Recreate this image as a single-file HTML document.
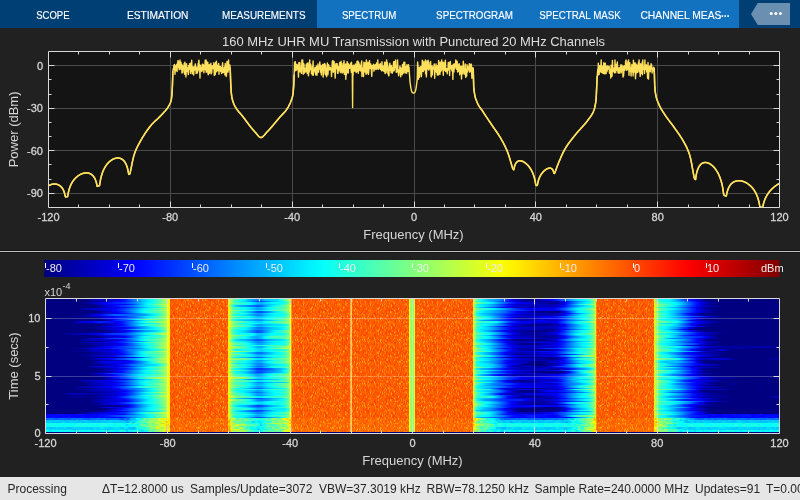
<!DOCTYPE html>
<html><head><meta charset="utf-8"><style>
html,body{margin:0;padding:0;width:800px;height:500px;overflow:hidden;background:#212121}
#sg{position:absolute;left:45px;top:298px;width:735px;height:135px;overflow:hidden}
#sg div{position:absolute;left:0;width:735px}
svg{position:absolute;left:0;top:0;will-change:transform}
text{font-family:"Liberation Sans",sans-serif} .tl{stroke:#d6d6d6;stroke-width:0.28px}
</style></head><body>
<div id="sg"><div style="top:0px;height:1px;background:linear-gradient(90deg,#000080 0px,#000080 44px,#00008c 48px,#000099 52px,#0000ac 56px,#0000ca 60px,#0000e7 64px,#0006ff 68px,#0016ff 72px,#0024ff 76px,#0033ff 80px,#0052ff 84px,#0080ff 88px,#00b0ff 92px,#00e3ff 96px,#00eeff 100px,#00eeff 104px,#00e7ff 108px,#01fffe 112px,#56ffa9 116px,#a4ff5b 120px,#fffa00 124px,#ffe500 125px,#ffe500 183px,#e5ff1a 184px,#6cff93 188px,#47ffb8 192px,#39ffc6 196px,#27ffd8 200px,#08fff7 204px,#00e7ff 208px,#00b5ff 212px,#00a8ff 216px,#00c4ff 220px,#00ddff 224px,#00fcff 228px,#13ffec 232px,#26ffd9 236px,#4cffb3 240px,#9bff64 244px,#d9ff26 245.5px,#ffe500 246.5px,#ffe500 428px,#b5ff4a 429px,#2affd5 432px,#04fffb 436px,#00eeff 440px,#00ddff 444px,#00c2ff 448px,#009dff 452px,#0078ff 456px,#0054ff 460px,#0021ff 464px,#0000f7 468px,#0000d3 472px,#0000ba 476px,#0000be 480px,#0000c3 484px,#0000c8 488px,#0000ce 492px,#0000d9 496px,#0000e3 500px,#0000e6 504px,#0000db 508px,#0000e2 512px,#0000fc 516px,#001dff 520px,#004aff 524px,#0075ff 528px,#00a2ff 532px,#00dbff 536px,#08fff7 540px,#3dffc2 544px,#84ff7b 548px,#b4ff4b 550px,#ffe500 551.3px,#ffe500 609px,#c8ff37 610px,#77ff88 612px,#13ffec 616px,#00e9ff 620px,#00beff 624px,#0093ff 628px,#0083ff 632px,#0070ff 636px,#005eff 640px,#0048ff 644px,#0028ff 648px,#0008ff 652px,#0000eb 656px,#0000c0 660px,#00009a 664px,#000080 668px,#000080 676px,#000085 680px,#000099 684px,#000092 688px,#000085 692px,#000080 696px,#000080 732px)"></div><div style="top:1px;height:2px;background:linear-gradient(90deg,#000080 0px,#000080 40px,#000089 44px,#0000b4 48px,#0000cf 52px,#0000cb 56px,#0000c7 60px,#0000c4 64px,#0000d1 68px,#0000e5 72px,#0000fb 76px,#0015ff 80px,#003dff 84px,#0067ff 88px,#0094ff 92px,#00baff 96px,#00daff 100px,#00f5ff 104px,#0ffff0 108px,#3bffc4 112px,#6eff91 116px,#a1ff5e 120px,#fcff03 124px,#ffe500 125px,#ffe500 183px,#efff10 184px,#76ff89 188px,#39ffc6 192px,#14ffeb 196px,#00edff 200px,#00bbff 204px,#00a1ff 208px,#0087ff 212px,#0095ff 216px,#00c0ff 220px,#00ceff 224px,#00daff 228px,#00dcff 232px,#0ffff0 236px,#55ffaa 240px,#b7ff48 244px,#ecff13 245.5px,#ffe500 246.5px,#ffe500 428px,#cdff32 429px,#55ffaa 432px,#12ffed 436px,#00dbff 440px,#00b8ff 444px,#00a7ff 448px,#0093ff 452px,#007fff 456px,#004cff 460px,#0014ff 464px,#0000e6 468px,#0000c1 472px,#0000a6 476px,#000099 480px,#00008d 484px,#000095 488px,#0000a7 492px,#0000bc 496px,#0000d2 500px,#0000e6 504px,#0000fb 508px,#0022ff 512px,#0046ff 516px,#0066ff 520px,#0091ff 524px,#00b8ff 528px,#00d4ff 532px,#00ecff 536px,#00f8ff 540px,#29ffd6 544px,#7eff81 548px,#b5ff4a 550px,#ffe500 551.3px,#ffe500 609px,#b3ff4c 610px,#53ffac 612px,#03fffc 616px,#03fffc 620px,#02fffd 624px,#00d9ff 628px,#00a9ff 632px,#0071ff 636px,#0040ff 640px,#001dff 644px,#0000fb 648px,#0000da 652px,#0000b2 656px,#000088 660px,#000080 664px,#000080 716px,#000081 720px,#000080 724px,#000080 732px)"></div><div style="top:3px;height:1px;background:linear-gradient(90deg,#000080 0px,#000080 56px,#00009f 60px,#0000bf 64px,#0000df 68px,#0000f5 72px,#0009ff 76px,#001cff 80px,#003aff 84px,#005bff 88px,#007eff 92px,#00a4ff 96px,#00c6ff 100px,#00ebff 104px,#0afff5 108px,#31ffce 112px,#60ff9f 116px,#94ff6b 120px,#fbff04 124px,#ffe500 125px,#ffe500 183px,#e0ff1f 184px,#52ffad 188px,#18ffe7 192px,#00f7ff 196px,#00d6ff 200px,#00aaff 204px,#007bff 208px,#0049ff 212px,#003fff 216px,#0062ff 220px,#008fff 224px,#00b8ff 228px,#00d9ff 232px,#00f6ff 236px,#20ffdf 240px,#7eff81 244px,#caff35 245.5px,#ffe500 246.5px,#ffe500 428px,#b0ff4f 429px,#27ffd8 432px,#00fbff 436px,#00dcff 440px,#00c2ff 444px,#00a0ff 448px,#007cff 452px,#0057ff 456px,#0032ff 460px,#0007ff 464px,#0000e8 468px,#0000ce 472px,#0000b9 476px,#0000b2 480px,#0000ab 484px,#0000a5 488px,#00009f 492px,#00009d 496px,#00009b 500px,#000099 504px,#000097 508px,#0000a8 512px,#0000cb 516px,#0000ef 520px,#0024ff 524px,#0057ff 528px,#0084ff 532px,#00aeff 536px,#00ccff 540px,#00f2ff 544px,#46ffb9 548px,#8cff73 550px,#ffe500 551.3px,#ffe500 609px,#c6ff39 610px,#76ff89 612px,#1dffe2 616px,#05fffa 620px,#00eaff 624px,#00d0ff 628px,#00b5ff 632px,#0093ff 636px,#006eff 640px,#0043ff 644px,#001bff 648px,#0000f2 652px,#0000cd 656px,#0000aa 660px,#000090 664px,#000080 668px,#000080 732px)"></div><div style="top:4px;height:2px;background:linear-gradient(90deg,#000080 0px,#000080 36px,#000092 40px,#0000a7 44px,#0000bc 48px,#0000d2 52px,#0000e7 56px,#0000fc 60px,#000cff 64px,#0015ff 68px,#0020ff 72px,#002fff 76px,#003eff 80px,#0057ff 84px,#0074ff 88px,#0093ff 92px,#00bdff 96px,#00e1ff 100px,#03fffc 104px,#1cffe3 108px,#3fffc0 112px,#69ff96 116px,#98ff67 120px,#fbff04 124px,#ffe500 125px,#ffe500 183px,#e9ff16 184px,#72ff8d 188px,#48ffb7 192px,#36ffc9 196px,#24ffdb 200px,#06fff9 204px,#00e5ff 208px,#00c1ff 212px,#00b5ff 216px,#00d2ff 220px,#00e8ff 224px,#00fbff 228px,#05fffa 232px,#0cfff3 236px,#1dffe2 240px,#76ff89 244px,#c7ff38 245.5px,#ffe500 246.5px,#ffe500 428px,#d9ff26 429px,#7fff80 432px,#4fffb0 436px,#2bffd4 440px,#0bfff4 444px,#00e2ff 448px,#00b9ff 452px,#008eff 456px,#0064ff 460px,#003aff 464px,#001cff 468px,#0002ff 472px,#0000ec 476px,#0000e5 480px,#0000d8 484px,#0000c5 488px,#0000b7 492px,#0000ad 496px,#0000a4 500px,#00009a 504px,#000091 508px,#00009a 512px,#0000c7 516px,#0000f4 520px,#002eff 524px,#0065ff 528px,#0098ff 532px,#00c6ff 536px,#00e9ff 540px,#13ffec 544px,#62ff9d 548px,#9eff61 550px,#ffe500 551.3px,#ffe500 609px,#cfff30 610px,#8aff75 612px,#3fffc0 616px,#2dffd2 620px,#19ffe6 624px,#04fffb 628px,#00eeff 632px,#00c0ff 636px,#0091ff 640px,#0064ff 644px,#003aff 648px,#0010ff 652px,#0000e9 656px,#0000c4 660px,#0000aa 664px,#00009b 668px,#00008c 672px,#000080 676px,#000080 732px)"></div><div style="top:6px;height:1px;background:linear-gradient(90deg,#000080 0px,#000080 44px,#00008f 48px,#0000b0 52px,#0000d2 56px,#0000f3 60px,#0000ff 64px,#0000fc 68px,#0000fc 72px,#0001ff 76px,#0004ff 80px,#0012ff 84px,#003aff 88px,#0074ff 92px,#00b0ff 96px,#00e7ff 100px,#1affe5 104px,#46ffb9 108px,#71ff8e 112px,#95ff6a 116px,#b9ff46 120px,#fffb00 124px,#ffe500 125px,#ffe500 183px,#ddff22 184px,#50ffaf 188px,#2bffd4 192px,#22ffdd 196px,#19ffe6 200px,#04fffb 204px,#00dcff 208px,#00a5ff 212px,#0097ff 216px,#00b2ff 220px,#00c5ff 224px,#00d6ff 228px,#00efff 232px,#10ffef 236px,#3bffc4 240px,#92ff6d 244px,#d5ff2a 245.5px,#ffe500 246.5px,#ffe500 428px,#a3ff5c 429px,#11ffee 432px,#00ecff 436px,#00d5ff 440px,#00c1ff 444px,#009fff 448px,#0076ff 452px,#004cff 456px,#0022ff 460px,#0000f8 464px,#0000da 468px,#0000c6 472px,#0000ba 476px,#0000bc 480px,#0000be 484px,#0000c1 488px,#0000c8 492px,#0000c6 496px,#0000bd 500px,#0000b3 504px,#0000a9 508px,#0000b2 512px,#0000cd 516px,#0000fd 520px,#0048ff 524px,#0090ff 528px,#00d3ff 532px,#13ffec 536px,#47ffb8 540px,#6dff92 544px,#9dff62 548px,#c2ff3d 550px,#ffe500 551.3px,#ffe500 609px,#e1ff1e 610px,#b1ff4e 612px,#73ff8c 616px,#56ffa9 620px,#39ffc6 624px,#1affe5 628px,#00faff 632px,#00d3ff 636px,#00a3ff 640px,#006eff 644px,#003cff 648px,#000aff 652px,#0000db 656px,#0000ae 660px,#00008f 664px,#000080 668px,#000080 732px)"></div><div style="top:7px;height:2px;background:linear-gradient(90deg,#000080 0px,#000080 48px,#00008e 52px,#0000a7 56px,#0000c1 60px,#0000da 64px,#0000f4 68px,#0011ff 72px,#0030ff 76px,#0042ff 80px,#005eff 84px,#007dff 88px,#009fff 92px,#00c4ff 96px,#00e3ff 100px,#00feff 104px,#1affe5 108px,#43ffbc 112px,#72ff8d 116px,#a3ff5c 120px,#feff01 124px,#ffe500 125px,#ffe500 183px,#d0ff2f 184px,#0dfff2 188px,#00c6ff 192px,#00a7ff 196px,#009dff 200px,#0087ff 204px,#0070ff 208px,#0054ff 212px,#0061ff 216px,#0097ff 220px,#00c5ff 224px,#00f2ff 228px,#17ffe8 232px,#38ffc7 236px,#65ff9a 240px,#afff50 244px,#e4ff1b 245.5px,#ffe500 246.5px,#ffe500 428px,#b8ff47 429px,#31ffce 432px,#00fbff 436px,#00dcff 440px,#00c1ff 444px,#009eff 448px,#0078ff 452px,#0053ff 456px,#002eff 460px,#0008ff 464px,#0000ec 468px,#0000d5 472px,#0000c2 476px,#0000bd 480px,#0000b8 484px,#0000b3 488px,#0000b3 492px,#0000b8 496px,#0000b7 500px,#0000b6 504px,#0000b6 508px,#0000c7 512px,#0000eb 516px,#0010ff 520px,#0040ff 524px,#006fff 528px,#009aff 532px,#00c2ff 536px,#00ddff 540px,#02fffd 544px,#50ffaf 548px,#91ff6e 550px,#ffe500 551.3px,#ffe500 609px,#deff21 610px,#a5ff5a 612px,#5effa1 616px,#3dffc2 620px,#1cffe3 624px,#00f8ff 628px,#00d6ff 632px,#00abff 636px,#0080ff 640px,#0057ff 644px,#0031ff 648px,#000bff 652px,#0000e8 656px,#0000c8 660px,#0000b0 664px,#0000a2 668px,#000093 672px,#000085 676px,#000080 680px,#000080 720px,#000082 724px,#00008b 728px,#000095 732px)"></div><div style="top:9px;height:1px;background:linear-gradient(90deg,#000080 0px,#000080 48px,#00008f 52px,#0000aa 56px,#0000c5 60px,#0000cf 64px,#0000d8 68px,#0000e5 72px,#0000f5 76px,#0005ff 80px,#0020ff 84px,#0044ff 88px,#006aff 92px,#0093ff 96px,#00b6ff 100px,#00d5ff 104px,#00eeff 108px,#0afff5 112px,#33ffcc 116px,#6bff94 120px,#efff10 124px,#ffe500 125px,#ffe500 183px,#e4ff1b 184px,#61ff9e 188px,#33ffcc 192px,#1fffe0 196px,#0cfff3 200px,#00eaff 204px,#00ccff 208px,#00aaff 212px,#00b0ff 216px,#00dfff 220px,#07fff8 224px,#2bffd4 228px,#38ffc7 232px,#41ffbe 236px,#56ffa9 240px,#95ff6a 244px,#d4ff2b 245.5px,#ffe500 246.5px,#ffe500 428px,#9eff61 429px,#00f9ff 432px,#00c6ff 436px,#00a0ff 440px,#007eff 444px,#005eff 448px,#003bff 452px,#0018ff 456px,#0000f4 460px,#0000d2 464px,#0000bb 468px,#0000af 472px,#0000a8 476px,#0000af 480px,#0000b6 484px,#0000bd 488px,#0000c9 492px,#0000cb 496px,#0000cc 500px,#0000ce 504px,#0000d0 508px,#0000e4 512px,#000cff 516px,#0035ff 520px,#0069ff 524px,#009cff 528px,#00c9ff 532px,#00f3ff 536px,#12ffed 540px,#27ffd8 544px,#62ff9d 548px,#99ff66 550px,#ffe500 551.3px,#ffe500 609px,#c5ff3a 610px,#76ff89 612px,#19ffe6 616px,#00fcff 620px,#00deff 624px,#00c0ff 628px,#00a1ff 632px,#007aff 636px,#004fff 640px,#0026ff 644px,#0000fe 648px,#0000d7 652px,#0000b4 656px,#000093 660px,#000083 664px,#000080 668px,#000080 732px)"></div><div style="top:10px;height:2px;background:linear-gradient(90deg,#000080 0px,#000080 32px,#000096 36px,#0000b4 40px,#0000c3 44px,#0000cd 48px,#0000d7 52px,#0000e1 56px,#0000ea 60px,#0000f4 64px,#0000fe 68px,#000eff 72px,#0025ff 76px,#003cff 80px,#005dff 84px,#0082ff 88px,#00a9ff 92px,#00d3ff 96px,#00f7ff 100px,#17ffe8 104px,#2fffd0 108px,#50ffaf 112px,#76ff89 116px,#a1ff5e 120px,#fdff02 124px,#ffe500 125px,#ffe500 183px,#e2ff1d 184px,#59ffa6 188px,#2bffd4 192px,#17ffe8 196px,#04fffb 200px,#00e3ff 204px,#00c2ff 208px,#009dff 212px,#00a0ff 216px,#00ccff 220px,#00f1ff 224px,#15ffea 228px,#2fffd0 232px,#46ffb9 236px,#68ff97 240px,#aaff55 244px,#e0ff1f 245.5px,#ffe500 246.5px,#ffe500 428px,#cdff32 429px,#67ff98 432px,#41ffbe 436px,#29ffd6 440px,#14ffeb 444px,#00f7ff 448px,#00d9ff 452px,#00baff 456px,#009bff 460px,#0070ff 464px,#004eff 468px,#002fff 472px,#0015ff 476px,#000aff 480px,#0000fd 484px,#0000f2 488px,#0000ec 492px,#0000f0 496px,#0000f4 500px,#0000f7 504px,#0000fb 508px,#0012ff 512px,#003aff 516px,#0063ff 520px,#0095ff 524px,#00c6ff 528px,#00f1ff 532px,#1affe5 536px,#36ffc9 540px,#5affa5 544px,#99ff66 548px,#c2ff3d 550px,#ffe500 551.3px,#ffe500 609px,#dfff20 610px,#a6ff59 612px,#5bffa4 616px,#3bffc4 620px,#1affe5 624px,#00f7ff 628px,#00d5ff 632px,#00aaff 636px,#0080ff 640px,#0053ff 644px,#0028ff 648px,#0000fc 652px,#0000d4 656px,#0000ae 660px,#000091 664px,#000080 668px,#000080 732px)"></div><div style="top:12px;height:1px;background:linear-gradient(90deg,#000080 0px,#000080 44px,#000087 48px,#00009f 52px,#0000b6 56px,#0000cd 60px,#0000e4 64px,#0000fb 68px,#0016ff 72px,#0033ff 76px,#0050ff 80px,#0077ff 84px,#009eff 88px,#00c2ff 92px,#00e9ff 96px,#0bfff4 100px,#29ffd6 104px,#3fffc0 108px,#5fffa0 112px,#81ff7e 116px,#a8ff57 120px,#feff01 124px,#ffe500 125px,#ffe500 183px,#f4ff0b 184px,#97ff68 188px,#6eff91 192px,#59ffa6 196px,#44ffbb 200px,#22ffdd 204px,#00feff 208px,#00d6ff 212px,#00d7ff 216px,#02fffd 220px,#24ffdb 224px,#43ffbc 228px,#59ffa6 232px,#6cff93 236px,#81ff7e 240px,#b2ff4d 244px,#e2ff1d 245.5px,#ffe500 246.5px,#ffe500 428px,#c4ff3b 429px,#4effb1 432px,#1affe5 436px,#00f2ff 440px,#00cfff 444px,#00aeff 448px,#0097ff 452px,#007fff 456px,#0068ff 460px,#0050ff 464px,#0045ff 468px,#003eff 472px,#003bff 476px,#002aff 480px,#0018ff 484px,#0005ff 488px,#0000f7 492px,#0000ee 496px,#0000e5 500px,#0000dc 504px,#0000d9 508px,#0000ef 512px,#0018ff 516px,#0040ff 520px,#0074ff 524px,#00a6ff 528px,#00d3ff 532px,#00fdff 536px,#1bffe4 540px,#40ffbf 544px,#84ff7b 548px,#b4ff4b 550px,#ffe500 551.3px,#ffe500 609px,#e6ff19 610px,#aeff51 612px,#57ffa8 616px,#28ffd7 620px,#00f7ff 624px,#00d0ff 628px,#00b4ff 632px,#0090ff 636px,#006bff 640px,#0048ff 644px,#0028ff 648px,#0007ff 652px,#0000ea 656px,#0000c7 660px,#0000ad 664px,#00009c 668px,#00008b 672px,#000080 676px,#000080 732px)"></div><div style="top:13px;height:2px;background:linear-gradient(90deg,#000080 0px,#000080 48px,#000088 52px,#00009f 56px,#0000b6 60px,#0000cd 64px,#0000e5 68px,#0000ff 72px,#001dff 76px,#003aff 80px,#0061ff 84px,#008bff 88px,#00b8ff 92px,#00e7ff 96px,#12ffed 100px,#2effd1 104px,#39ffc6 108px,#4effb1 112px,#69ff96 116px,#8fff70 120px,#f7ff08 124px,#ffe500 125px,#ffe500 183px,#e8ff17 184px,#62ff9d 188px,#25ffda 192px,#03fffc 196px,#00e2ff 200px,#00b6ff 204px,#0089ff 208px,#0057ff 212px,#004eff 216px,#006eff 220px,#0093ff 224px,#00c4ff 228px,#00ebff 232px,#10ffef 236px,#40ffbf 240px,#98ff67 244px,#d9ff26 245.5px,#ffe500 246.5px,#ffe500 428px,#b6ff49 429px,#2effd1 432px,#00faff 436px,#00ddff 440px,#00cdff 444px,#00b5ff 448px,#009aff 452px,#0080ff 456px,#0066ff 460px,#0040ff 464px,#001bff 468px,#0000f9 472px,#0000dd 476px,#0000cf 480px,#0000c2 484px,#0000ab 488px,#000091 492px,#000080 496px,#000080 512px,#00009a 516px,#0000e3 520px,#0038ff 524px,#008aff 528px,#00d8ff 532px,#0bfff4 536px,#1affe5 540px,#30ffcf 544px,#6aff95 548px,#9fff60 550px,#ffe500 551.3px,#ffe500 609px,#c8ff37 610px,#79ff86 612px,#20ffdf 616px,#07fff8 620px,#00ebff 624px,#00d0ff 628px,#00b3ff 632px,#008dff 636px,#0067ff 640px,#0042ff 644px,#0020ff 648px,#0000fd 652px,#0000dc 656px,#0000b9 660px,#00009f 664px,#00008f 668px,#000080 672px,#000080 732px)"></div><div style="top:15px;height:1px;background:linear-gradient(90deg,#000080 0px,#000080 40px,#000092 44px,#0000a0 48px,#0000ac 52px,#0000b8 56px,#0000c3 60px,#0000cf 64px,#0000db 68px,#0000ea 72px,#0000fd 76px,#0013ff 80px,#0033ff 84px,#0057ff 88px,#007cff 92px,#00a4ff 96px,#00c7ff 100px,#00e6ff 104px,#00ffff 108px,#22ffdd 112px,#4dffb2 116px,#83ff7c 120px,#f6ff09 124px,#ffe500 125px,#ffe500 183px,#eeff11 184px,#7cff83 188px,#4affb5 192px,#2fffd0 196px,#18ffe7 200px,#00f2ff 204px,#00cdff 208px,#00a3ff 212px,#00a2ff 216px,#00caff 220px,#00eaff 224px,#02fffd 228px,#0dfff2 232px,#16ffe9 236px,#2affd5 240px,#77ff88 244px,#c4ff3b 245.5px,#ffe500 246.5px,#ffe500 428px,#a6ff59 429px,#00fdff 432px,#00c4ff 436px,#00b2ff 440px,#00a4ff 444px,#008eff 448px,#0076ff 452px,#005eff 456px,#0046ff 460px,#002dff 464px,#0012ff 468px,#0000f6 472px,#0000e0 476px,#0000d8 480px,#0000d0 484px,#0000c8 488px,#0000c5 492px,#0000c3 496px,#0000b9 500px,#0000ae 504px,#0000a3 508px,#0000ab 512px,#0000c5 516px,#0000df 520px,#0006ff 524px,#003dff 528px,#0074ff 532px,#00a7ff 536px,#00ceff 540px,#00fdff 544px,#56ffa9 548px,#98ff67 550px,#ffe500 551.3px,#ffe500 609px,#e0ff1f 610px,#a6ff59 612px,#56ffa9 616px,#27ffd8 620px,#00f6ff 624px,#00c6ff 628px,#0095ff 632px,#005dff 636px,#0024ff 640px,#0000eb 644px,#0000c9 648px,#0000aa 652px,#000090 656px,#000080 660px,#000080 732px)"></div><div style="top:16px;height:2px;background:linear-gradient(90deg,#000080 0px,#000080 32px,#000082 36px,#000095 40px,#0000b1 44px,#0000cd 48px,#0000e9 52px,#0006ff 56px,#0022ff 60px,#003eff 64px,#005aff 68px,#0064ff 72px,#0062ff 76px,#0060ff 80px,#0068ff 84px,#0074ff 88px,#0082ff 92px,#0092ff 96px,#009fff 100px,#00c7ff 104px,#00e8ff 108px,#14ffeb 112px,#49ffb6 116px,#85ff7a 120px,#f8ff07 124px,#ffe500 125px,#ffe500 183px,#daff25 184px,#35ffca 188px,#00ffff 192px,#00efff 196px,#00e0ff 200px,#00c3ff 204px,#00a6ff 208px,#0084ff 212px,#008bff 216px,#00baff 220px,#00d4ff 224px,#00ecff 228px,#00fbff 232px,#07fff8 236px,#1effe1 240px,#71ff8e 244px,#c1ff3e 245.5px,#ffe500 246.5px,#ffe500 428px,#a4ff5b 429px,#0dfff2 432px,#00e5ff 436px,#00cbff 440px,#00b5ff 444px,#0097ff 448px,#0077ff 452px,#0056ff 456px,#0035ff 460px,#000cff 464px,#0000ed 468px,#0000d4 472px,#0000bf 476px,#0000b8 480px,#0000b2 484px,#0000ac 488px,#0000a8 492px,#0000a8 500px,#0000a9 504px,#0000a9 508px,#0000bb 512px,#0000e0 516px,#0006ff 520px,#0044ff 524px,#007fff 528px,#00b6ff 532px,#00e9ff 536px,#12ffed 540px,#41ffbe 544px,#8dff72 548px,#bcff43 550px,#ffe500 551.3px,#ffe500 609px,#d5ff2a 610px,#91ff6e 612px,#38ffc7 616px,#14ffeb 620px,#00efff 624px,#00c9ff 628px,#00a3ff 632px,#0076ff 636px,#0048ff 640px,#001bff 644px,#0000f1 648px,#0000c7 652px,#0000a2 656px,#000080 660px,#000080 732px)"></div><div style="top:18px;height:1px;background:linear-gradient(90deg,#000080 0px,#000080 24px,#00008f 28px,#00009c 32px,#0000a3 36px,#0000aa 40px,#0000b4 44px,#0000bd 48px,#0000c7 52px,#0000d1 56px,#0000db 60px,#0000e9 64px,#0000f6 68px,#0008ff 72px,#001cff 76px,#002fff 80px,#004dff 84px,#006fff 88px,#0096ff 92px,#00c2ff 96px,#00e9ff 100px,#0cfff3 104px,#28ffd7 108px,#4dffb2 112px,#76ff89 116px,#a3ff5c 120px,#fdff02 124px,#ffe500 125px,#ffe500 183px,#f0ff0f 184px,#88ff77 188px,#5dffa2 192px,#46ffb9 196px,#30ffcf 200px,#0efff1 204px,#00e9ff 208px,#00bbff 212px,#00b1ff 216px,#00d1ff 220px,#00e9ff 224px,#00feff 228px,#0bfff4 232px,#14ffeb 236px,#29ffd6 240px,#7fff80 244px,#caff35 245.5px,#ffe500 246.5px,#ffe500 428px,#d6ff29 429px,#74ff8b 432px,#3effc1 436px,#14ffeb 440px,#00eeff 444px,#00c0ff 448px,#0098ff 452px,#0073ff 456px,#004fff 460px,#002bff 464px,#0013ff 468px,#0000fe 472px,#0000ef 476px,#0000ee 480px,#0000ec 484px,#0000ea 488px,#0000ed 492px,#0000f5 496px,#0000fc 500px,#0005ff 504px,#000cff 508px,#0021ff 512px,#0044ff 516px,#0067ff 520px,#0096ff 524px,#00c4ff 528px,#00ecff 532px,#11ffee 536px,#2affd5 540px,#44ffbb 544px,#7eff81 548px,#adff52 550px,#ffe500 551.3px,#ffe500 609px,#dbff24 610px,#9eff61 612px,#4fffb0 616px,#30ffcf 620px,#10ffef 624px,#00eeff 628px,#00d5ff 632px,#00b8ff 636px,#009bff 640px,#007fff 644px,#0066ff 648px,#004dff 652px,#0038ff 656px,#0021ff 660px,#0000f3 664px,#0000cf 668px,#0000ab 672px,#000086 676px,#000080 680px,#000080 712px,#000083 716px,#000091 720px,#000085 724px,#000080 728px,#000080 732px)"></div><div style="top:19px;height:2px;background:linear-gradient(90deg,#000080 0px,#000080 44px,#000086 48px,#00009f 52px,#0000b9 56px,#0000d2 60px,#0000ec 64px,#0007ff 68px,#001bff 72px,#0027ff 76px,#0033ff 80px,#0049ff 84px,#0062ff 88px,#007eff 92px,#00a3ff 96px,#00ceff 100px,#00f4ff 104px,#14ffeb 108px,#3cffc3 112px,#6aff95 116px,#99ff66 120px,#faff05 124px,#ffe500 125px,#ffe500 183px,#e3ff1c 184px,#57ffa8 188px,#28ffd7 192px,#1cffe3 196px,#11ffee 200px,#00f9ff 204px,#00e0ff 208px,#00c3ff 212px,#00c7ff 216px,#00e8ff 220px,#03fffc 224px,#1bffe4 228px,#29ffd6 232px,#34ffcb 236px,#4dffb2 240px,#95ff6a 244px,#d5ff2a 245.5px,#ffe500 246.5px,#ffe500 428px,#ccff33 429px,#61ff9e 432px,#2fffd0 436px,#09fff6 440px,#00e7ff 444px,#00beff 448px,#0092ff 452px,#0065ff 456px,#0034ff 460px,#0003ff 464px,#0000dd 468px,#0000bc 472px,#0000a1 476px,#00009e 480px,#0000ab 484px,#0000b8 488px,#0000ca 492px,#0000e1 496px,#0000f8 500px,#0004ff 504px,#0000fd 508px,#000aff 512px,#0028ff 516px,#0047ff 520px,#0071ff 524px,#009cff 528px,#00c6ff 532px,#00ecff 536px,#07fff8 540px,#2affd5 544px,#6fff90 548px,#a5ff5a 550px,#ffe500 551.3px,#ffe500 609px,#d3ff2c 610px,#8bff74 612px,#2effd1 616px,#09fff6 620px,#00e4ff 624px,#00c4ff 628px,#00a3ff 632px,#007bff 636px,#0052ff 640px,#002bff 644px,#0008ff 648px,#0000e7 652px,#0000cb 656px,#0000b0 660px,#00009e 664px,#000095 668px,#00008a 672px,#000080 676px,#000080 732px)"></div><div style="top:21px;height:1px;background:linear-gradient(90deg,#000080 0px,#000080 52px,#00009d 56px,#0000bb 60px,#0000d8 64px,#0000f6 68px,#0019ff 72px,#003fff 76px,#0065ff 80px,#0096ff 84px,#00caff 88px,#02fffd 92px,#3affc5 96px,#6eff91 100px,#72ff8d 104px,#6eff91 108px,#74ff8b 112px,#7dff82 116px,#93ff6c 120px,#f5ff0a 124px,#ffe500 125px,#ffe500 183px,#dbff24 184px,#2dffd2 188px,#00f1ff 192px,#00e6ff 196px,#00dcff 200px,#00c5ff 204px,#00acff 208px,#0090ff 212px,#009cff 216px,#00d1ff 220px,#00f9ff 224px,#20ffdf 228px,#3cffc3 232px,#56ffa9 236px,#7aff85 240px,#b9ff46 244px,#e8ff17 245.5px,#ffe500 246.5px,#ffe500 428px,#b7ff48 429px,#34ffcb 432px,#07fff8 436px,#00e5ff 440px,#00c9ff 444px,#00a5ff 448px,#007eff 452px,#0058ff 456px,#0031ff 460px,#000aff 464px,#0000ee 468px,#0000d7 472px,#0000c4 476px,#0000c0 480px,#0000bc 484px,#0000b8 488px,#0000b9 492px,#0000be 496px,#0000c3 500px,#0000c8 504px,#0000cd 508px,#0000e4 512px,#000fff 516px,#0038ff 520px,#006dff 524px,#00a1ff 528px,#00cfff 532px,#00faff 536px,#1bffe4 540px,#42ffbd 544px,#87ff78 548px,#b6ff49 550px,#ffe500 551.3px,#ffe500 609px,#baff45 610px,#61ff9e 612px,#0afff5 616px,#00fcff 620px,#00eeff 624px,#00dfff 628px,#00d0ff 632px,#00b9ff 636px,#00a1ff 640px,#0063ff 644px,#0026ff 648px,#0000e9 652px,#0000b0 656px,#000080 660px,#000080 732px)"></div><div style="top:22px;height:1px;background:linear-gradient(90deg,#000080 0px,#000080 28px,#000083 32px,#000080 36px,#000080 56px,#000084 60px,#0000ba 64px,#0000f0 68px,#002aff 72px,#003bff 76px,#003bff 80px,#0045ff 84px,#0059ff 88px,#008aff 92px,#00beff 96px,#00edff 100px,#0cfff3 104px,#1effe1 108px,#39ffc6 112px,#60ff9f 116px,#9bff64 120px,#feff01 124px,#ffe500 125px,#ffe500 183px,#d6ff29 184px,#24ffdb 188px,#00eaff 192px,#00d2ff 196px,#00c0ff 200px,#00b4ff 204px,#00a6ff 208px,#0095ff 212px,#0092ff 216px,#00acff 220px,#00bfff 224px,#00d6ff 228px,#00fdff 232px,#21ffde 236px,#50ffaf 240px,#99ff66 244px,#d6ff29 245.5px,#ffe500 246.5px,#ffe500 428px,#acff53 429px,#04fffb 432px,#00b3ff 436px,#0092ff 440px,#0084ff 444px,#006fff 448px,#0056ff 452px,#003cff 456px,#0021ff 460px,#0007ff 464px,#0000e7 468px,#0000c5 472px,#0000a8 476px,#0000a2 480px,#0000bc 484px,#0000d7 488px,#0000f6 492px,#0000f3 496px,#0000e0 500px,#0000cc 504px,#0000be 508px,#0000d7 512px,#0003ff 516px,#002eff 520px,#0057ff 524px,#0079ff 528px,#0096ff 532px,#00b3ff 536px,#00d2ff 540px,#00f9ff 544px,#4cffb3 548px,#8fff70 550px,#ffe500 551.3px,#ffe500 609px,#d6ff29 610px,#92ff6d 612px,#3effc1 616px,#20ffdf 620px,#09fff6 624px,#00f1ff 628px,#00daff 632px,#00a0ff 636px,#005aff 640px,#0015ff 644px,#0000dc 648px,#0000ca 652px,#0000bd 656px,#0000b0 660px,#0000a0 664px,#000092 668px,#000085 672px,#000080 676px,#000080 680px,#000089 684px,#000093 688px,#000083 692px,#000080 696px,#000080 732px)"></div><div style="top:23px;height:2px;background:linear-gradient(90deg,#000080 0px,#000080 20px,#000082 24px,#00009a 28px,#0000b5 32px,#0000d0 36px,#0000e3 40px,#0000f2 44px,#0001ff 48px,#000fff 52px,#001eff 56px,#0015ff 60px,#000dff 64px,#0004ff 68px,#0000fe 72px,#0010ff 76px,#0032ff 80px,#005fff 84px,#008fff 88px,#00c1ff 92px,#00f3ff 96px,#20ffdf 100px,#48ffb7 104px,#69ff96 108px,#89ff76 112px,#9fff60 116px,#b8ff47 120px,#fffe00 124px,#ffe500 125px,#ffe500 183px,#f8ff07 184px,#a0ff5f 188px,#71ff8e 192px,#54ffab 196px,#37ffc8 200px,#17ffe8 204px,#00f5ff 208px,#00d0ff 212px,#00d4ff 216px,#00ffff 220px,#24ffdb 224px,#44ffbb 228px,#5cffa3 232px,#70ff8f 236px,#7aff85 240px,#a7ff58 244px,#dbff24 245.5px,#ffe500 246.5px,#ffe500 428px,#d4ff2b 429px,#6bff94 432px,#3fffc0 436px,#2fffd0 440px,#23ffdc 444px,#0ffff0 448px,#00f8ff 452px,#00c2ff 456px,#008cff 460px,#0056ff 464px,#002cff 468px,#000cff 472px,#0000f7 476px,#0000f0 480px,#0000ea 484px,#0000e3 488px,#0000e0 492px,#0000e1 496px,#0000e2 500px,#0000e3 504px,#0000e6 508px,#0000fe 512px,#0029ff 516px,#0054ff 520px,#008aff 524px,#00bdff 528px,#00ecff 532px,#18ffe7 536px,#38ffc7 540px,#66ff99 544px,#b0ff4f 548px,#d6ff29 550px,#ffe500 551.3px,#ffe500 609px,#e3ff1c 610px,#b2ff4d 612px,#75ff8a 616px,#5bffa4 620px,#3fffc0 624px,#23ffdc 628px,#06fff9 632px,#00cdff 636px,#0095ff 640px,#005eff 644px,#002aff 648px,#0000fe 652px,#0000df 656px,#0000c2 660px,#0000ae 664px,#0000a3 668px,#000097 672px,#00008b 676px,#000080 680px,#000080 720px,#000082 724px,#000080 728px,#000080 732px)"></div><div style="top:25px;height:1px;background:linear-gradient(90deg,#000080 0px,#000080 24px,#000093 28px,#00009d 32px,#000093 36px,#00008a 40px,#000086 44px,#000095 48px,#0000a5 52px,#0000b4 56px,#0000c0 60px,#0000ca 64px,#0000d4 68px,#0000e2 72px,#000aff 76px,#0031ff 80px,#0062ff 84px,#0087ff 88px,#00a2ff 92px,#00bfff 96px,#00d8ff 100px,#00f2ff 104px,#05fffa 108px,#21ffde 112px,#59ffa6 116px,#9eff61 120px,#fffd00 124px,#ffe500 125px,#ffe500 183px,#f1ff0e 184px,#78ff87 188px,#32ffcd 192px,#03fffc 196px,#00fcff 200px,#07fff8 204px,#10ffef 208px,#0cfff3 212px,#00e7ff 216px,#00ebff 220px,#00e8ff 224px,#01fffe 228px,#24ffdb 232px,#43ffbc 236px,#6bff94 240px,#96ff69 244px,#d2ff2d 245.5px,#ffe500 246.5px,#ffe500 428px,#b5ff4a 429px,#29ffd6 432px,#00f1ff 436px,#00e7ff 440px,#00e2ff 444px,#00d6ff 448px,#00adff 452px,#0073ff 456px,#0038ff 460px,#0001ff 464px,#0000f0 468px,#0000e4 472px,#0000dd 476px,#0000db 480px,#0000d2 484px,#0000c8 488px,#0000c3 492px,#0000b9 496px,#0000af 500px,#0000a5 504px,#0000ad 508px,#0000d3 512px,#000cff 516px,#0044ff 520px,#007bff 524px,#00b1ff 528px,#00e2ff 532px,#00feff 536px,#04fffb 540px,#11ffee 544px,#4dffb2 548px,#95ff6a 550px,#ffe500 551.3px,#ffe500 609px,#ceff31 610px,#7bff84 612px,#05fffa 616px,#00e9ff 620px,#00dfff 624px,#00d5ff 628px,#00c7ff 632px,#0091ff 636px,#005cff 640px,#0027ff 644px,#0007ff 648px,#0000f2 652px,#0000e1 656px,#0000d0 660px,#0000af 664px,#000097 668px,#000080 672px,#000080 732px)"></div><div style="top:26px;height:2px;background:linear-gradient(90deg,#000080 0px,#000080 56px,#000094 60px,#0000ab 64px,#0000c2 68px,#0000dd 72px,#0000ff 76px,#0024ff 80px,#0054ff 84px,#0086ff 88px,#00bcff 92px,#00f3ff 96px,#19ffe6 100px,#31ffce 104px,#43ffbc 108px,#5dffa2 112px,#7cff83 116px,#a0ff5f 120px,#fcff03 124px,#ffe500 125px,#ffe500 183px,#eeff11 184px,#88ff77 188px,#63ff9c 192px,#4affb5 196px,#2cffd3 200px,#01fffe 204px,#00d3ff 208px,#00a3ff 212px,#009bff 216px,#00b8ff 220px,#00cbff 224px,#00dcff 228px,#00e3ff 232px,#00e8ff 236px,#00f7ff 240px,#5effa1 244px,#bbff44 245.5px,#ffe500 246.5px,#ffe500 428px,#c0ff3f 429px,#4affb5 432px,#1effe1 436px,#02fffd 440px,#00e9ff 444px,#00caff 448px,#00a8ff 452px,#0086ff 456px,#0058ff 460px,#0022ff 464px,#0000f7 468px,#0000d2 472px,#0000b1 476px,#00009f 480px,#000094 484px,#00008e 488px,#00008c 492px,#00008f 496px,#000093 500px,#000096 504px,#00009b 508px,#0000b3 512px,#0000de 516px,#0009ff 520px,#0040ff 524px,#0074ff 528px,#00a6ff 532px,#00d6ff 536px,#00faff 540px,#27ffd8 544px,#75ff8a 548px,#acff53 550px,#ffe500 551.3px,#ffe500 609px,#d3ff2c 610px,#91ff6e 612px,#46ffb9 616px,#2fffd0 620px,#18ffe7 624px,#00f2ff 628px,#00c5ff 632px,#008fff 636px,#0059ff 640px,#0024ff 644px,#0000f1 648px,#0000cc 652px,#0000b1 656px,#000099 660px,#000089 664px,#000082 668px,#000080 672px,#000080 732px)"></div><div style="top:28px;height:1px;background:linear-gradient(90deg,#000080 0px,#000080 12px,#000081 16px,#000083 20px,#000085 24px,#00008f 28px,#00008b 32px,#000082 36px,#000080 40px,#000080 48px,#000096 52px,#0000b4 56px,#0000d1 60px,#0000ef 64px,#0000fe 68px,#000dff 72px,#001dff 76px,#002eff 80px,#0048ff 84px,#0063ff 88px,#0080ff 92px,#009fff 96px,#00b9ff 100px,#00e6ff 104px,#12ffed 108px,#46ffb9 112px,#7eff81 116px,#aeff51 120px,#ffff00 124px,#ffe500 125px,#ffe500 183px,#fcff03 184px,#aaff55 188px,#7aff85 192px,#61ff9e 196px,#48ffb7 200px,#23ffdc 204px,#00fbff 208px,#00c7ff 212px,#00b8ff 216px,#00d2ff 220px,#00e5ff 224px,#00f8ff 228px,#06fff9 232px,#11ffee 236px,#27ffd8 240px,#76ff89 244px,#c6ff39 245.5px,#ffe500 246.5px,#ffe500 428px,#c2ff3d 429px,#42ffbd 432px,#04fffb 436px,#00d2ff 440px,#00a8ff 444px,#007cff 448px,#004eff 452px,#0020ff 456px,#0000f0 460px,#0000d0 464px,#0000bf 468px,#0000b1 472px,#0000a9 476px,#0000ad 480px,#0000ab 484px,#0000a9 488px,#0000ac 492px,#0000b3 496px,#0000b4 500px,#0000b2 504px,#0000b1 508px,#0000c2 512px,#0000e6 516px,#000eff 520px,#0040ff 524px,#0071ff 528px,#009dff 532px,#00c7ff 536px,#00e6ff 540px,#0efff1 544px,#5cffa3 548px,#9aff65 550px,#ffe500 551.3px,#ffe500 609px,#c2ff3d 610px,#70ff8f 612px,#18ffe7 616px,#04fffb 620px,#00edff 624px,#00d5ff 628px,#00bdff 632px,#009dff 636px,#007cff 640px,#0053ff 644px,#0029ff 648px,#0000ff 652px,#0000d9 656px,#0000b3 660px,#000090 664px,#000080 668px,#000080 732px)"></div><div style="top:29px;height:2px;background:linear-gradient(90deg,#000080 0px,#000080 44px,#000089 48px,#00009a 52px,#0000aa 56px,#0000b7 60px,#0000c1 64px,#0000cc 68px,#0000d9 72px,#0000ea 76px,#0000fa 80px,#0016ff 84px,#0036ff 88px,#005eff 92px,#0089ff 96px,#00afff 100px,#00d1ff 104px,#00ecff 108px,#11ffee 112px,#41ffbe 116px,#7aff85 120px,#f4ff0b 124px,#ffe500 125px,#ffe500 183px,#e4ff1b 184px,#5cffa3 188px,#29ffd6 192px,#10ffef 196px,#00f7ff 200px,#00d2ff 204px,#00acff 208px,#007dff 212px,#0076ff 216px,#0099ff 220px,#00b4ff 224px,#00ccff 228px,#00dbff 232px,#00e7ff 236px,#0bfff4 240px,#6fff90 244px,#c3ff3c 245.5px,#ffe500 246.5px,#ffe500 428px,#b7ff48 429px,#35ffca 432px,#06fff9 436px,#00e3ff 440px,#00c6ff 444px,#00a1ff 448px,#007aff 452px,#0054ff 456px,#002eff 460px,#0008ff 464px,#0000ec 468px,#0000d7 472px,#0000c5 476px,#0000c0 480px,#0000bb 484px,#0000b5 488px,#0000b4 492px,#0000b8 496px,#0000bb 500px,#0000bf 504px,#0000c2 508px,#0000d7 512px,#0000ff 516px,#0027ff 520px,#005aff 524px,#008bff 528px,#00b7ff 532px,#00e0ff 536px,#00feff 540px,#25ffda 544px,#6fff90 548px,#a6ff59 550px,#ffe500 551.3px,#ffe500 609px,#c2ff3d 610px,#6eff91 612px,#12ffed 616px,#00faff 620px,#00e1ff 624px,#00c4ff 628px,#0097ff 632px,#0062ff 636px,#002dff 640px,#0000f9 644px,#0000c8 648px,#000097 652px,#000080 656px,#000080 732px)"></div><div style="top:31px;height:1px;background:linear-gradient(90deg,#000080 0px,#000080 48px,#000087 52px,#000098 56px,#0000ad 60px,#0000c2 64px,#0000d7 68px,#0000ef 72px,#0012ff 76px,#0036ff 80px,#0065ff 84px,#0097ff 88px,#00c1ff 92px,#00d7ff 96px,#00e7ff 100px,#00f3ff 104px,#00f8ff 108px,#18ffe7 112px,#46ffb9 116px,#7eff81 120px,#f5ff0a 124px,#ffe500 125px,#ffe500 183px,#ddff22 184px,#4dffb2 188px,#21ffde 192px,#12ffed 196px,#00ffff 200px,#00daff 204px,#00b4ff 208px,#0089ff 212px,#0087ff 216px,#00a6ff 220px,#00baff 224px,#00ccff 228px,#00d5ff 232px,#00dfff 236px,#00ffff 240px,#63ff9c 244px,#bbff44 245.5px,#ffe500 246.5px,#ffe500 428px,#a9ff56 429px,#14ffeb 432px,#00edff 436px,#00d7ff 440px,#00c5ff 444px,#00acff 448px,#008bff 452px,#005eff 456px,#0030ff 460px,#0003ff 464px,#0000e1 468px,#0000ce 472px,#0000c3 476px,#0000c5 480px,#0000c8 484px,#0000c3 488px,#0000b1 492px,#0000a3 496px,#000095 500px,#000087 504px,#000088 508px,#00009e 512px,#0000c7 516px,#0000f0 520px,#0026ff 524px,#0057ff 528px,#0084ff 532px,#00adff 536px,#00caff 540px,#00f6ff 544px,#4fffb0 548px,#92ff6d 550px,#ffe500 551.3px,#ffe500 609px,#cbff34 610px,#7bff84 612px,#13ffec 616px,#00e7ff 620px,#00baff 624px,#008dff 628px,#005eff 632px,#0023ff 636px,#0000e6 640px,#0000ab 644px,#000080 648px,#000080 732px)"></div><div style="top:32px;height:2px;background:linear-gradient(90deg,#000080 0px,#000080 56px,#000090 60px,#0000a6 64px,#0000bc 68px,#0000cf 72px,#0000e0 76px,#0000f1 80px,#000eff 84px,#002dff 88px,#004fff 92px,#0072ff 96px,#0091ff 100px,#00abff 104px,#00beff 108px,#00daff 112px,#0afff5 116px,#57ffa8 120px,#efff10 124px,#ffe500 125px,#ffe500 183px,#dcff23 184px,#3fffc0 188px,#08fff7 192px,#00ecff 196px,#00d2ff 200px,#00abff 204px,#0083ff 208px,#0056ff 212px,#005bff 216px,#0090ff 220px,#00bdff 224px,#00e8ff 228px,#0bfff4 232px,#29ffd6 236px,#51ffae 240px,#9fff60 244px,#dbff24 245.5px,#ffe500 246.5px,#ffe500 428px,#b4ff4b 429px,#27ffd8 432px,#00efff 436px,#00c6ff 440px,#00a0ff 444px,#0073ff 448px,#0043ff 452px,#001bff 456px,#0000f8 460px,#0000d5 464px,#0000bf 468px,#0000ac 472px,#00009f 476px,#00009b 480px,#000093 484px,#00008b 488px,#000087 492px,#000089 496px,#00008a 500px,#000095 504px,#0000a6 508px,#0000ca 512px,#0001ff 516px,#0038ff 520px,#0079ff 524px,#00afff 528px,#00d7ff 532px,#00fcff 536px,#16ffe9 540px,#37ffc8 544px,#79ff86 548px,#abff54 550px,#ffe500 551.3px,#ffe500 609px,#d1ff2e 610px,#8bff74 612px,#3affc5 616px,#20ffdf 620px,#00fcff 624px,#00d2ff 628px,#00a8ff 632px,#0075ff 636px,#0043ff 640px,#0012ff 644px,#0000e6 648px,#0000be 652px,#00009a 656px,#000080 660px,#000080 732px)"></div><div style="top:34px;height:1px;background:linear-gradient(90deg,#000080 0px,#000080 44px,#000085 48px,#00008a 52px,#00008f 56px,#000095 60px,#0000a5 64px,#0000bd 68px,#0000d8 72px,#0000f5 76px,#0014ff 80px,#003dff 84px,#0069ff 88px,#0096ff 92px,#00bfff 96px,#00e2ff 100px,#03fffc 104px,#1bffe4 108px,#3dffc2 112px,#65ff9a 116px,#95ff6a 120px,#faff05 124px,#ffe500 125px,#ffe500 183px,#dfff20 184px,#45ffba 188px,#09fff6 192px,#00eaff 196px,#00ccff 200px,#00a2ff 204px,#0076ff 208px,#0048ff 212px,#0058ff 216px,#0090ff 220px,#00c1ff 224px,#00f0ff 228px,#16ffe9 232px,#38ffc7 236px,#66ff99 240px,#abff54 244px,#e0ff1f 245.5px,#ffe500 246.5px,#ffe500 428px,#c0ff3f 429px,#4dffb2 432px,#22ffdd 436px,#04fffb 440px,#00eaff 444px,#00c8ff 448px,#00a3ff 452px,#0071ff 456px,#003fff 460px,#000dff 464px,#0000e6 468px,#0000c4 472px,#0000a7 476px,#000098 480px,#000093 484px,#000096 488px,#00009d 492px,#0000a9 496px,#0000b5 500px,#0000c1 504px,#0000cd 508px,#0000eb 512px,#0013ff 516px,#0039ff 520px,#006cff 524px,#009dff 528px,#00c9ff 532px,#00f1ff 536px,#0efff1 540px,#31ffce 544px,#74ff8b 548px,#a8ff57 550px,#ffe500 551.3px,#ffe500 609px,#e8ff17 610px,#b8ff47 612px,#74ff8b 616px,#55ffaa 620px,#35ffca 624px,#14ffeb 628px,#00f1ff 632px,#00c5ff 636px,#0098ff 640px,#006dff 644px,#0044ff 648px,#001cff 652px,#0000f6 656px,#0000d3 660px,#0000bc 664px,#0000b0 668px,#0000a4 672px,#000099 676px,#00008d 680px,#000089 684px,#000085 688px,#000081 692px,#000080 696px,#000080 700px,#000081 704px,#000083 708px,#000085 712px,#000088 716px,#00008a 720px,#000084 724px,#000080 728px,#000080 732px)"></div><div style="top:35px;height:2px;background:linear-gradient(90deg,#000080 0px,#000080 12px,#000082 16px,#00008a 20px,#000093 24px,#0000a3 28px,#0000ae 32px,#0000b8 36px,#0000c1 40px,#0000cd 44px,#0000dc 48px,#0000f0 52px,#0005ff 56px,#0019ff 60px,#002eff 64px,#0035ff 68px,#003cff 72px,#0046ff 76px,#0051ff 80px,#0069ff 84px,#008bff 88px,#00b0ff 92px,#00d7ff 96px,#00f9ff 100px,#20ffdf 104px,#41ffbe 108px,#6bff94 112px,#96ff69 116px,#bcff43 120px,#fffb00 124px,#ffe500 125px,#ffe500 183px,#e8ff17 184px,#50ffaf 188px,#0efff1 192px,#10ffef 196px,#12ffed 200px,#08fff7 204px,#00fbff 208px,#00ccff 212px,#00beff 216px,#00d9ff 220px,#00edff 224px,#00feff 228px,#06fff9 232px,#0bfff4 236px,#1bffe4 240px,#6aff95 244px,#bfff40 245.5px,#ffe500 246.5px,#ffe500 428px,#cbff34 429px,#64ff9b 432px,#38ffc7 436px,#1affe5 440px,#00fcff 444px,#00d2ff 448px,#00a6ff 452px,#007aff 456px,#004dff 460px,#001bff 464px,#0000f4 468px,#0000d1 472px,#0000b3 476px,#0000a6 480px,#0000a2 484px,#00009e 488px,#00009e 492px,#0000a4 496px,#0000b1 500px,#0000c0 504px,#0000cf 508px,#0000f1 512px,#0025ff 516px,#0055ff 520px,#0092ff 524px,#00ccff 528px,#03fffc 532px,#28ffd7 536px,#3fffc0 540px,#5effa1 544px,#97ff68 548px,#bfff40 550px,#ffe500 551.3px,#ffe500 609px,#c5ff3a 610px,#75ff8a 612px,#1dffe2 616px,#06fff9 620px,#00edff 624px,#00d2ff 628px,#00b7ff 632px,#0094ff 636px,#0071ff 640px,#004dff 644px,#002bff 648px,#0009ff 652px,#0000ea 656px,#0000cc 660px,#0000b3 664px,#0000a3 668px,#000093 672px,#000082 676px,#000080 680px,#000080 732px)"></div><div style="top:37px;height:1px;background:linear-gradient(90deg,#000080 0px,#000080 44px,#00008a 48px,#0000a0 52px,#0000b6 56px,#0000cc 60px,#0000df 64px,#0000ed 68px,#0000fe 72px,#0012ff 76px,#0026ff 80px,#0043ff 84px,#0063ff 88px,#0086ff 92px,#00abff 96px,#00cbff 100px,#00e8ff 104px,#00feff 108px,#1effe1 112px,#48ffb7 116px,#86ff79 120px,#f9ff06 124px,#ffe500 125px,#ffe500 183px,#f0ff0f 184px,#a0ff5f 188px,#78ff87 192px,#5cffa3 196px,#40ffbf 200px,#18ffe7 204px,#00edff 208px,#00bdff 212px,#00b6ff 216px,#00d8ff 220px,#00f3ff 224px,#0cfff3 228px,#1cffe3 232px,#29ffd6 236px,#41ffbe 240px,#8bff74 244px,#d0ff2f 245.5px,#ffe500 246.5px,#ffe500 428px,#b7ff48 429px,#30ffcf 432px,#00faff 436px,#00d1ff 440px,#00acff 444px,#007fff 448px,#0050ff 452px,#0020ff 456px,#0000f4 460px,#0000d4 464px,#0000c0 468px,#0000b1 472px,#0000a6 476px,#0000a5 480px,#0000a3 484px,#0000a2 488px,#0000a5 492px,#0000aa 496px,#0000a9 500px,#0000a7 504px,#0000a5 508px,#0000b6 512px,#0000e9 516px,#0021ff 520px,#0064ff 524px,#00a5ff 528px,#00d8ff 532px,#00f3ff 536px,#03fffc 540px,#1affe5 544px,#5affa5 548px,#99ff66 550px,#ffe500 551.3px,#ffe500 609px,#d3ff2c 610px,#94ff6b 612px,#55ffaa 616px,#49ffb6 620px,#18ffe7 624px,#00ddff 628px,#00a2ff 632px,#005fff 636px,#0029ff 640px,#0013ff 644px,#0000ff 648px,#0000ec 652px,#0000dd 656px,#0000bd 660px,#0000a2 664px,#000090 668px,#000080 672px,#000080 732px)"></div><div style="top:38px;height:2px;background:linear-gradient(90deg,#000080 0px,#000080 52px,#00008f 56px,#0000ab 60px,#0000c7 64px,#0000d1 68px,#0000de 72px,#0000ee 76px,#0000fe 80px,#0026ff 84px,#0060ff 88px,#009cff 92px,#00daff 96px,#14ffeb 100px,#20ffdf 104px,#23ffdc 108px,#30ffcf 112px,#48ffb7 116px,#79ff86 120px,#f4ff0b 124px,#ffe500 125px,#ffe500 183px,#ebff14 184px,#73ff8c 188px,#41ffbe 192px,#26ffd9 196px,#0bfff4 200px,#00e3ff 204px,#00baff 208px,#00a5ff 212px,#00b9ff 216px,#00f6ff 220px,#2dffd2 224px,#4dffb2 228px,#4dffb2 232px,#4bffb4 236px,#54ffab 240px,#8cff73 244px,#d0ff2f 245.5px,#ffe500 246.5px,#ffe500 428px,#beff41 429px,#4affb5 432px,#25ffda 436px,#0dfff2 440px,#00eeff 444px,#00bdff 448px,#0089ff 452px,#0055ff 456px,#0021ff 460px,#0000fb 464px,#0000e4 468px,#0000d0 472px,#0000c1 476px,#0000ba 480px,#0000ac 484px,#00009d 488px,#000094 492px,#00008f 496px,#000093 500px,#000098 504px,#00009c 508px,#0000b3 512px,#0000dc 516px,#0006ff 520px,#003bff 524px,#006eff 528px,#009cff 532px,#00c8ff 536px,#00e9ff 540px,#13ffec 544px,#62ff9d 548px,#9eff61 550px,#ffe500 551.3px,#ffe500 609px,#e6ff19 610px,#b0ff4f 612px,#5cffa3 616px,#30ffcf 620px,#08fff7 624px,#00e4ff 628px,#00c0ff 632px,#0095ff 636px,#006aff 640px,#0054ff 644px,#0042ff 648px,#002fff 652px,#0021ff 656px,#0001ff 660px,#0000d3 664px,#0000af 668px,#00008b 672px,#000080 676px,#000080 732px)"></div><div style="top:40px;height:1px;background:linear-gradient(90deg,#000080 0px,#000080 36px,#000098 40px,#0000ad 44px,#0000c2 48px,#0000d7 52px,#0000f3 56px,#0010ff 60px,#002dff 64px,#0041ff 68px,#004aff 72px,#0055ff 76px,#0060ff 80px,#0078ff 84px,#0093ff 88px,#00b1ff 92px,#00d4ff 96px,#00f5ff 100px,#13ffec 104px,#29ffd6 108px,#51ffae 112px,#7fff80 116px,#aeff51 120px,#fffe00 124px,#ffe500 125px,#ffe500 183px,#eeff11 184px,#6eff91 188px,#2affd5 192px,#14ffeb 196px,#03fffc 200px,#00e5ff 204px,#00c8ff 208px,#00acff 212px,#00b9ff 216px,#00efff 220px,#0bfff4 224px,#1fffe0 228px,#2affd5 232px,#3affc5 236px,#66ff99 240px,#b0ff4f 244px,#e4ff1b 245.5px,#ffe500 246.5px,#ffe500 428px,#beff41 429px,#42ffbd 432px,#1dffe2 436px,#04fffb 440px,#00efff 444px,#00cdff 448px,#00a7ff 452px,#0081ff 456px,#0058ff 460px,#0026ff 464px,#0001ff 468px,#0000df 472px,#0000d5 476px,#0000de 480px,#0000e6 484px,#0000e3 488px,#0000cf 492px,#0000bf 496px,#0000af 500px,#0000ab 504px,#0000a9 508px,#0000ba 512px,#0000e4 516px,#001eff 520px,#0061ff 524px,#00a4ff 528px,#00c8ff 532px,#00e4ff 536px,#00f4ff 540px,#18ffe7 544px,#71ff8e 548px,#acff53 550px,#ffe500 551.3px,#ffe500 609px,#e0ff1f 610px,#a7ff58 612px,#39ffc6 616px,#00eeff 620px,#00a4ff 624px,#0072ff 628px,#0072ff 632px,#0069ff 636px,#0061ff 640px,#0043ff 644px,#0024ff 648px,#0004ff 652px,#0000e8 656px,#0000cc 660px,#0000ba 664px,#0000b0 668px,#000099 672px,#000080 676px,#000080 732px)"></div><div style="top:41px;height:2px;background:linear-gradient(90deg,#000080 0px,#000080 32px,#000095 36px,#0000ac 40px,#0000b8 44px,#0000bb 48px,#0000be 52px,#0000c1 56px,#0000c4 60px,#0000c7 64px,#0000ca 68px,#0000d3 72px,#0000f7 76px,#001cff 80px,#004bff 84px,#007cff 88px,#00b1ff 92px,#00e7ff 96px,#19ffe6 100px,#36ffc9 104px,#42ffbd 108px,#57ffa8 112px,#72ff8d 116px,#96ff69 120px,#f8ff07 124px,#ffe500 125px,#ffe500 183px,#d2ff2d 184px,#19ffe6 188px,#00d9ff 192px,#00c7ff 196px,#00b5ff 200px,#0097ff 204px,#0078ff 208px,#0054ff 212px,#0058ff 216px,#0086ff 220px,#00a6ff 224px,#00bfff 228px,#00cfff 232px,#00dcff 236px,#00f5ff 240px,#56ffa9 244px,#b4ff4b 245.5px,#ffe500 246.5px,#ffe500 428px,#a7ff58 429px,#12ffed 432px,#00ddff 436px,#00b6ff 440px,#0093ff 444px,#0068ff 448px,#003bff 452px,#000eff 456px,#0000e0 460px,#0000b6 464px,#00009a 468px,#000083 472px,#000080 476px,#000080 496px,#000093 500px,#0000a9 504px,#0000c0 508px,#0000e8 512px,#0025ff 516px,#0060ff 520px,#0095ff 524px,#00beff 528px,#00e2ff 532px,#03fffc 536px,#18ffe7 540px,#35ffca 544px,#74ff8b 548px,#a7ff58 550px,#ffe500 551.3px,#ffe500 609px,#d4ff2b 610px,#93ff6c 612px,#44ffbb 616px,#2bffd4 620px,#10ffef 624px,#00f3ff 628px,#00d7ff 632px,#00b3ff 636px,#008fff 640px,#0061ff 644px,#0030ff 648px,#0000fe 652px,#0000d1 656px,#0000a5 660px,#000082 664px,#000080 668px,#000080 732px)"></div><div style="top:43px;height:1px;background:linear-gradient(90deg,#000080 0px,#000080 52px,#000086 56px,#0000a0 60px,#0000bf 64px,#0000df 68px,#0002ff 72px,#0026ff 76px,#002cff 80px,#003dff 84px,#0052ff 88px,#0069ff 92px,#0092ff 96px,#00c2ff 100px,#00eeff 104px,#14ffeb 108px,#41ffbe 112px,#67ff98 116px,#95ff6a 120px,#faff05 124px,#ffe500 125px,#ffe500 183px,#d4ff2b 184px,#2fffd0 188px,#02fffd 192px,#00f4ff 196px,#00e7ff 200px,#00ceff 204px,#00b2ff 208px,#0091ff 212px,#009aff 216px,#00caff 220px,#00e2ff 224px,#00f7ff 228px,#04fffb 232px,#0dfff2 236px,#23ffdc 240px,#74ff8b 244px,#c3ff3c 245.5px,#ffe500 246.5px,#ffe500 428px,#b4ff4b 429px,#2affd5 432px,#00f6ff 436px,#00d1ff 440px,#00afff 444px,#0086ff 448px,#005bff 452px,#0034ff 456px,#0010ff 460px,#0000ec 464px,#0000d5 468px,#0000c1 472px,#0000b3 476px,#0000b3 480px,#0000b2 484px,#0000b2 492px,#0000b3 496px,#0000b4 500px,#0000b5 504px,#0000b6 508px,#0000c9 512px,#0000ef 516px,#0016ff 520px,#0047ff 524px,#0073ff 528px,#0097ff 532px,#00b7ff 536px,#00ccff 540px,#00eaff 544px,#49ffb6 548px,#90ff6f 550px,#ffe500 551.3px,#ffe500 609px,#c9ff36 610px,#7cff83 612px,#26ffd9 616px,#07fff8 620px,#00e6ff 624px,#00c5ff 628px,#00a5ff 632px,#0081ff 636px,#0061ff 640px,#0043ff 644px,#0027ff 648px,#000bff 652px,#0000e7 656px,#0000c5 660px,#0000ac 664px,#00009d 668px,#00008c 672px,#000080 676px,#000080 732px)"></div><div style="top:44px;height:1px;background:linear-gradient(90deg,#000080 0px,#000080 32px,#00008a 36px,#0000a4 40px,#0000b8 44px,#0000c4 48px,#0000cf 52px,#0000da 56px,#0000e6 60px,#0000f1 64px,#0000fc 68px,#000cff 72px,#002aff 76px,#0048ff 80px,#0071ff 84px,#009dff 88px,#00cbff 92px,#00fcff 96px,#29ffd6 100px,#47ffb8 104px,#54ffab 108px,#6bff94 112px,#85ff7a 116px,#a5ff5a 120px,#fcff03 124px,#ffe500 125px,#ffe500 183px,#e5ff1a 184px,#64ff9b 188px,#37ffc8 192px,#1dffe2 196px,#03fffc 200px,#00dbff 204px,#00b4ff 208px,#0087ff 212px,#0084ff 216px,#00a9ff 220px,#00c7ff 224px,#00e2ff 228px,#00f4ff 232px,#04fffb 236px,#1effe1 240px,#73ff8c 244px,#c3ff3c 245.5px,#ffe500 246.5px,#ffe500 428px,#bdff42 429px,#46ffb9 432px,#0dfff2 436px,#00e1ff 440px,#00baff 444px,#008bff 448px,#005aff 452px,#0029ff 456px,#0000f6 460px,#0000d2 464px,#0000c7 468px,#0000c0 472px,#0000be 476px,#0000ca 480px,#0000d5 484px,#0000e1 488px,#0000f2 492px,#0000ec 496px,#0000e7 500px,#0000e1 504px,#0000dc 508px,#0000e9 512px,#0009ff 516px,#0028ff 520px,#005bff 524px,#0093ff 528px,#00c6ff 532px,#00f5ff 536px,#1affe5 540px,#46ffb9 544px,#8eff71 548px,#bcff43 550px,#ffe500 551.3px,#ffe500 609px,#d4ff2b 610px,#93ff6c 612px,#3effc1 616px,#1cffe3 620px,#00f9ff 624px,#00d6ff 628px,#00b2ff 632px,#0087ff 636px,#005bff 640px,#0035ff 644px,#0017ff 648px,#0000f8 652px,#0000dd 656px,#0000c4 660px,#0000b4 664px,#0000ac 668px,#0000a5 672px,#000097 676px,#000089 680px,#000082 684px,#000080 688px,#000080 732px)"></div><div style="top:45px;height:2px;background:linear-gradient(90deg,#000080 0px,#000080 36px,#000089 40px,#000096 44px,#0000a3 48px,#0000ae 52px,#0000b7 56px,#0000c1 60px,#0000cb 64px,#0000d4 68px,#0000e1 72px,#0000f8 76px,#0017ff 80px,#0040ff 84px,#006cff 88px,#009bff 92px,#00ccff 96px,#00f5ff 100px,#18ffe7 104px,#34ffcb 108px,#59ffa6 112px,#81ff7e 116px,#abff54 120px,#fffe00 124px,#ffe500 125px,#ffe500 183px,#f2ff0d 184px,#8dff72 188px,#5effa1 192px,#44ffbb 196px,#28ffd7 200px,#01fffe 204px,#00d7ff 208px,#00a9ff 212px,#00a4ff 216px,#00c6ff 220px,#00deff 224px,#00f3ff 228px,#00ffff 232px,#09fff6 236px,#1dffe2 240px,#74ff8b 244px,#c5ff3a 245.5px,#ffe500 246.5px,#ffe500 428px,#d4ff2b 429px,#79ff86 432px,#48ffb7 436px,#1cffe3 440px,#00f3ff 444px,#00c4ff 448px,#0092ff 452px,#0060ff 456px,#002cff 460px,#0000f6 464px,#0000ce 468px,#0000a9 472px,#000089 476px,#000080 480px,#000080 488px,#00008c 492px,#0000a0 496px,#0000b3 500px,#0000c6 504px,#0000d1 508px,#0000e7 512px,#0010ff 516px,#0038ff 520px,#006cff 524px,#009eff 528px,#00c4ff 532px,#00e2ff 536px,#00f3ff 540px,#0efff1 544px,#51ffae 548px,#8fff70 550px,#ffe500 551.3px,#ffe500 609px,#bcff43 610px,#64ff9b 612px,#0cfff3 616px,#00fbff 620px,#00e9ff 624px,#00d6ff 628px,#00c1ff 632px,#00a5ff 636px,#0088ff 640px,#006cff 644px,#0054ff 648px,#002eff 652px,#0000fe 656px,#0000d1 660px,#0000ad 664px,#000092 668px,#000080 672px,#000080 688px,#000083 692px,#00008b 696px,#000088 700px,#000080 704px,#000080 732px)"></div><div style="top:47px;height:1px;background:linear-gradient(90deg,#000080 0px,#000080 44px,#000082 48px,#000093 52px,#0000a5 56px,#0000b7 60px,#0000c9 64px,#0000da 68px,#0000ef 72px,#0006ff 76px,#001cff 80px,#003cff 84px,#005fff 88px,#0085ff 92px,#00aeff 96px,#00daff 100px,#03fffc 104px,#24ffdb 108px,#4fffb0 112px,#7eff81 116px,#acff53 120px,#ffff00 124px,#ffe500 125px,#ffe500 183px,#e0ff1f 184px,#4dffb2 188px,#16ffe9 192px,#1affe5 196px,#1fffe0 200px,#19ffe6 204px,#11ffee 208px,#04fffb 212px,#21ffde 216px,#35ffca 220px,#3effc1 224px,#44ffbb 228px,#41ffbe 232px,#3bffc4 236px,#40ffbf 240px,#92ff6d 244px,#d5ff2a 245.5px,#ffe500 246.5px,#ffe500 428px,#b2ff4d 429px,#26ffd9 432px,#00f7ff 436px,#00d8ff 440px,#00bcff 444px,#0099ff 448px,#0073ff 452px,#004eff 456px,#0028ff 460px,#0003ff 464px,#0000e8 468px,#0000d3 472px,#0000c2 476px,#0000c0 480px,#0000c0 484px,#0000bf 488px,#0000c4 492px,#0000cd 496px,#0000d6 500px,#0000e0 504px,#0000e0 508px,#0000f1 512px,#0016ff 516px,#003aff 520px,#0069ff 524px,#0097ff 528px,#00c5ff 532px,#00f0ff 536px,#11ffee 540px,#38ffc7 544px,#7fff80 548px,#b1ff4e 550px,#ffe500 551.3px,#ffe500 609px,#ddff22 610px,#9dff62 612px,#42ffbd 616px,#17ffe8 620px,#00eaff 624px,#00beff 628px,#0093ff 632px,#005fff 636px,#002cff 640px,#0000f8 644px,#0000c8 648px,#0000a9 652px,#00008e 656px,#000080 660px,#000080 732px)"></div><div style="top:48px;height:2px;background:linear-gradient(90deg,#000080 0px,#000080 40px,#000094 44px,#0000a8 48px,#0000bd 52px,#0000d1 56px,#0000e6 60px,#0000fa 64px,#000dff 68px,#001dff 72px,#002fff 76px,#0042ff 80px,#005fff 84px,#007fff 88px,#00a2ff 92px,#00c7ff 96px,#00f1ff 100px,#1affe5 104px,#3affc5 108px,#64ff9b 112px,#8fff70 116px,#b8ff47 120px,#fffa00 124px,#ffe500 125px,#ffe500 183px,#faff05 184px,#adff52 188px,#7dff82 192px,#5effa1 196px,#3effc1 200px,#13ffec 204px,#00e5ff 208px,#00b3ff 212px,#00aaff 216px,#00d8ff 220px,#01fffe 224px,#27ffd8 228px,#43ffbc 232px,#5cffa3 236px,#81ff7e 240px,#bdff42 244px,#eaff15 245.5px,#ffe500 246.5px,#ffe500 428px,#c1ff3e 429px,#4bffb4 432px,#1dffe2 436px,#00f9ff 440px,#00dbff 444px,#00b6ff 448px,#008eff 452px,#0066ff 456px,#003cff 460px,#0013ff 464px,#0000f5 468px,#0000dc 472px,#0000c8 476px,#0000c2 480px,#0000bc 484px,#0000b7 488px,#0000b9 492px,#0000c0 496px,#0000c7 500px,#0000cd 504px,#0000d4 508px,#0000ed 512px,#0019ff 516px,#003cff 520px,#0068ff 524px,#0093ff 528px,#00b8ff 532px,#00daff 536px,#00f1ff 540px,#10ffef 544px,#5bffa4 548px,#9bff64 550px,#ffe500 551.3px,#ffe500 609px,#d2ff2d 610px,#91ff6e 612px,#4affb5 616px,#39ffc6 620px,#26ffd9 624px,#13ffec 628px,#00feff 632px,#00e2ff 636px,#00b7ff 640px,#008aff 644px,#0060ff 648px,#0036ff 652px,#0010ff 656px,#0000ea 660px,#0000cf 664px,#0000bf 668px,#0000b7 672px,#0000af 676px,#0000a6 680px,#0000a5 684px,#0000a4 688px,#0000a3 692px,#0000a3 696px,#0000a1 700px,#0000a3 704px,#0000a4 708px,#0000a6 712px,#0000a8 716px,#0000aa 720px,#0000ab 724px,#0000a8 728px,#00009b 732px)"></div><div style="top:50px;height:1px;background:linear-gradient(90deg,#000080 0px,#000080 24px,#000089 28px,#000099 32px,#0000a9 36px,#0000b9 40px,#0000cb 44px,#0000dc 48px,#0000e9 52px,#0000f7 56px,#0005ff 60px,#0013ff 64px,#0020ff 68px,#002bff 72px,#0033ff 76px,#003aff 80px,#004cff 84px,#0061ff 88px,#0078ff 92px,#009eff 96px,#00cdff 100px,#00f8ff 104px,#1dffe2 108px,#4bffb4 112px,#7cff83 116px,#abff54 120px,#fffe00 124px,#ffe500 125px,#ffe500 183px,#f2ff0d 184px,#92ff6d 188px,#6aff95 192px,#55ffaa 196px,#40ffbf 200px,#1fffe0 204px,#00fbff 208px,#00d4ff 212px,#00d8ff 216px,#08fff7 220px,#30ffcf 224px,#55ffaa 228px,#71ff8e 232px,#8aff75 236px,#a8ff57 240px,#cdff32 244px,#f0ff0f 245.5px,#ffe500 246.5px,#ffe500 428px,#e7ff18 429px,#97ff68 432px,#4fffb0 436px,#14ffeb 440px,#00dcff 444px,#009dff 448px,#005bff 452px,#0026ff 456px,#0000ff 460px,#0000d9 464px,#0000bf 468px,#0000a9 472px,#000098 476px,#0000a0 480px,#0000b7 484px,#0000ce 488px,#0000e9 492px,#000aff 496px,#002aff 500px,#003aff 504px,#0034ff 508px,#0041ff 512px,#0060ff 516px,#007fff 520px,#00a9ff 524px,#00d6ff 528px,#04fffb 532px,#2cffd3 536px,#49ffb6 540px,#6eff91 544px,#aaff55 548px,#cdff32 550px,#ffe500 551.3px,#ffe500 609px,#dcff23 610px,#9bff64 612px,#43ffbc 616px,#1cffe3 620px,#00f8ff 624px,#00dcff 628px,#00c1ff 632px,#009dff 636px,#0079ff 640px,#0056ff 644px,#0031ff 648px,#0007ff 652px,#0000e0 656px,#0000bb 660px,#00009f 664px,#00008c 668px,#000082 672px,#000084 676px,#000087 680px,#000090 684px,#00009a 688px,#0000a4 692px,#0000a5 696px,#00009b 700px,#000095 704px,#00008f 708px,#000089 712px,#000083 716px,#000080 720px,#000080 732px)"></div><div style="top:51px;height:2px;background:linear-gradient(90deg,#000080 0px,#000080 40px,#0000a1 44px,#0000c4 48px,#0000c4 64px,#0000d6 68px,#0000f7 72px,#001dff 76px,#0041ff 80px,#006fff 84px,#0085ff 88px,#009eff 92px,#00b8ff 96px,#00ceff 100px,#00e6ff 104px,#00fcff 108px,#1cffe3 112px,#46ffb9 116px,#7cff83 120px,#f3ff0c 124px,#ffe500 125px,#ffe500 183px,#e0ff1f 184px,#40ffbf 188px,#00faff 192px,#04fffb 196px,#0dfff2 200px,#09fff6 204px,#04fffb 208px,#00deff 212px,#00cdff 216px,#00e4ff 220px,#00f3ff 224px,#01fffe 228px,#0cfff3 232px,#13ffec 236px,#25ffda 240px,#72ff8d 244px,#c2ff3d 245.5px,#ffe500 246.5px,#ffe500 428px,#d0ff2f 429px,#67ff98 432px,#33ffcc 436px,#0bfff4 440px,#00e7ff 444px,#00bfff 448px,#0095ff 452px,#006bff 456px,#0041ff 460px,#0013ff 464px,#0000ed 468px,#0000cc 472px,#0000af 476px,#0000a1 480px,#000096 484px,#00008a 488px,#000084 492px,#000082 496px,#00008c 500px,#00009f 504px,#0000b2 508px,#0000d7 512px,#0010ff 516px,#003dff 520px,#0076ff 524px,#00adff 528px,#00e0ff 532px,#09fff6 536px,#21ffde 540px,#41ffbe 544px,#80ff7f 548px,#b0ff4f 550px,#ffe500 551.3px,#ffe500 609px,#e0ff1f 610px,#abff54 612px,#6aff95 616px,#52ffad 620px,#39ffc6 624px,#08fff7 628px,#00d7ff 632px,#009eff 636px,#0066ff 640px,#0033ff 644px,#0007ff 648px,#0000db 652px,#0000b3 656px,#00008e 660px,#000098 664px,#0000ab 668px,#0000be 672px,#0000d2 676px,#0000bc 680px,#00008f 684px,#000080 688px,#000080 732px)"></div><div style="top:53px;height:1px;background:linear-gradient(90deg,#000080 0px,#000080 12px,#000083 16px,#000083 20px,#000081 24px,#000087 28px,#000090 32px,#000098 36px,#0000a0 40px,#0000ab 44px,#0000b7 48px,#0000c2 52px,#0000ce 56px,#0000d9 60px,#0000e5 64px,#0000f1 68px,#0000ff 72px,#0012ff 76px,#002eff 80px,#0058ff 84px,#0085ff 88px,#00b5ff 92px,#00e8ff 96px,#16ffe9 100px,#3fffc0 104px,#5effa1 108px,#80ff7f 112px,#a1ff5e 116px,#c1ff3e 120px,#fffa00 124px,#ffe500 125px,#ffe500 183px,#fffa00 184px,#d1ff2e 188px,#aeff51 192px,#96ff69 196px,#76ff89 200px,#45ffba 204px,#13ffec 208px,#00dbff 212px,#00cdff 216px,#00e8ff 220px,#00fbff 224px,#12ffed 228px,#31ffce 232px,#4cffb3 236px,#73ff8c 240px,#b5ff4a 244px,#e7ff18 245.5px,#ffe500 246.5px,#ffe500 428px,#d0ff2f 429px,#7cff83 432px,#62ff9d 436px,#3cffc3 440px,#10ffef 444px,#00dcff 448px,#00a7ff 452px,#0071ff 456px,#003cff 460px,#0006ff 464px,#0000e2 468px,#0000d8 472px,#0000d3 476px,#0000dc 480px,#0000e4 484px,#0000ed 488px,#0000fb 492px,#000eff 496px,#0010ff 500px,#000cff 504px,#0008ff 508px,#0017ff 512px,#0038ff 516px,#0058ff 520px,#0085ff 524px,#00b1ff 528px,#00dfff 532px,#09fff6 536px,#27ffd8 540px,#4dffb2 544px,#8fff70 548px,#bcff43 550px,#ffe500 551.3px,#ffe500 609px,#dcff23 610px,#9cff63 612px,#43ffbc 616px,#2cffd3 620px,#1bffe4 624px,#08fff7 628px,#00f5ff 632px,#00daff 636px,#00c0ff 640px,#00a6ff 644px,#0088ff 648px,#0052ff 652px,#001fff 656px,#0000ec 660px,#0000c4 664px,#0000a4 668px,#000085 672px,#000080 676px,#000080 732px)"></div><div style="top:54px;height:2px;background:linear-gradient(90deg,#000080 0px,#000080 44px,#00008a 48px,#000099 52px,#0000a8 56px,#0000b8 60px,#0000c7 64px,#0000d6 68px,#0000e8 72px,#000aff 76px,#002bff 80px,#0057ff 84px,#0087ff 88px,#00b9ff 92px,#00edff 96px,#1cffe3 100px,#3dffc2 104px,#49ffb6 108px,#5fffa0 112px,#78ff87 116px,#9bff64 120px,#faff05 124px,#ffe500 125px,#ffe500 183px,#e3ff1c 184px,#5affa5 188px,#27ffd8 192px,#0cfff3 196px,#00efff 200px,#00c8ff 204px,#009fff 208px,#0071ff 212px,#006dff 216px,#0091ff 220px,#00b3ff 224px,#00d9ff 228px,#00f6ff 232px,#11ffee 236px,#37ffc8 240px,#8bff74 244px,#d1ff2e 245.5px,#ffe500 246.5px,#ffe500 428px,#abff54 429px,#17ffe8 432px,#00e7ff 436px,#00c3ff 440px,#00a5ff 444px,#007eff 448px,#0055ff 452px,#002cff 456px,#0003ff 460px,#0000de 464px,#0000cb 468px,#0000bd 472px,#0000b3 476px,#0000b8 480px,#0000bc 484px,#0000c1 488px,#0000ca 492px,#0000d5 496px,#0000e0 500px,#0000eb 504px,#0000f6 508px,#0015ff 512px,#0044ff 516px,#0074ff 520px,#00a9ff 524px,#00d4ff 528px,#00faff 532px,#1dffe2 536px,#34ffcb 540px,#52ffad 544px,#8dff72 548px,#b9ff46 550px,#ffe500 551.3px,#ffe500 609px,#c1ff3e 610px,#69ff96 612px,#03fffc 616px,#00e3ff 620px,#00c2ff 624px,#00a1ff 628px,#007fff 632px,#0056ff 636px,#002cff 640px,#0009ff 644px,#0000ef 648px,#0000d6 652px,#0000c0 656px,#0000ac 660px,#0000a1 664px,#00009e 668px,#00009c 672px,#00008d 676px,#000080 680px,#000080 732px)"></div><div style="top:56px;height:1px;background:linear-gradient(90deg,#000080 0px,#000080 4px,#000084 8px,#000080 12px,#000080 40px,#0000a2 44px,#0000ac 48px,#0000ad 52px,#0000ad 56px,#0000ae 60px,#0000b4 64px,#0000c6 68px,#0000dc 72px,#0000f4 76px,#000dff 80px,#003bff 84px,#006fff 88px,#00a6ff 92px,#00deff 96px,#09fff6 100px,#19ffe6 104px,#22ffdd 108px,#35ffca 112px,#51ffae 116px,#89ff76 120px,#f9ff06 124px,#ffe500 125px,#ffe500 183px,#f0ff0f 184px,#9dff62 188px,#73ff8c 192px,#55ffaa 196px,#37ffc8 200px,#0dfff2 204px,#00deff 208px,#00a7ff 212px,#0099ff 216px,#00b4ff 220px,#00c7ff 224px,#00e6ff 228px,#01fffe 232px,#17ffe8 236px,#39ffc6 240px,#87ff78 244px,#cdff32 245.5px,#ffe500 246.5px,#ffe500 428px,#b9ff46 429px,#30ffcf 432px,#00f5ff 436px,#00c6ff 440px,#00a5ff 444px,#007eff 448px,#0054ff 452px,#002aff 456px,#0000fe 460px,#0000d2 464px,#0000b2 468px,#000096 472px,#000080 476px,#000085 480px,#00008f 484px,#000099 488px,#0000a8 492px,#0000b5 496px,#0000b1 500px,#0000ad 504px,#0000a9 508px,#0000b7 512px,#0000d4 516px,#0000f0 520px,#0019ff 524px,#003eff 528px,#006bff 532px,#00afff 536px,#00e8ff 540px,#29ffd6 544px,#87ff78 548px,#baff45 550px,#ffe500 551.3px,#ffe500 609px,#c8ff37 610px,#79ff86 612px,#1effe1 616px,#02fffd 620px,#00dbff 624px,#00b2ff 628px,#0089ff 632px,#0058ff 636px,#002fff 640px,#0019ff 644px,#0007ff 648px,#0000f4 652px,#0000e5 656px,#0000cc 660px,#0000b9 664px,#0000af 668px,#0000a5 672px,#000099 676px,#000088 680px,#000080 684px,#000080 732px)"></div><div style="top:57px;height:2px;background:linear-gradient(90deg,#000080 0px,#000080 32px,#000087 36px,#000091 40px,#00009e 44px,#0000aa 48px,#0000b7 52px,#0000c3 56px,#0000d0 60px,#0000e2 64px,#0000fa 68px,#0015ff 72px,#0032ff 76px,#004fff 80px,#0076ff 84px,#00a2ff 88px,#00ceff 92px,#00efff 96px,#0cfff3 100px,#24ffdb 104px,#35ffca 108px,#50ffaf 112px,#70ff8f 116px,#97ff68 120px,#fbff04 124px,#ffe500 125px,#ffe500 183px,#e1ff1e 184px,#5affa5 188px,#32ffcd 192px,#26ffd9 196px,#19ffe6 200px,#00ffff 204px,#00e4ff 208px,#00c4ff 212px,#00bdff 216px,#00e0ff 220px,#00faff 224px,#13ffec 228px,#21ffde 232px,#2dffd2 236px,#44ffbb 240px,#91ff6e 244px,#d4ff2b 245.5px,#ffe500 246.5px,#ffe500 428px,#deff21 429px,#85ff7a 432px,#4dffb2 436px,#22ffdd 440px,#00faff 444px,#00cbff 448px,#009aff 452px,#0071ff 456px,#0048ff 460px,#001eff 464px,#0001ff 468px,#0000e7 472px,#0000d3 476px,#0000cd 480px,#0000c9 484px,#0000c9 488px,#0000cd 492px,#0000d5 496px,#0000de 500px,#0000e7 504px,#0000ef 508px,#000cff 512px,#003dff 516px,#006fff 520px,#00acff 524px,#00e7ff 528px,#1fffe0 532px,#52ffad 536px,#79ff86 540px,#98ff67 544px,#bcff43 548px,#d5ff2a 550px,#ffe500 551.3px,#ffe500 609px,#d5ff2a 610px,#91ff6e 612px,#3bffc4 616px,#1affe5 620px,#00f7ff 624px,#00d4ff 628px,#00b2ff 632px,#0090ff 636px,#006eff 640px,#004dff 644px,#002fff 648px,#0011ff 652px,#0000f5 656px,#0000dc 660px,#0000c4 664px,#0000ae 668px,#000098 672px,#000083 676px,#000080 680px,#000080 732px)"></div><div style="top:59px;height:1px;background:linear-gradient(90deg,#000080 0px,#000080 60px,#000088 64px,#000092 68px,#0000a0 72px,#0000b4 76px,#0000c7 80px,#0000e5 84px,#0008ff 88px,#002cff 92px,#0054ff 96px,#008eff 100px,#00c5ff 104px,#00f5ff 108px,#2fffd0 112px,#6dff92 116px,#a8ff57 120px,#fcff03 124px,#ffe500 125px,#ffe500 183px,#cfff30 184px,#19ffe6 188px,#00e3ff 192px,#00d1ff 196px,#00beff 200px,#009fff 204px,#007fff 208px,#005aff 212px,#005eff 216px,#0090ff 220px,#00bbff 224px,#00e3ff 228px,#02fffd 232px,#1dffe2 236px,#43ffbc 240px,#88ff77 244px,#cdff32 245.5px,#ffe500 246.5px,#ffe500 428px,#a6ff59 429px,#0afff5 432px,#00d6ff 436px,#00afff 440px,#008dff 444px,#0064ff 448px,#0037ff 452px,#000bff 456px,#0000dc 460px,#0000af 464px,#00008e 468px,#000080 472px,#000080 504px,#000082 508px,#00009b 512px,#0000c7 516px,#0000f2 520px,#002aff 524px,#005fff 528px,#008bff 532px,#00b3ff 536px,#00cfff 540px,#00f3ff 544px,#45ffba 548px,#8aff75 550px,#ffe500 551.3px,#ffe500 609px,#c4ff3b 610px,#72ff8d 612px,#19ffe6 616px,#03fffc 620px,#00e9ff 624px,#00c0ff 628px,#0097ff 632px,#0066ff 636px,#0035ff 640px,#0005ff 644px,#0000d8 648px,#0000b9 652px,#00009d 656px,#000083 660px,#000080 664px,#000080 732px)"></div><div style="top:60px;height:2px;background:linear-gradient(90deg,#000080 0px,#000080 40px,#00008e 44px,#0000a5 48px,#0000bc 52px,#0000d2 56px,#0000e6 60px,#0000fa 64px,#000eff 68px,#0025ff 72px,#003fff 76px,#0057ff 80px,#0075ff 84px,#0097ff 88px,#00bbff 92px,#00e1ff 96px,#04fffb 100px,#23ffdc 104px,#43ffbc 108px,#6eff91 112px,#98ff67 116px,#bfff40 120px,#fff900 124px,#ffe500 125px,#ffe500 183px,#f2ff0d 184px,#9cff63 188px,#83ff7c 192px,#7bff84 196px,#70ff8f 200px,#46ffb9 204px,#1bffe4 208px,#00ebff 212px,#00e4ff 216px,#08fff7 220px,#22ffdd 224px,#3bffc4 228px,#4affb5 232px,#56ffa9 236px,#6dff92 240px,#a6ff59 244px,#ddff22 245.5px,#ffe500 246.5px,#ffe500 428px,#b0ff4f 429px,#2bffd4 432px,#05fffa 436px,#00eaff 440px,#00d2ff 444px,#00b2ff 448px,#0090ff 452px,#006eff 456px,#004cff 460px,#0027ff 464px,#0006ff 468px,#0000e8 472px,#0000d0 476px,#0000c7 480px,#0000bd 484px,#0000b2 488px,#0000a7 492px,#0000a0 496px,#000099 500px,#000093 504px,#00008c 508px,#00009e 512px,#0000db 516px,#0019ff 520px,#0062ff 524px,#00a9ff 528px,#00ebff 532px,#24ffdb 536px,#35ffca 540px,#4effb1 544px,#85ff7a 548px,#b1ff4e 550px,#ffe500 551.3px,#ffe500 609px,#e7ff18 610px,#b8ff47 612px,#7cff83 616px,#65ff9a 620px,#4dffb2 624px,#34ffcb 628px,#17ffe8 632px,#00dbff 636px,#00a1ff 640px,#0068ff 644px,#0032ff 648px,#0000fb 652px,#0000d0 656px,#0000c4 660px,#0000c1 664px,#0000c6 668px,#0000cc 672px,#0000d2 676px,#0000d0 680px,#0000b4 684px,#000098 688px,#000080 692px,#000080 720px,#00008a 724px,#000097 728px,#000091 732px)"></div><div style="top:62px;height:1px;background:linear-gradient(90deg,#000080 0px,#000080 44px,#000085 48px,#000093 52px,#00009f 56px,#0000a6 60px,#0000ad 64px,#0000b4 68px,#0000be 72px,#0000cb 76px,#0000e1 80px,#0015ff 84px,#004cff 88px,#0085ff 92px,#00c1ff 96px,#00f7ff 100px,#24ffdb 104px,#39ffc6 108px,#59ffa6 112px,#7cff83 116px,#a4ff5b 120px,#fdff02 124px,#ffe500 125px,#ffe500 183px,#dbff24 184px,#4fffb0 188px,#30ffcf 192px,#2cffd3 196px,#20ffdf 200px,#00f4ff 204px,#00c8ff 208px,#0097ff 212px,#0090ff 216px,#00b1ff 220px,#00cfff 224px,#00f7ff 228px,#16ffe9 232px,#31ffce 236px,#57ffa8 240px,#a2ff5d 244px,#ddff22 245.5px,#ffe500 246.5px,#ffe500 428px,#c6ff39 429px,#54ffab 432px,#23ffdc 436px,#00fbff 440px,#00d6ff 444px,#00a9ff 448px,#007aff 452px,#004bff 456px,#001bff 460px,#0000f0 464px,#0000db 468px,#0000cb 472px,#0000bf 476px,#0000c1 480px,#0000c4 484px,#0000c2 488px,#0000ba 492px,#0000b8 496px,#0000b5 500px,#0000b3 504px,#0000b0 508px,#0000c2 512px,#0000eb 516px,#0014ff 520px,#0048ff 524px,#007bff 528px,#00a9ff 532px,#00d5ff 536px,#00fdff 540px,#2dffd2 544px,#7cff83 548px,#b2ff4d 550px,#ffe500 551.3px,#ffe500 609px,#bcff43 610px,#63ff9c 612px,#06fff9 616px,#00f1ff 620px,#00dcff 624px,#00c6ff 628px,#00aaff 632px,#0079ff 636px,#0047ff 640px,#0017ff 644px,#0000e9 648px,#0000bc 652px,#00009a 656px,#00008a 660px,#000083 664px,#000085 668px,#000088 672px,#00008a 676px,#000083 680px,#000080 684px,#000080 732px)"></div><div style="top:63px;height:2px;background:linear-gradient(90deg,#000080 0px,#000080 44px,#00008c 48px,#0000ae 52px,#0000d1 56px,#0000f0 60px,#0000f2 64px,#0000f4 68px,#0000f8 72px,#0000fd 76px,#0001ff 80px,#000fff 84px,#0022ff 88px,#0052ff 92px,#0084ff 96px,#00b1ff 100px,#00e7ff 104px,#1fffe0 108px,#5fffa0 112px,#9cff63 116px,#b9ff46 120px,#fffd00 124px,#ffe500 125px,#ffe500 183px,#eeff11 184px,#7eff81 188px,#46ffb9 192px,#24ffdb 196px,#03fffc 200px,#00e7ff 204px,#00cbff 208px,#00aaff 212px,#00b0ff 216px,#00deff 220px,#05fffa 224px,#28ffd7 228px,#3cffc3 232px,#4dffb2 236px,#69ff96 240px,#a5ff5a 244px,#dcff23 245.5px,#ffe500 246.5px,#ffe500 428px,#a9ff56 429px,#15ffea 432px,#00e5ff 436px,#00c9ff 440px,#00b5ff 444px,#009aff 448px,#007bff 452px,#004bff 456px,#001bff 460px,#0000eb 464px,#0000d3 468px,#0000c7 472px,#0000c0 476px,#0000c3 480px,#0000a7 484px,#00008b 488px,#000080 492px,#000080 496px,#00009d 500px,#0000bc 504px,#0000d6 508px,#0000db 512px,#0000f2 516px,#000aff 520px,#003fff 524px,#007dff 528px,#00b7ff 532px,#00eaff 536px,#00f1ff 540px,#01fffe 544px,#3effc1 548px,#82ff7d 550px,#ffe500 551.3px,#ffe500 609px,#b5ff4a 610px,#51ffae 612px,#00dfff 616px,#00c2ff 620px,#00c1ff 624px,#00c0ff 628px,#00bfff 632px,#00a4ff 636px,#007dff 640px,#0058ff 644px,#0032ff 648px,#0000eb 652px,#0000a9 656px,#000080 660px,#000080 732px)"></div><div style="top:65px;height:1px;background:linear-gradient(90deg,#000080 0px,#000080 44px,#000097 48px,#0000b3 52px,#0000bf 56px,#0000cb 60px,#0000d6 64px,#0000dd 68px,#0000e2 72px,#0000e9 76px,#0000f1 80px,#0013ff 84px,#0038ff 88px,#0060ff 92px,#008fff 96px,#00bfff 100px,#00ecff 104px,#12ffed 108px,#26ffd9 112px,#43ffbc 116px,#71ff8e 120px,#f1ff0e 124px,#ffe500 125px,#ffe500 183px,#ceff31 184px,#1fffe0 188px,#00f8ff 192px,#00ecff 196px,#00e0ff 200px,#00c7ff 204px,#00a9ff 208px,#0080ff 212px,#0080ff 216px,#00a9ff 220px,#00d8ff 224px,#07fff8 228px,#2cffd3 232px,#41ffbe 236px,#4fffb0 240px,#8cff73 244px,#ceff31 245.5px,#ffe500 246.5px,#ffe500 428px,#aeff51 429px,#20ffdf 432px,#00fdff 436px,#00e7ff 440px,#00d6ff 444px,#00a3ff 448px,#0069ff 452px,#0030ff 456px,#0007ff 460px,#0000f6 464px,#0000f3 468px,#0000f4 472px,#0000c7 476px,#0000a3 480px,#000080 484px,#000080 492px,#000083 496px,#000091 500px,#000094 504px,#000096 508px,#0000ab 512px,#0000d0 516px,#0000f3 520px,#0022ff 524px,#004fff 528px,#0085ff 532px,#00baff 536px,#00e3ff 540px,#14ffeb 544px,#68ff97 548px,#a4ff5b 550px,#ffe500 551.3px,#ffe500 609px,#ceff31 610px,#85ff7a 612px,#20ffdf 616px,#00f3ff 620px,#00c5ff 624px,#00a0ff 628px,#0088ff 632px,#0068ff 636px,#0048ff 640px,#002bff 644px,#0012ff 648px,#0000f8 652px,#0000d5 656px,#00009e 660px,#000080 664px,#000080 732px)"></div><div style="top:66px;height:2px;background:linear-gradient(90deg,#000080 0px,#000080 52px,#000091 56px,#0000a9 60px,#0000c0 64px,#0000d5 68px,#0000ee 72px,#000aff 76px,#0025ff 80px,#004bff 84px,#0073ff 88px,#008bff 92px,#00a5ff 96px,#00bbff 100px,#00ccff 104px,#00d6ff 108px,#00ebff 112px,#2bffd4 116px,#74ff8b 120px,#f5ff0a 124px,#ffe500 125px,#ffe500 183px,#ebff14 184px,#75ff8a 188px,#44ffbb 192px,#2affd5 196px,#10ffef 200px,#00e9ff 204px,#00c1ff 208px,#0091ff 212px,#008aff 216px,#00abff 220px,#00c5ff 224px,#00ddff 228px,#00ebff 232px,#00f8ff 236px,#12ffed 240px,#6aff95 244px,#beff41 245.5px,#ffe500 246.5px,#ffe500 428px,#a7ff58 429px,#1effe1 432px,#00ffff 436px,#00eeff 440px,#00e2ff 444px,#00ccff 448px,#009bff 452px,#0069ff 456px,#0038ff 460px,#0006ff 464px,#0000e0 468px,#0000bf 472px,#0000a4 476px,#000097 480px,#00008b 484px,#000080 488px,#000080 496px,#000086 500px,#000097 504px,#0000a9 508px,#0000cd 512px,#0004ff 516px,#0039ff 520px,#0074ff 524px,#00acff 528px,#00e0ff 532px,#11ffee 536px,#36ffc9 540px,#61ff9e 544px,#98ff67 548px,#bfff40 550px,#ffe500 551.3px,#ffe500 609px,#caff35 610px,#7bff84 612px,#1bffe4 616px,#00fdff 620px,#00dfff 624px,#00c0ff 628px,#00a1ff 632px,#0079ff 636px,#0053ff 640px,#0036ff 644px,#001cff 648px,#0002ff 652px,#0000ec 656px,#0000d7 660px,#0000ca 664px,#0000b5 668px,#0000a0 672px,#00008b 676px,#000080 680px,#000080 732px)"></div><div style="top:68px;height:1px;background:linear-gradient(90deg,#000080 0px,#000080 40px,#00009f 44px,#0000d1 48px,#0000e2 52px,#0000e2 56px,#0000e3 60px,#0000e2 64px,#0000d6 68px,#0000cd 72px,#0000c6 76px,#0000de 80px,#0011ff 84px,#0046ff 88px,#007cff 92px,#00a5ff 96px,#00c9ff 100px,#00eaff 104px,#04fffb 108px,#28ffd7 112px,#54ffab 116px,#8aff75 120px,#f9ff06 124px,#ffe500 125px,#ffe500 183px,#dfff20 184px,#64ff9b 188px,#38ffc7 192px,#1cffe3 196px,#00feff 200px,#00d4ff 204px,#00a5ff 208px,#0072ff 212px,#0068ff 216px,#009cff 220px,#00d4ff 224px,#0bfff4 228px,#30ffcf 232px,#28ffd7 236px,#2bffd4 240px,#6cff93 244px,#bcff43 245.5px,#ffe500 246.5px,#ffe500 428px,#bcff43 429px,#40ffbf 432px,#13ffec 436px,#00f1ff 440px,#00daff 444px,#00bfff 448px,#00a1ff 452px,#007bff 456px,#002bff 460px,#0000d9 464px,#000095 468px,#00008b 472px,#0000a4 476px,#0000cb 480px,#0000e6 484px,#0000c4 488px,#0000a7 492px,#00008e 496px,#0000a1 500px,#0000cb 504px,#0000f6 508px,#002aff 512px,#003eff 516px,#0052ff 520px,#0072ff 524px,#00a8ff 528px,#00e5ff 532px,#20ffdf 536px,#48ffb7 540px,#56ffa9 544px,#83ff7c 548px,#adff52 550px,#ffe500 551.3px,#ffe500 609px,#d5ff2a 610px,#86ff79 612px,#09fff6 616px,#00c5ff 620px,#0089ff 624px,#0075ff 628px,#0060ff 632px,#0044ff 636px,#001eff 640px,#0000f4 644px,#0000cd 648px,#0000aa 652px,#00009e 656px,#000094 660px,#000092 664px,#000089 668px,#000080 672px,#000080 732px)"></div><div style="top:69px;height:1px;background:linear-gradient(90deg,#000080 0px,#000080 44px,#000091 48px,#0000a4 52px,#0000b6 56px,#0000c9 60px,#0000db 64px,#0000ee 68px,#0004ff 72px,#001dff 76px,#0035ff 80px,#0059ff 84px,#007fff 88px,#00a8ff 92px,#00d3ff 96px,#00f9ff 100px,#1cffe3 104px,#36ffc9 108px,#5affa5 112px,#81ff7e 116px,#abff54 120px,#ffff00 124px,#ffe500 125px,#ffe500 183px,#ecff13 184px,#7dff82 188px,#51ffae 192px,#36ffc9 196px,#1affe5 200px,#00f1ff 204px,#00c8ff 208px,#009aff 212px,#0095ff 216px,#00bfff 220px,#00e2ff 224px,#03fffc 228px,#19ffe6 232px,#2dffd2 236px,#4cffb3 240px,#8fff70 244px,#d1ff2e 245.5px,#ffe500 246.5px,#ffe500 428px,#ddff22 429px,#8bff74 432px,#51ffae 436px,#24ffdb 440px,#00faff 444px,#00c9ff 448px,#0096ff 452px,#0063ff 456px,#0035ff 460px,#0008ff 464px,#0000e6 468px,#0000c9 472px,#0000b1 476px,#0000a7 480px,#0000a7 484px,#0000a8 488px,#0000ad 492px,#0000b7 496px,#0000c1 500px,#0000cc 504px,#0000ca 508px,#0000da 512px,#0000fd 516px,#0021ff 520px,#004fff 524px,#007cff 528px,#00a6ff 532px,#00ccff 536px,#00e7ff 540px,#0bfff4 544px,#56ffa9 548px,#95ff6a 550px,#ffe500 551.3px,#ffe500 609px,#c6ff39 610px,#7bff84 612px,#32ffcd 616px,#28ffd7 620px,#1dffe2 624px,#00f0ff 628px,#00c4ff 632px,#008fff 636px,#005aff 640px,#0026ff 644px,#0000f4 648px,#0000db 652px,#0000c6 656px,#0000b3 660px,#0000a8 664px,#0000a7 668px,#0000a6 672px,#00008f 676px,#000080 680px,#000080 716px,#000087 720px,#000080 724px,#000080 732px)"></div><div style="top:70px;height:2px;background:linear-gradient(90deg,#000080 0px,#000080 52px,#000088 56px,#00009c 60px,#0000af 64px,#0000c3 68px,#0000da 72px,#0000f3 76px,#000eff 80px,#0032ff 84px,#005aff 88px,#0084ff 92px,#00b0ff 96px,#00d8ff 100px,#00fbff 104px,#18ffe7 108px,#3dffc2 112px,#69ff96 116px,#99ff66 120px,#fcff03 124px,#ffe500 125px,#ffe500 183px,#d5ff2a 184px,#2dffd2 188px,#00faff 192px,#00e6ff 196px,#00c5ff 200px,#0097ff 204px,#0068ff 208px,#0034ff 212px,#002aff 216px,#0048ff 220px,#005eff 224px,#007eff 228px,#009eff 232px,#00baff 236px,#00e2ff 240px,#54ffab 244px,#b5ff4a 245.5px,#ffe500 246.5px,#ffe500 428px,#9cff63 429px,#00f5ff 432px,#00c4ff 436px,#00a7ff 440px,#008fff 444px,#006eff 448px,#004bff 452px,#0029ff 456px,#0006ff 460px,#0000e2 464px,#0000cc 468px,#0000bc 472px,#0000b0 476px,#0000b3 480px,#0000b6 484px,#0000b8 488px,#0000c0 492px,#0000ca 496px,#0000bd 500px,#0000b0 504px,#0000a3 508px,#0000a9 512px,#0000c0 516px,#0000d8 520px,#0000fc 524px,#002aff 528px,#0059ff 532px,#0085ff 536px,#00a6ff 540px,#00ceff 544px,#2affd5 548px,#78ff87 550px,#ffe500 551.3px,#ffe500 609px,#beff41 610px,#63ff9c 612px,#00f9ff 616px,#00e1ff 620px,#00c9ff 624px,#00afff 628px,#0096ff 632px,#0074ff 636px,#0053ff 640px,#0032ff 644px,#000bff 648px,#0000de 652px,#0000b5 656px,#00008d 660px,#000080 664px,#000080 732px)"></div><div style="top:72px;height:1px;background:linear-gradient(90deg,#000080 0px,#000080 52px,#00008f 56px,#0000a9 60px,#0000c3 64px,#0000dd 68px,#0000fa 72px,#001bff 76px,#0037ff 80px,#005bff 84px,#0083ff 88px,#00aeff 92px,#00daff 96px,#03fffc 100px,#26ffd9 104px,#42ffbd 108px,#63ff9c 112px,#86ff79 116px,#acff53 120px,#ffff00 124px,#ffe500 125px,#ffe500 183px,#f2ff0d 184px,#89ff76 188px,#58ffa7 192px,#3bffc4 196px,#15ffea 200px,#00dcff 204px,#00a3ff 208px,#0065ff 212px,#0050ff 216px,#0064ff 220px,#0070ff 224px,#007fff 228px,#00a7ff 232px,#00cdff 236px,#00feff 240px,#6dff92 244px,#c3ff3c 245.5px,#ffe500 246.5px,#ffe500 428px,#c7ff38 429px,#5dffa2 432px,#36ffc9 436px,#16ffe9 440px,#00f7ff 444px,#00d1ff 448px,#00a9ff 452px,#0080ff 456px,#0057ff 460px,#002fff 464px,#0012ff 468px,#0000f6 472px,#0000e0 476px,#0000d7 480px,#0000cf 484px,#0000c7 488px,#0000c3 492px,#0000c5 496px,#0000ca 500px,#0000d1 504px,#0000d9 508px,#0000f2 512px,#0020ff 516px,#004cff 520px,#0084ff 524px,#00b8ff 528px,#00ddff 532px,#00fdff 536px,#13ffec 540px,#30ffcf 544px,#70ff8f 548px,#a4ff5b 550px,#ffe500 551.3px,#ffe500 609px,#e1ff1e 610px,#afff50 612px,#78ff87 616px,#5bffa4 620px,#33ffcc 624px,#0afff5 628px,#00e0ff 632px,#00afff 636px,#007dff 640px,#004dff 644px,#0021ff 648px,#0000f6 652px,#0000d0 656px,#0000ac 660px,#000091 664px,#000080 668px,#000080 732px)"></div><div style="top:73px;height:2px;background:linear-gradient(90deg,#000080 0px,#000080 44px,#000081 48px,#00008a 52px,#000094 56px,#00009d 60px,#0000a8 64px,#0000c4 68px,#0000e3 72px,#0007ff 76px,#0029ff 80px,#0056ff 84px,#0085ff 88px,#00aaff 92px,#00d1ff 96px,#00f3ff 100px,#11ffee 104px,#28ffd7 108px,#48ffb7 112px,#6cff93 116px,#97ff68 120px,#faff05 124px,#ffe500 125px,#ffe500 183px,#d9ff26 184px,#36ffc9 188px,#00fdff 192px,#00e4ff 196px,#00ccff 200px,#00a6ff 204px,#0080ff 208px,#0050ff 212px,#0048ff 216px,#006aff 220px,#0084ff 224px,#009bff 228px,#00aaff 232px,#00caff 236px,#00f5ff 240px,#64ff9b 244px,#bdff42 245.5px,#ffe500 246.5px,#ffe500 428px,#beff41 429px,#3bffc4 432px,#00ffff 436px,#00d1ff 440px,#00a7ff 444px,#0076ff 448px,#0057ff 452px,#0038ff 456px,#001aff 460px,#0000fa 464px,#0000e8 468px,#0000d9 472px,#0000bd 476px,#0000af 480px,#0000a1 484px,#000093 488px,#00008a 492px,#000086 496px,#000080 500px,#000080 512px,#000084 516px,#0000a0 520px,#0000f5 524px,#004aff 528px,#0099ff 532px,#00e4ff 536px,#24ffdb 540px,#69ff96 544px,#9bff64 548px,#c0ff3f 550px,#ffe500 551.3px,#ffe500 609px,#d7ff28 610px,#9aff65 612px,#56ffa9 616px,#31ffce 620px,#0bfff4 624px,#00e3ff 628px,#00bcff 632px,#008dff 636px,#005eff 640px,#002fff 644px,#0003ff 648px,#0000d6 652px,#0000ad 656px,#000086 660px,#000080 664px,#000080 732px)"></div><div style="top:75px;height:1px;background:linear-gradient(90deg,#000080 0px,#000080 40px,#000099 44px,#0000b2 48px,#0000ca 52px,#0000ea 56px,#000cff 60px,#002eff 64px,#0044ff 68px,#0048ff 72px,#004fff 76px,#0055ff 80px,#006dff 84px,#0089ff 88px,#00a8ff 92px,#00c8ff 96px,#00e3ff 100px,#00f9ff 104px,#09fff6 108px,#27ffd8 112px,#50ffaf 116px,#83ff7c 120px,#f6ff09 124px,#ffe500 125px,#ffe500 183px,#e3ff1c 184px,#58ffa7 188px,#21ffde 192px,#02fffd 196px,#00e1ff 200px,#00b4ff 204px,#008eff 208px,#0073ff 212px,#0081ff 216px,#00b7ff 220px,#00d6ff 224px,#00efff 228px,#00ffff 232px,#11ffee 236px,#38ffc7 240px,#8dff72 244px,#d2ff2d 245.5px,#ffe500 246.5px,#ffe500 428px,#caff35 429px,#63ff9c 432px,#2bffd4 436px,#00ffff 440px,#00d8ff 444px,#00b6ff 448px,#0094ff 452px,#0072ff 456px,#004cff 460px,#001eff 464px,#0000fb 468px,#0000dd 472px,#0000d3 476px,#0000da 480px,#0000e1 484px,#0000de 488px,#0000c8 492px,#0000b8 496px,#0000a7 500px,#00009f 504px,#000099 508px,#0000a6 512px,#0000ca 516px,#0000f7 520px,#0031ff 524px,#0069ff 528px,#009eff 532px,#00d0ff 536px,#00f6ff 540px,#1fffe0 544px,#61ff9e 548px,#9aff65 550px,#ffe500 551.3px,#ffe500 609px,#ceff31 610px,#84ff7b 612px,#29ffd6 616px,#06fff9 620px,#00e1ff 624px,#00c3ff 628px,#00b3ff 632px,#009bff 636px,#0083ff 640px,#0055ff 644px,#0026ff 648px,#0000f5 652px,#0000cf 656px,#0000b8 660px,#0000a9 664px,#0000a4 668px,#000081 672px,#000080 676px,#000080 732px)"></div><div style="top:76px;height:2px;background:linear-gradient(90deg,#000080 0px,#000080 44px,#00008d 48px,#00009f 52px,#0000b1 56px,#0000c7 60px,#0000e2 64px,#0000fd 68px,#001cff 72px,#003dff 76px,#005eff 80px,#008aff 84px,#00b9ff 88px,#00d8ff 92px,#00f8ff 96px,#13ffec 100px,#2affd5 104px,#3affc5 108px,#53ffac 112px,#71ff8e 116px,#9bff64 120px,#fcff03 124px,#ffe500 125px,#ffe500 183px,#e9ff16 184px,#71ff8e 188px,#43ffbc 192px,#2dffd2 196px,#17ffe8 200px,#00f3ff 204px,#00d0ff 208px,#00aaff 212px,#00adff 216px,#00d9ff 220px,#00fdff 224px,#20ffdf 228px,#39ffc6 232px,#4effb1 236px,#6aff95 240px,#a4ff5b 244px,#dbff24 245.5px,#ffe500 246.5px,#ffe500 428px,#a1ff5e 429px,#00f8ff 432px,#00bdff 436px,#008fff 440px,#0065ff 444px,#0034ff 448px,#0016ff 452px,#0000fa 456px,#0000df 460px,#0000c4 464px,#0000b5 468px,#0000aa 472px,#0000a3 476px,#0000a9 480px,#0000ac 484px,#0000b0 488px,#0000b8 492px,#0000c4 496px,#0000d1 500px,#0000de 504px,#0000ea 508px,#0000f5 512px,#0012ff 516px,#002eff 520px,#0055ff 524px,#007bff 528px,#009cff 532px,#00b9ff 536px,#00d4ff 540px,#04fffb 544px,#5bffa4 548px,#9cff63 550px,#ffe500 551.3px,#ffe500 609px,#c2ff3d 610px,#6aff95 612px,#00feff 616px,#00d9ff 620px,#00b3ff 624px,#008cff 628px,#0071ff 632px,#004fff 636px,#002dff 640px,#000cff 644px,#0000ed 648px,#0000cf 652px,#0000b5 656px,#000094 660px,#000080 664px,#000080 732px)"></div><div style="top:78px;height:1px;background:linear-gradient(90deg,#000080 0px,#000080 44px,#000085 48px,#000094 52px,#0000a3 56px,#0000b1 60px,#0000c5 64px,#0000e0 68px,#0000fd 72px,#001eff 76px,#003fff 80px,#0069ff 84px,#008fff 88px,#00abff 92px,#00caff 96px,#00e4ff 100px,#00faff 104px,#09fff6 108px,#27ffd8 112px,#54ffab 116px,#89ff76 120px,#f8ff07 124px,#ffe500 125px,#ffe500 183px,#eeff11 184px,#7bff84 188px,#45ffba 192px,#27ffd8 196px,#09fff6 200px,#00ddff 204px,#00b5ff 208px,#008eff 212px,#008fff 216px,#00b9ff 220px,#00dbff 224px,#00fbff 228px,#13ffec 232px,#28ffd7 236px,#47ffb8 240px,#93ff6c 244px,#d4ff2b 245.5px,#ffe500 246.5px,#ffe500 428px,#c8ff37 429px,#60ff9f 432px,#3affc5 436px,#20ffdf 440px,#0bfff4 444px,#00e6ff 448px,#00b6ff 452px,#0087ff 456px,#0058ff 460px,#0028ff 464px,#0005ff 468px,#0000e9 472px,#0000d9 476px,#0000d7 480px,#0000d4 484px,#0000d2 488px,#0000d5 492px,#0000d7 496px,#0000d4 500px,#0000d0 504px,#0000cd 508px,#0000dc 512px,#0000fe 516px,#0023ff 520px,#0056ff 524px,#0088ff 528px,#00b5ff 532px,#00ddff 536px,#00fbff 540px,#29ffd6 544px,#7fff80 548px,#b6ff49 550px,#ffe500 551.3px,#ffe500 609px,#e2ff1d 610px,#b2ff4d 612px,#72ff8d 616px,#46ffb9 620px,#19ffe6 624px,#00eaff 628px,#00bbff 632px,#0085ff 636px,#0059ff 640px,#003cff 644px,#0021ff 648px,#0006ff 652px,#0000ee 656px,#0000d8 660px,#0000c1 664px,#0000a6 668px,#00008a 672px,#000080 676px,#000080 732px)"></div><div style="top:79px;height:2px;background:linear-gradient(90deg,#000080 0px,#000080 36px,#000081 40px,#000080 44px,#000080 56px,#0000a3 60px,#0000c7 64px,#0000eb 68px,#0013ff 72px,#0037ff 76px,#0054ff 80px,#007cff 84px,#00a7ff 88px,#00d4ff 92px,#0afff5 96px,#39ffc6 100px,#64ff9b 104px,#88ff77 108px,#a7ff58 112px,#b4ff4b 116px,#c4ff3b 120px,#fffc00 124px,#ffe500 125px,#ffe500 183px,#ffff00 184px,#c5ff3a 188px,#a8ff57 192px,#99ff66 196px,#89ff76 200px,#54ffab 204px,#1effe1 208px,#00e2ff 212px,#00d1ff 216px,#00edff 220px,#09fff6 224px,#22ffdd 228px,#31ffce 232px,#3cffc3 236px,#5effa1 240px,#a3ff5c 244px,#dcff23 245.5px,#ffe500 246.5px,#ffe500 428px,#c6ff39 429px,#43ffbc 432px,#0dfff2 436px,#00f5ff 440px,#00e2ff 444px,#00c7ff 448px,#00a9ff 452px,#0087ff 456px,#0064ff 460px,#0042ff 464px,#002cff 468px,#0015ff 472px,#0000fb 476px,#0000f1 480px,#0000e7 484px,#0000dd 488px,#0000e4 492px,#0000f0 496px,#0000fc 500px,#000aff 504px,#000cff 508px,#0019ff 512px,#0037ff 516px,#0056ff 520px,#0080ff 524px,#00b0ff 528px,#00dbff 532px,#03fffc 536px,#1effe1 540px,#3affc5 544px,#71ff8e 548px,#a3ff5c 550px,#ffe500 551.3px,#ffe500 609px,#d4ff2b 610px,#89ff76 612px,#30ffcf 616px,#1fffe0 620px,#0dfff2 624px,#00f9ff 628px,#00e6ff 632px,#00c0ff 636px,#009bff 640px,#0076ff 644px,#0055ff 648px,#002eff 652px,#0006ff 656px,#0000de 660px,#0000c0 664px,#0000ab 668px,#0000a8 672px,#0000a5 676px,#0000a2 680px,#0000a6 684px,#00009e 688px,#000088 692px,#000080 696px,#000080 732px)"></div><div style="top:81px;height:1px;background:linear-gradient(90deg,#000080 0px,#000080 32px,#0000a1 36px,#00008a 40px,#000080 44px,#000080 56px,#000094 60px,#0000aa 64px,#0000b6 68px,#0000c5 72px,#0000d6 76px,#0000f2 80px,#0022ff 84px,#0054ff 88px,#0088ff 92px,#00a6ff 96px,#00bfff 100px,#00d4ff 104px,#00f4ff 108px,#2effd1 112px,#6dff92 116px,#a8ff57 120px,#feff01 124px,#ffe500 125px,#ffe500 183px,#e9ff16 184px,#6cff93 188px,#2cffd3 192px,#00fcff 196px,#00cdff 200px,#0094ff 204px,#0083ff 208px,#006dff 212px,#0080ff 216px,#00aaff 220px,#00bcff 224px,#00ccff 228px,#00d4ff 232px,#00ffff 236px,#37ffc8 240px,#97ff68 244px,#d9ff26 245.5px,#ffe500 246.5px,#ffe500 428px,#e1ff1e 429px,#84ff7b 432px,#43ffbc 436px,#0ffff0 440px,#00ecff 444px,#00ceff 448px,#00adff 452px,#008cff 456px,#005dff 460px,#002eff 464px,#000bff 468px,#0000ee 472px,#0000d9 476px,#0000d3 480px,#0000cd 484px,#0000c7 488px,#0000c6 492px,#0000ca 496px,#0000ca 500px,#0000c7 504px,#0000c4 508px,#0000d5 512px,#0011ff 516px,#004dff 520px,#0094ff 524px,#00bcff 528px,#00c6ff 532px,#00cdff 536px,#00c9ff 540px,#00e9ff 544px,#3affc5 548px,#81ff7e 550px,#ffe500 551.3px,#ffe500 609px,#c1ff3e 610px,#6aff95 612px,#06fff9 616px,#00e6ff 620px,#00c6ff 624px,#00b6ff 628px,#00a5ff 632px,#008dff 636px,#0068ff 640px,#0039ff 644px,#000eff 648px,#0000e3 652px,#0000d2 656px,#0000c1 660px,#0000ba 664px,#0000a9 668px,#000089 672px,#000080 676px,#000080 728px,#00008b 732px)"></div><div style="top:82px;height:2px;background:linear-gradient(90deg,#000080 0px,#000080 32px,#000097 36px,#0000af 40px,#0000ba 44px,#0000c5 48px,#0000d0 52px,#0000db 56px,#0000e5 60px,#0000f0 64px,#0004ff 68px,#001aff 72px,#0032ff 76px,#004bff 80px,#006eff 84px,#0094ff 88px,#00b6ff 92px,#00dbff 96px,#00faff 100px,#16ffe9 104px,#2affd5 108px,#48ffb7 112px,#7aff85 116px,#acff53 120px,#fffd00 124px,#ffe500 125px,#ffe500 183px,#efff10 184px,#8cff73 188px,#6bff94 192px,#5effa1 196px,#51ffae 200px,#37ffc8 204px,#1cffe3 208px,#00e9ff 212px,#00e0ff 216px,#01fffe 220px,#19ffe6 224px,#2effd1 228px,#3bffc4 232px,#47ffb8 236px,#5fffa0 240px,#9dff62 244px,#d8ff27 245.5px,#ffe500 246.5px,#ffe500 428px,#a4ff5b 429px,#11ffee 432px,#00e9ff 436px,#00ceff 440px,#00b8ff 444px,#0099ff 448px,#006aff 452px,#003bff 456px,#000cff 460px,#0000db 464px,#0000b8 468px,#00009a 472px,#000092 476px,#000099 480px,#00009f 484px,#0000a6 488px,#0000b1 492px,#0000c1 496px,#0000c7 500px,#0000cd 504px,#0000d2 508px,#0000eb 512px,#0016ff 516px,#0040ff 520px,#0073ff 524px,#00a3ff 528px,#00cfff 532px,#00f7ff 536px,#14ffeb 540px,#39ffc6 544px,#7dff82 548px,#afff50 550px,#ffe500 551.3px,#ffe500 609px,#e1ff1e 610px,#afff50 612px,#75ff8a 616px,#42ffbd 620px,#0efff1 624px,#00d8ff 628px,#00a2ff 632px,#0065ff 636px,#0029ff 640px,#0014ff 644px,#0002ff 648px,#0000f0 652px,#0000e2 656px,#0000d6 660px,#0000d1 664px,#0000c1 668px,#0000b0 672px,#00009f 676px,#00008e 680px,#000084 684px,#000080 688px,#000080 732px)"></div><div style="top:84px;height:1px;background:linear-gradient(90deg,#000080 0px,#000080 36px,#000084 40px,#00009a 44px,#0000af 48px,#0000c1 52px,#0000cb 56px,#0000d6 60px,#0000e0 64px,#0000ea 68px,#0000f7 72px,#000dff 76px,#0030ff 80px,#005eff 84px,#008fff 88px,#00c2ff 92px,#00f8ff 96px,#20ffdf 100px,#2bffd4 104px,#2fffd0 108px,#3dffc2 112px,#53ffac 116px,#7aff85 120px,#f2ff0d 124px,#ffe500 125px,#ffe500 183px,#e6ff19 184px,#68ff97 188px,#3bffc4 192px,#25ffda 196px,#08fff7 200px,#00deff 204px,#00b4ff 208px,#0085ff 212px,#007fff 216px,#00a0ff 220px,#00b2ff 224px,#00c1ff 228px,#00c8ff 232px,#00cbff 236px,#00daff 240px,#46ffb9 244px,#b0ff4f 245.5px,#ffe500 246.5px,#ffe500 428px,#d8ff27 429px,#84ff7b 432px,#57ffa8 436px,#26ffd9 440px,#00f8ff 444px,#00c3ff 448px,#008cff 452px,#0055ff 456px,#0021ff 460px,#0000f6 464px,#0000d7 468px,#0000bd 472px,#0000a8 476px,#0000a1 480px,#00009f 484px,#0000ad 488px,#0000c0 492px,#0000d7 496px,#0000ef 500px,#0007ff 504px,#0015ff 508px,#001bff 512px,#0033ff 516px,#004bff 520px,#006fff 524px,#0091ff 528px,#00b4ff 532px,#00e3ff 536px,#08fff7 540px,#33ffcc 544px,#7eff81 548px,#b2ff4d 550px,#ffe500 551.3px,#ffe500 609px,#dfff20 610px,#a6ff59 612px,#5cffa3 616px,#3effc1 620px,#1effe1 624px,#00fcff 628px,#00d8ff 632px,#00abff 636px,#007fff 640px,#0053ff 644px,#002bff 648px,#0001ff 652px,#0000d8 656px,#0000b0 660px,#000092 664px,#000080 668px,#000080 732px)"></div><div style="top:85px;height:2px;background:linear-gradient(90deg,#000080 0px,#000080 36px,#000086 40px,#0000a8 44px,#0000b4 48px,#0000bc 52px,#0000c4 56px,#0000d1 60px,#0000e4 64px,#0000f8 68px,#0010ff 72px,#002aff 76px,#0044ff 80px,#0068ff 84px,#008fff 88px,#00b6ff 92px,#00dfff 96px,#04fffb 100px,#26ffd9 104px,#41ffbe 108px,#65ff9a 112px,#84ff7b 116px,#9eff61 120px,#f9ff06 124px,#ffe500 125px,#ffe500 183px,#e3ff1c 184px,#65ff9a 188px,#3effc1 192px,#31ffce 196px,#20ffdf 200px,#00fdff 204px,#00daff 208px,#00b2ff 212px,#00b1ff 216px,#00d8ff 220px,#00f8ff 224px,#18ffe7 228px,#34ffcb 232px,#4cffb3 236px,#6fff90 240px,#9aff65 244px,#d3ff2c 245.5px,#ffe500 246.5px,#ffe500 428px,#ccff33 429px,#49ffb6 432px,#00f8ff 436px,#00d0ff 440px,#00b0ff 444px,#0089ff 448px,#006aff 452px,#005dff 456px,#0051ff 460px,#0044ff 464px,#0029ff 468px,#000eff 472px,#0000f6 476px,#0000ee 480px,#0000e5 484px,#0000dc 488px,#0000d8 492px,#0000d1 496px,#0000c7 500px,#0000be 504px,#0000be 508px,#0000e0 512px,#0014ff 516px,#0048ff 520px,#0069ff 524px,#0083ff 528px,#0098ff 532px,#00b3ff 536px,#00d5ff 540px,#00feff 544px,#53ffac 548px,#9aff65 550px,#ffe500 551.3px,#ffe500 609px,#dcff23 610px,#9eff61 612px,#4dffb2 616px,#26ffd9 620px,#00f4ff 624px,#00c3ff 628px,#0091ff 632px,#006bff 636px,#0049ff 640px,#0027ff 644px,#000bff 648px,#0000f3 652px,#0000e0 656px,#0000cf 660px,#0000af 664px,#000095 668px,#000080 672px,#000080 680px,#00008e 684px,#0000a0 688px,#00008b 692px,#000080 696px,#000080 712px,#00008c 716px,#000080 720px,#000080 732px)"></div><div style="top:87px;height:1px;background:linear-gradient(90deg,#000080 0px,#000080 40px,#00008a 44px,#00009e 48px,#0000ae 52px,#0000bb 56px,#0000c8 60px,#0000d4 64px,#0000e1 68px,#0000f0 72px,#0004ff 76px,#0017ff 80px,#003cff 84px,#0065ff 88px,#0090ff 92px,#00bdff 96px,#00e5ff 100px,#0afff5 104px,#27ffd8 108px,#4effb1 112px,#79ff86 116px,#a6ff59 120px,#ffff00 124px,#ffe500 125px,#ffe500 183px,#f5ff0a 184px,#98ff67 188px,#6cff93 192px,#54ffab 196px,#3cffc3 200px,#18ffe7 204px,#00f1ff 208px,#00c7ff 212px,#00c6ff 216px,#00edff 220px,#0efff1 224px,#2cffd3 228px,#3fffc0 232px,#4fffb0 236px,#6aff95 240px,#a7ff58 244px,#deff21 245.5px,#ffe500 246.5px,#ffe500 428px,#b2ff4d 429px,#22ffdd 432px,#00e9ff 436px,#00bfff 440px,#00aaff 444px,#008eff 448px,#006fff 452px,#0050ff 456px,#0031ff 460px,#0013ff 464px,#0000ff 468px,#0000ee 472px,#0000df 476px,#0000df 484px,#0000de 488px,#0000e3 492px,#0000ec 496px,#0000f4 500px,#0000f0 504px,#0000ec 508px,#0000fb 512px,#001cff 516px,#003dff 520px,#0069ff 524px,#0094ff 528px,#00c2ff 532px,#00f1ff 536px,#16ffe9 540px,#42ffbd 544px,#8bff74 548px,#bbff44 550px,#ffe500 551.3px,#ffe500 609px,#d5ff2a 610px,#93ff6c 612px,#42ffbd 616px,#24ffdb 620px,#01fffe 624px,#00dcff 628px,#00b8ff 632px,#008cff 636px,#005fff 640px,#0034ff 644px,#000cff 648px,#0000de 652px,#0000b0 656px,#000085 660px,#000080 664px,#000080 732px)"></div><div style="top:88px;height:2px;background:linear-gradient(90deg,#000080 0px,#000080 24px,#000081 28px,#000090 32px,#0000a0 36px,#0000ab 40px,#0000b8 44px,#0000c5 48px,#0000d1 52px,#0000de 56px,#0000ea 60px,#0000f7 64px,#0007ff 68px,#0022ff 72px,#0041ff 76px,#0060ff 80px,#0089ff 84px,#00b5ff 88px,#00e4ff 92px,#16ffe9 96px,#32ffcd 100px,#42ffbd 104px,#4affb5 108px,#5cffa3 112px,#73ff8c 116px,#94ff6b 120px,#f8ff07 124px,#ffe500 125px,#ffe500 183px,#ecff13 184px,#7eff81 188px,#4effb1 192px,#34ffcb 196px,#1affe5 200px,#00f3ff 204px,#00cbff 208px,#009fff 212px,#009bff 216px,#00c5ff 220px,#00e9ff 224px,#0cfff3 228px,#24ffdb 232px,#3affc5 236px,#5affa5 240px,#a0ff5f 244px,#dbff24 245.5px,#ffe500 246.5px,#ffe500 428px,#a0ff5f 429px,#0afff5 432px,#00e7ff 436px,#00d2ff 440px,#00c0ff 444px,#00a8ff 448px,#008cff 452px,#0071ff 456px,#0050ff 460px,#002cff 464px,#0015ff 468px,#0001ff 472px,#0000f2 476px,#0000f2 480px,#0000f1 484px,#0000ef 488px,#0000e6 492px,#0000e3 496px,#0000df 500px,#0000dc 504px,#0000d8 508px,#0000e7 512px,#0009ff 516px,#0034ff 520px,#006fff 524px,#00a8ff 528px,#00ddff 532px,#0ffff0 536px,#34ffcb 540px,#61ff9e 544px,#a2ff5d 548px,#c5ff3a 550px,#ffe500 551.3px,#ffe500 609px,#d2ff2d 610px,#8cff73 612px,#36ffc9 616px,#17ffe8 620px,#00f7ff 624px,#00d7ff 628px,#00b6ff 632px,#008eff 636px,#0068ff 640px,#0045ff 644px,#0026ff 648px,#0006ff 652px,#0000e9 656px,#0000ce 660px,#0000bc 664px,#0000b2 668px,#0000a1 672px,#00008f 676px,#000080 680px,#000080 732px)"></div><div style="top:90px;height:1px;background:linear-gradient(90deg,#000080 0px,#000080 44px,#00008e 48px,#0000a4 52px,#0000b4 56px,#0000c4 60px,#0000d3 64px,#0000e8 68px,#0008ff 72px,#002bff 76px,#004eff 80px,#005cff 84px,#0069ff 88px,#0079ff 92px,#0097ff 96px,#00c3ff 100px,#00eaff 104px,#0cfff3 108px,#31ffce 112px,#5effa1 116px,#91ff6e 120px,#f9ff06 124px,#ffe500 125px,#ffe500 183px,#d6ff29 184px,#37ffc8 188px,#0dfff2 192px,#00f0ff 196px,#00d1ff 200px,#00a7ff 204px,#0081ff 208px,#005fff 212px,#0066ff 216px,#0097ff 220px,#00b7ff 224px,#00d3ff 228px,#00e7ff 232px,#00f8ff 236px,#19ffe6 240px,#73ff8c 244px,#c4ff3b 245.5px,#ffe500 246.5px,#ffe500 428px,#adff52 429px,#18ffe7 432px,#00e6ff 436px,#00c1ff 440px,#00a0ff 444px,#0070ff 448px,#003bff 452px,#0007ff 456px,#0000dd 460px,#0000c4 464px,#0000b7 468px,#0000af 472px,#00009a 476px,#000091 480px,#000089 484px,#000084 488px,#00008b 492px,#000096 496px,#0000a1 500px,#0000ab 504px,#0000b6 508px,#0000d3 512px,#0000f7 516px,#000aff 520px,#0027ff 524px,#0043ff 528px,#0075ff 532px,#00a7ff 536px,#00cdff 540px,#00f9ff 544px,#50ffaf 548px,#93ff6c 550px,#ffe500 551.3px,#ffe500 609px,#ceff31 610px,#87ff78 612px,#34ffcb 616px,#19ffe6 620px,#00fcff 624px,#00deff 628px,#00bdff 632px,#0095ff 636px,#006cff 640px,#003bff 644px,#000bff 648px,#0000da 652px,#0000b4 656px,#00009a 660px,#00008a 664px,#000082 668px,#000080 672px,#000080 732px)"></div><div style="top:91px;height:1px;background:linear-gradient(90deg,#000080 0px,#000080 24px,#000085 28px,#000093 32px,#00009d 36px,#0000a8 40px,#0000b5 44px,#0000c1 48px,#0000c4 52px,#0000c8 56px,#0000cb 60px,#0000ce 64px,#0000dd 68px,#0000f4 72px,#000fff 76px,#0029ff 80px,#004bff 84px,#0068ff 88px,#0088ff 92px,#00aaff 96px,#00c6ff 100px,#00f1ff 104px,#1dffe2 108px,#52ffad 112px,#89ff76 116px,#b8ff47 120px,#fffd00 124px,#ffe500 125px,#ffe500 183px,#e3ff1c 184px,#56ffa9 188px,#24ffdb 192px,#23ffdc 196px,#21ffde 200px,#14ffeb 204px,#04fffb 208px,#00dfff 212px,#00ddff 216px,#04fffb 220px,#23ffdc 224px,#3bffc4 228px,#3bffc4 232px,#38ffc7 236px,#41ffbe 240px,#7eff81 244px,#c7ff38 245.5px,#ffe500 246.5px,#ffe500 428px,#c9ff36 429px,#63ff9c 432px,#3effc1 436px,#24ffdb 440px,#08fff7 444px,#00bfff 448px,#0075ff 452px,#002cff 456px,#0000e1 460px,#0000c4 464px,#0000c8 468px,#0000d1 472px,#0000dd 476px,#0000f1 480px,#0000e5 484px,#0000da 488px,#0000d3 492px,#0000d1 496px,#0000cb 500px,#0000c5 504px,#0000be 508px,#0000ca 512px,#0000f0 516px,#0036ff 520px,#0087ff 524px,#00d6ff 528px,#22ffdd 532px,#4dffb2 536px,#61ff9e 540px,#7dff82 544px,#aeff51 548px,#ceff31 550px,#ffe500 551.3px,#ffe500 609px,#e9ff16 610px,#beff41 612px,#88ff77 616px,#75ff8a 620px,#5cffa3 624px,#30ffcf 628px,#03fffc 632px,#00ceff 636px,#0099ff 640px,#0068ff 644px,#003aff 648px,#000dff 652px,#0000e2 656px,#0000bf 660px,#0000bd 664px,#0000c4 668px,#0000cb 672px,#0000d2 676px,#0000bc 680px,#00009f 684px,#000083 688px,#000080 692px,#000080 708px,#00008c 712px,#00008b 716px,#000083 720px,#000080 724px,#000080 732px)"></div><div style="top:92px;height:2px;background:linear-gradient(90deg,#000080 0px,#000080 36px,#000087 40px,#000096 44px,#0000a4 48px,#0000ad 52px,#0000b4 56px,#0000bb 60px,#0000c2 64px,#0000ca 68px,#0000d4 72px,#0000e8 76px,#0000ff 80px,#0021ff 84px,#0045ff 88px,#006cff 92px,#0095ff 96px,#00bdff 100px,#00e3ff 104px,#02fffd 108px,#2affd5 112px,#5affa5 116px,#90ff6f 120px,#faff05 124px,#ffe500 125px,#ffe500 183px,#e3ff1c 184px,#4dffb2 188px,#0afff5 192px,#00f8ff 196px,#00ecff 200px,#00d4ff 204px,#00baff 208px,#009cff 212px,#00a7ff 216px,#00ccff 220px,#00e6ff 224px,#00fdff 228px,#0bfff4 232px,#16ffe9 236px,#2cffd3 240px,#84ff7b 244px,#ceff31 245.5px,#ffe500 246.5px,#ffe500 428px,#a7ff58 429px,#15ffea 432px,#00eeff 436px,#00d6ff 440px,#00c2ff 444px,#00a6ff 448px,#0087ff 452px,#0069ff 456px,#0035ff 460px,#0000fa 464px,#0000cc 468px,#0000a2 472px,#000080 476px,#000080 484px,#000089 488px,#0000a4 492px,#0000c4 496px,#0000e4 500px,#0005ff 504px,#0000ff 508px,#0001ff 512px,#0016ff 516px,#002aff 520px,#004aff 524px,#0068ff 528px,#0099ff 532px,#00ccff 536px,#00f4ff 540px,#25ffda 544px,#76ff89 548px,#aeff51 550px,#ffe500 551.3px,#ffe500 609px,#cfff30 610px,#81ff7e 612px,#1effe1 616px,#00f5ff 620px,#00cdff 624px,#00adff 628px,#0090ff 632px,#006bff 636px,#0046ff 640px,#0022ff 644px,#0001ff 648px,#0000d0 652px,#00009e 656px,#000080 660px,#000080 732px)"></div><div style="top:94px;height:1px;background:linear-gradient(90deg,#000080 0px,#000080 40px,#000081 44px,#00008c 48px,#000097 52px,#0000a2 56px,#0000b1 60px,#0000c2 64px,#0000d2 68px,#0000e6 72px,#0000fd 76px,#0015ff 80px,#0036ff 84px,#005eff 88px,#0092ff 92px,#00c9ff 96px,#00faff 100px,#29ffd6 104px,#4fffb0 108px,#7fff80 112px,#adff52 116px,#c5ff3a 120px,#fffb00 124px,#ffe500 125px,#ffe500 183px,#eaff15 184px,#69ff96 188px,#2effd1 192px,#0cfff3 196px,#00e9ff 200px,#00baff 204px,#008eff 208px,#006eff 212px,#0077ff 216px,#00a8ff 220px,#00d2ff 224px,#00f9ff 228px,#18ffe7 232px,#33ffcc 236px,#4fffb0 240px,#93ff6c 244px,#d3ff2c 245.5px,#ffe500 246.5px,#ffe500 428px,#cdff32 429px,#60ff9f 432px,#2affd5 436px,#02fffd 440px,#00ddff 444px,#00b0ff 448px,#0080ff 452px,#0050ff 456px,#0020ff 460px,#0000ef 464px,#0000cb 468px,#0000ac 472px,#000091 476px,#00008e 480px,#000090 484px,#000092 488px,#000099 492px,#0000a5 496px,#0000b1 500px,#0000bc 504px,#0000c3 508px,#0000c9 512px,#0000e1 516px,#0000f9 520px,#001eff 524px,#0040ff 528px,#005dff 532px,#0076ff 536px,#0099ff 540px,#00cdff 544px,#33ffcc 548px,#82ff7d 550px,#ffe500 551.3px,#ffe500 609px,#d3ff2c 610px,#83ff7c 612px,#10ffef 616px,#00d5ff 620px,#009bff 624px,#0067ff 628px,#0053ff 632px,#0036ff 636px,#0019ff 640px,#0000fc 644px,#0000e3 648px,#0000ca 652px,#0000b5 656px,#00009e 660px,#00008f 664px,#000089 668px,#000083 672px,#000080 676px,#000080 712px,#000081 716px,#000080 720px,#000080 732px)"></div><div style="top:95px;height:2px;background:linear-gradient(90deg,#000080 0px,#000080 16px,#000095 20px,#0000aa 24px,#0000bb 28px,#0000b6 32px,#0000b1 36px,#0000ab 40px,#0000a9 44px,#0000a6 48px,#0000a8 52px,#0000b1 56px,#0000ba 60px,#0000c3 64px,#0000cc 68px,#0000d9 72px,#0000ec 76px,#0007ff 80px,#002dff 84px,#0055ff 88px,#0081ff 92px,#00aeff 96px,#00d5ff 100px,#00f6ff 104px,#11ffee 108px,#35ffca 112px,#60ff9f 116px,#92ff6d 120px,#f9ff06 124px,#ffe500 125px,#ffe500 183px,#e8ff17 184px,#6eff91 188px,#40ffbf 192px,#2affd5 196px,#13ffec 200px,#00efff 204px,#00cbff 208px,#00a2ff 212px,#00a1ff 216px,#00c7ff 220px,#00e0ff 224px,#00f6ff 228px,#04fffb 232px,#0efff1 236px,#24ffdb 240px,#76ff89 244px,#c6ff39 245.5px,#ffe500 246.5px,#ffe500 428px,#c3ff3c 429px,#46ffb9 432px,#08fff7 436px,#00d3ff 440px,#00a4ff 444px,#006dff 448px,#0033ff 452px,#0000f9 456px,#0000cd 460px,#0000bd 464px,#0000b9 468px,#0000b9 472px,#0000be 476px,#0000d2 480px,#0000dd 484px,#0000d9 488px,#0000da 492px,#0000e0 496px,#0000e5 500px,#0000eb 504px,#0000ee 508px,#0000fd 512px,#001fff 516px,#0041ff 520px,#006eff 524px,#0099ff 528px,#00c1ff 532px,#00e8ff 536px,#05fffa 540px,#28ffd7 544px,#6fff90 548px,#a5ff5a 550px,#ffe500 551.3px,#ffe500 609px,#ddff22 610px,#9fff60 612px,#4cffb3 616px,#27ffd8 620px,#02fffd 624px,#00dcff 628px,#00baff 632px,#0090ff 636px,#0066ff 640px,#003dff 644px,#0018ff 648px,#0000f2 652px,#0000d4 656px,#0000b7 660px,#0000a3 664px,#000098 668px,#00008d 672px,#000083 676px,#000080 680px,#000080 732px)"></div><div style="top:97px;height:1px;background:linear-gradient(90deg,#000080 0px,#000080 44px,#000083 48px,#000093 52px,#0000a1 56px,#0000ae 60px,#0000bc 64px,#0000c9 68px,#0000da 72px,#0000ed 76px,#000fff 80px,#003dff 84px,#006eff 88px,#00a2ff 92px,#00d8ff 96px,#09fff6 100px,#2effd1 104px,#4bffb4 108px,#71ff8e 112px,#97ff68 116px,#bcff43 120px,#fffa00 124px,#ffe500 125px,#ffe500 183px,#f3ff0c 184px,#8eff71 188px,#60ff9f 192px,#46ffb9 196px,#26ffd9 200px,#00f8ff 204px,#00caff 208px,#0097ff 212px,#008dff 216px,#00abff 220px,#00d2ff 224px,#00f7ff 228px,#14ffeb 232px,#2dffd2 236px,#52ffad 240px,#9dff62 244px,#daff25 245.5px,#ffe500 246.5px,#ffe500 428px,#b5ff4a 429px,#33ffcc 432px,#08fff7 436px,#00e9ff 440px,#00d0ff 444px,#00b0ff 448px,#008dff 452px,#0069ff 456px,#0046ff 460px,#0018ff 464px,#0000f4 468px,#0000d6 472px,#0000bc 476px,#0000b0 480px,#0000a4 484px,#0000a6 488px,#0000b0 492px,#0000be 496px,#0000cb 500px,#0000d9 504px,#0000e7 508px,#0000f8 512px,#001aff 516px,#003cff 520px,#0068ff 524px,#0094ff 528px,#00baff 532px,#00eaff 536px,#12ffed 540px,#41ffbe 544px,#8cff73 548px,#bcff43 550px,#ffe500 551.3px,#ffe500 609px,#d1ff2e 610px,#87ff78 612px,#2affd5 616px,#06fff9 620px,#00e0ff 624px,#00b9ff 628px,#009eff 632px,#007cff 636px,#0059ff 640px,#0038ff 644px,#001aff 648px,#0000fa 652px,#0000dd 656px,#0000c1 660px,#0000ad 664px,#0000a3 668px,#000099 672px,#00008f 676px,#000080 680px,#000080 732px)"></div><div style="top:98px;height:2px;background:linear-gradient(90deg,#000080 0px,#000080 16px,#000083 20px,#000087 24px,#000093 28px,#00009f 32px,#000099 36px,#000093 40px,#000090 44px,#00008d 48px,#000097 52px,#0000aa 56px,#0000bd 60px,#0000d1 64px,#0000e4 68px,#0002ff 72px,#0022ff 76px,#0041ff 80px,#006bff 84px,#0090ff 88px,#00b1ff 92px,#00d4ff 96px,#00f2ff 100px,#0ffff0 104px,#30ffcf 108px,#5bffa4 112px,#88ff77 116px,#b4ff4b 120px,#fffd00 124px,#ffe500 125px,#ffe500 183px,#fffc00 184px,#b8ff47 188px,#80ff7f 192px,#65ff9a 196px,#53ffac 200px,#35ffca 204px,#15ffea 208px,#00eeff 212px,#00e3ff 216px,#02fffd 220px,#18ffe7 224px,#2cffd3 228px,#37ffc8 232px,#40ffbf 236px,#53ffac 240px,#93ff6c 244px,#d2ff2d 245.5px,#ffe500 246.5px,#ffe500 428px,#acff53 429px,#35ffca 432px,#26ffd9 436px,#24ffdb 440px,#27ffd8 444px,#00fcff 448px,#00b8ff 452px,#0074ff 456px,#0031ff 460px,#0000ef 464px,#0000d1 468px,#0000b7 472px,#0000a3 476px,#00009c 480px,#000098 484px,#000096 488px,#000098 492px,#00009f 496px,#0000a6 500px,#0000b3 504px,#0000bf 508px,#0000dd 512px,#000fff 516px,#003bff 520px,#006fff 524px,#00a1ff 528px,#00ceff 532px,#00f6ff 536px,#07fff8 540px,#1effe1 544px,#5dffa2 548px,#96ff69 550px,#ffe500 551.3px,#ffe500 609px,#ccff33 610px,#7aff85 612px,#0efff1 616px,#00dfff 620px,#00b1ff 624px,#0091ff 628px,#007bff 632px,#005dff 636px,#003fff 640px,#0022ff 644px,#0001ff 648px,#0000df 652px,#0000c2 656px,#0000a6 660px,#000099 664px,#000099 676px,#000096 680px,#000085 684px,#000080 688px,#000080 720px,#00008d 724px,#0000a1 728px,#0000b5 732px)"></div><div style="top:100px;height:1px;background:linear-gradient(90deg,#000080 0px,#000080 48px,#00008f 52px,#0000a2 56px,#0000b0 60px,#0000bf 64px,#0000ce 68px,#0000e1 72px,#0000fe 76px,#001cff 80px,#0043ff 84px,#006eff 88px,#0097ff 92px,#00c0ff 96px,#00e4ff 100px,#05fffa 104px,#1fffe0 108px,#44ffbb 112px,#6fff90 116px,#9eff61 120px,#fdff02 124px,#ffe500 125px,#ffe500 183px,#d4ff2b 184px,#1effe1 188px,#00dbff 192px,#00bbff 196px,#00a7ff 200px,#008bff 204px,#006eff 208px,#004cff 212px,#0052ff 216px,#0078ff 220px,#0096ff 224px,#00b3ff 228px,#00c5ff 232px,#00e0ff 236px,#0dfff2 240px,#73ff8c 244px,#c5ff3a 245.5px,#ffe500 246.5px,#ffe500 428px,#9cff63 429px,#00f7ff 432px,#00d4ff 436px,#00bdff 440px,#00abff 444px,#0091ff 448px,#006eff 452px,#0048ff 456px,#0023ff 460px,#0000fc 464px,#0000e5 468px,#0000d8 472px,#0000d0 476px,#0000d6 480px,#0000dc 484px,#0000cf 488px,#0000bf 492px,#0000b3 496px,#0000a7 500px,#00009f 504px,#0000a4 508px,#0000bb 512px,#0000e4 516px,#000fff 520px,#003aff 524px,#0060ff 528px,#0081ff 532px,#009eff 536px,#00b5ff 540px,#00e5ff 544px,#43ffbc 548px,#8cff73 550px,#ffe500 551.3px,#ffe500 609px,#cfff30 610px,#84ff7b 612px,#36ffc9 616px,#23ffdc 620px,#0efff1 624px,#00f7ff 628px,#00daff 632px,#00b2ff 636px,#0089ff 640px,#0062ff 644px,#003eff 648px,#001eff 652px,#0001ff 656px,#0000e4 660px,#0000d2 664px,#0000bc 668px,#0000a2 672px,#000088 676px,#000080 680px,#000080 732px)"></div><div style="top:101px;height:2px;background:linear-gradient(90deg,#000080 0px,#000080 44px,#000090 48px,#0000a4 52px,#0000b9 56px,#0000cd 60px,#0000d5 64px,#0000da 68px,#0000e2 72px,#0000ec 76px,#0000fb 80px,#0020ff 84px,#0048ff 88px,#0073ff 92px,#009fff 96px,#00caff 100px,#00f2ff 104px,#13ffec 108px,#3dffc2 112px,#68ff97 116px,#8fff70 120px,#f7ff08 124px,#ffe500 125px,#ffe500 183px,#f4ff0b 184px,#abff54 188px,#7bff84 192px,#5cffa3 196px,#3cffc3 200px,#10ffef 204px,#00d6ff 208px,#0095ff 212px,#007cff 216px,#008cff 220px,#009dff 224px,#00c2ff 228px,#00deff 232px,#00f6ff 236px,#1bffe4 240px,#76ff89 244px,#c6ff39 245.5px,#ffe500 246.5px,#ffe500 428px,#aaff55 429px,#0bfff4 432px,#00cbff 436px,#00a0ff 440px,#008eff 444px,#0074ff 448px,#0058ff 452px,#003bff 456px,#002bff 460px,#001fff 464px,#001fff 468px,#0022ff 472px,#001dff 476px,#0000ff 480px,#0000e2 484px,#0000c5 488px,#0000ad 492px,#0000b4 496px,#0000c4 500px,#0000d3 504px,#0000e2 508px,#0000fe 512px,#001cff 516px,#0038ff 520px,#0061ff 524px,#0087ff 528px,#00b1ff 532px,#00d9ff 536px,#00f5ff 540px,#1bffe4 544px,#66ff99 548px,#a1ff5e 550px,#ffe500 551.3px,#ffe500 609px,#d3ff2c 610px,#89ff76 612px,#25ffda 616px,#00f9ff 620px,#00ccff 624px,#009eff 628px,#0070ff 632px,#003aff 636px,#0022ff 640px,#0014ff 644px,#0009ff 648px,#0000fe 652px,#0000ef 656px,#0000cc 660px,#0000b2 664px,#0000a1 668px,#000090 672px,#000080 676px,#000080 732px)"></div><div style="top:103px;height:1px;background:linear-gradient(90deg,#000080 0px,#000080 40px,#00008c 44px,#000099 48px,#0000a6 52px,#0000b3 56px,#0000b8 60px,#0000bc 64px,#0000c0 68px,#0000c7 72px,#0000d1 76px,#0000db 80px,#0005ff 84px,#0036ff 88px,#0069ff 92px,#009fff 96px,#00cfff 100px,#00fbff 104px,#14ffeb 108px,#33ffcc 112px,#5affa5 116px,#8aff75 120px,#f7ff08 124px,#ffe500 125px,#ffe500 183px,#e4ff1b 184px,#62ff9d 188px,#37ffc8 192px,#26ffd9 196px,#15ffea 200px,#00f5ff 204px,#00d4ff 208px,#00afff 212px,#00b2ff 216px,#00dfff 220px,#04fffb 224px,#18ffe7 228px,#1fffe0 232px,#24ffdb 236px,#34ffcb 240px,#7aff85 244px,#c5ff3a 245.5px,#ffe500 246.5px,#ffe500 428px,#b7ff48 429px,#39ffc6 432px,#0ffff0 436px,#00f1ff 440px,#00d4ff 444px,#00aeff 448px,#0086ff 452px,#005dff 456px,#0035ff 460px,#000dff 464px,#0000ec 468px,#0000d1 472px,#0000ba 476px,#0000b1 480px,#0000a8 484px,#0000a0 488px,#00009d 492px,#0000a0 496px,#0000a3 500px,#0000a6 504px,#0000a9 508px,#0000be 512px,#0000da 516px,#0000f3 520px,#001aff 524px,#003dff 528px,#005cff 532px,#0076ff 536px,#009bff 540px,#00ccff 544px,#30ffcf 548px,#7fff80 550px,#ffe500 551.3px,#ffe500 609px,#d6ff29 610px,#98ff67 612px,#52ffad 616px,#3fffc0 620px,#2affd5 624px,#15ffea 628px,#00ffff 632px,#00dcff 636px,#00b8ff 640px,#0095ff 644px,#0075ff 648px,#0055ff 652px,#0039ff 656px,#0014ff 660px,#0000f5 664px,#0000df 668px,#0000ca 672px,#0000b5 676px,#0000a0 680px,#000091 684px,#000083 688px,#000080 692px,#000080 732px)"></div><div style="top:104px;height:2px;background:linear-gradient(90deg,#000080 0px,#000080 44px,#00008a 48px,#00009e 52px,#0000b1 56px,#0000c5 60px,#0000d8 64px,#0000eb 68px,#0003ff 72px,#001cff 76px,#0035ff 80px,#0059ff 84px,#0080ff 88px,#00a9ff 92px,#00cfff 96px,#00efff 100px,#0cfff3 104px,#22ffdd 108px,#40ffbf 112px,#66ff99 116px,#97ff68 120px,#fbff04 124px,#ffe500 125px,#ffe500 183px,#e6ff19 184px,#5effa1 188px,#3dffc2 192px,#35ffca 196px,#2effd1 200px,#1affe5 204px,#05fffa 208px,#00ebff 212px,#00d9ff 216px,#00efff 220px,#00feff 224px,#0cfff3 228px,#0ffff0 232px,#0ffff0 236px,#31ffce 240px,#85ff7a 244px,#cdff32 245.5px,#ffe500 246.5px,#ffe500 428px,#caff35 429px,#5fffa0 432px,#31ffce 436px,#10ffef 440px,#00f2ff 444px,#00cdff 448px,#00a6ff 452px,#0077ff 456px,#0049ff 460px,#001bff 464px,#0000f8 468px,#0000da 472px,#0000c1 476px,#0000b8 480px,#0000b0 484px,#0000a7 488px,#0000a3 492px,#0000a4 496px,#0000a5 500px,#0000bb 504px,#0000d2 508px,#0000fb 512px,#0037ff 516px,#0072ff 520px,#00b8ff 524px,#00dbff 528px,#00faff 532px,#15ffea 536px,#24ffdb 540px,#3affc5 544px,#74ff8b 548px,#adff52 550px,#ffe500 551.3px,#ffe500 609px,#d1ff2e 610px,#8bff74 612px,#3cffc3 616px,#25ffda 620px,#0ffff0 624px,#00f6ff 628px,#00dfff 632px,#00c0ff 636px,#00a0ff 640px,#0082ff 644px,#004cff 648px,#0016ff 652px,#0000e3 656px,#0000b2 660px,#00008a 664px,#000080 668px,#000080 732px)"></div><div style="top:106px;height:1px;background:linear-gradient(90deg,#000080 0px,#000080 44px,#000086 48px,#00009b 52px,#0000b1 56px,#0000c6 60px,#0000dc 64px,#0000e4 68px,#0000e8 72px,#0000f0 76px,#0000f8 80px,#0010ff 84px,#0039ff 88px,#0065ff 92px,#0093ff 96px,#00bcff 100px,#00ddff 104px,#00f5ff 108px,#19ffe6 112px,#45ffba 116px,#80ff7f 120px,#f8ff07 124px,#ffe500 125px,#ffe500 183px,#dcff23 184px,#42ffbd 188px,#13ffec 192px,#0efff1 196px,#08fff7 200px,#00f5ff 204px,#00e2ff 208px,#00b9ff 212px,#00b2ff 216px,#00d4ff 220px,#00efff 224px,#07fff8 228px,#14ffeb 232px,#1effe1 236px,#33ffcc 240px,#7eff81 244px,#c8ff37 245.5px,#ffe500 246.5px,#ffe500 428px,#e8ff17 429px,#89ff76 432px,#39ffc6 436px,#00f5ff 440px,#00bfff 444px,#00a1ff 448px,#0081ff 452px,#0061ff 456px,#0041ff 460px,#0014ff 464px,#0000ee 468px,#0000cc 472px,#0000b0 476px,#0000a2 480px,#000099 484px,#000090 488px,#00008c 492px,#00008d 496px,#00008f 500px,#000093 504px,#000096 508px,#0000ac 512px,#0000d5 516px,#0003ff 520px,#003cff 524px,#0073ff 528px,#00a5ff 532px,#00d3ff 536px,#00f5ff 540px,#20ffdf 544px,#6eff91 548px,#a7ff58 550px,#ffe500 551.3px,#ffe500 609px,#ceff31 610px,#88ff77 612px,#3fffc0 616px,#2fffd0 620px,#17ffe8 624px,#00e3ff 628px,#00b1ff 632px,#0077ff 636px,#003cff 640px,#001aff 644px,#0005ff 648px,#0000ee 652px,#0000dc 656px,#0000c7 660px,#0000ac 664px,#00009a 668px,#000088 672px,#000080 676px,#000080 732px)"></div><div style="top:107px;height:2px;background:linear-gradient(90deg,#000080 0px,#000080 68px,#000089 72px,#0000a9 76px,#0000c9 80px,#0000f4 84px,#0023ff 88px,#0053ff 92px,#0086ff 96px,#00b4ff 100px,#00dcff 104px,#00fcff 108px,#27ffd8 112px,#5affa5 116px,#91ff6e 120px,#fbff04 124px,#ffe500 125px,#ffe500 183px,#d7ff28 184px,#24ffdb 188px,#00e4ff 192px,#00cdff 196px,#00b7ff 200px,#0095ff 204px,#0071ff 208px,#0048ff 212px,#0049ff 216px,#0072ff 220px,#0098ff 224px,#00bcff 228px,#00d7ff 232px,#00eeff 236px,#12ffed 240px,#71ff8e 244px,#c3ff3c 245.5px,#ffe500 246.5px,#ffe500 428px,#c8ff37 429px,#5cffa3 432px,#28ffd7 436px,#01fffe 440px,#00deff 444px,#00b3ff 448px,#0086ff 452px,#005aff 456px,#002dff 460px,#000eff 464px,#0000ff 468px,#0000f4 472px,#0000ee 476px,#0000f6 480px,#0000ff 484px,#0008ff 488px,#000eff 492px,#0007ff 496px,#0001ff 500px,#0000fa 504px,#0000f3 508px,#0000ff 512px,#001fff 516px,#003dff 520px,#006dff 524px,#009dff 528px,#00c7ff 532px,#00eeff 536px,#0bfff4 540px,#2effd1 544px,#74ff8b 548px,#a9ff56 550px,#ffe500 551.3px,#ffe500 609px,#c6ff39 610px,#73ff8c 612px,#10ffef 616px,#00eeff 620px,#00ccff 624px,#00a9ff 628px,#0086ff 632px,#005bff 636px,#002fff 640px,#000dff 644px,#0000ee 648px,#0000d0 652px,#0000b6 656px,#00009d 660px,#00008d 664px,#000086 668px,#000080 672px,#000080 732px)"></div><div style="top:109px;height:1px;background:linear-gradient(90deg,#000080 0px,#000080 48px,#000094 52px,#0000b7 56px,#0000da 60px,#0000fd 64px,#0000f5 68px,#0000e8 72px,#0000df 76px,#0000e2 80px,#000bff 84px,#0037ff 88px,#0065ff 92px,#0098ff 96px,#00c7ff 100px,#00f2ff 104px,#0cfff3 108px,#1cffe3 112px,#39ffc6 116px,#68ff97 120px,#f1ff0e 124px,#ffe500 125px,#ffe500 183px,#e4ff1b 184px,#5effa1 188px,#2bffd4 192px,#0bfff4 196px,#00ebff 200px,#00bfff 204px,#00a0ff 208px,#0080ff 212px,#0088ff 216px,#00b7ff 220px,#00d8ff 224px,#00f7ff 228px,#0dfff2 232px,#22ffdd 236px,#42ffbd 240px,#8fff70 244px,#d2ff2d 245.5px,#ffe500 246.5px,#ffe500 428px,#a2ff5d 429px,#0dfff2 432px,#00e5ff 436px,#00ccff 440px,#00b7ff 444px,#009cff 448px,#007eff 452px,#0061ff 456px,#0038ff 460px,#000eff 464px,#0000ee 468px,#0000d6 472px,#0000c7 476px,#0000c6 480px,#0000c5 484px,#0000b0 488px,#00009c 492px,#00008d 496px,#000080 500px,#000080 512px,#0000a9 516px,#0000f6 520px,#0050ff 524px,#0097ff 528px,#00bbff 532px,#00dcff 536px,#00f1ff 540px,#1fffe0 544px,#71ff8e 548px,#aaff55 550px,#ffe500 551.3px,#ffe500 609px,#c3ff3c 610px,#70ff8f 612px,#10ffef 616px,#00f2ff 620px,#00d5ff 624px,#00c9ff 628px,#00c0ff 632px,#00b0ff 636px,#008cff 640px,#0047ff 644px,#0005ff 648px,#0000c2 652px,#0000a1 656px,#000086 660px,#000080 664px,#000080 732px)"></div><div style="top:110px;height:2px;background:linear-gradient(90deg,#000080 0px,#000080 60px,#000098 64px,#0000b5 68px,#0000d5 72px,#0000f9 76px,#001dff 80px,#0047ff 84px,#0069ff 88px,#008dff 92px,#00b4ff 96px,#00d5ff 100px,#00f2ff 104px,#0bfff4 108px,#32ffcd 112px,#60ff9f 116px,#93ff6c 120px,#faff05 124px,#ffe500 125px,#ffe500 183px,#d7ff28 184px,#45ffba 188px,#29ffd6 192px,#2affd5 196px,#2cffd3 200px,#17ffe8 204px,#00e7ff 208px,#00b2ff 212px,#00a7ff 216px,#00c5ff 220px,#00daff 224px,#00ebff 228px,#00eaff 232px,#00e6ff 236px,#00eeff 240px,#46ffb9 244px,#a9ff56 245.5px,#ffe500 246.5px,#ffe500 428px,#a8ff57 429px,#12ffed 432px,#00e0ff 436px,#00bdff 440px,#009dff 444px,#0076ff 448px,#004dff 452px,#0023ff 456px,#0000f8 460px,#0000cf 464px,#0000b0 468px,#000092 472px,#000080 476px,#000080 508px,#000084 512px,#0000b0 516px,#0000dc 520px,#0016ff 524px,#004dff 528px,#007eff 532px,#00adff 536px,#00d0ff 540px,#00fcff 544px,#53ffac 548px,#95ff6a 550px,#ffe500 551.3px,#ffe500 609px,#d9ff26 610px,#9aff65 612px,#3dffc2 616px,#11ffee 620px,#00e4ff 624px,#00b6ff 628px,#0088ff 632px,#0058ff 636px,#0037ff 640px,#0018ff 644px,#0000fb 648px,#0000df 652px,#0000c6 656px,#0000a9 660px,#000086 664px,#000080 668px,#000080 732px)"></div><div style="top:112px;height:1px;background:linear-gradient(90deg,#000080 0px,#000080 52px,#000084 56px,#0000a5 60px,#0000c5 64px,#0000e2 68px,#0001ff 72px,#0022ff 76px,#003eff 80px,#0051ff 84px,#0069ff 88px,#0082ff 92px,#00aaff 96px,#00d1ff 100px,#00f4ff 104px,#0dfff2 108px,#20ffdf 112px,#3fffc0 116px,#6fff90 120px,#f0ff0f 124px,#ffe500 125px,#ffe500 183px,#dfff20 184px,#3bffc4 188px,#00f5ff 192px,#00d6ff 196px,#00b7ff 200px,#008bff 204px,#0064ff 208px,#003cff 212px,#003cff 216px,#0068ff 220px,#0099ff 224px,#00c6ff 228px,#00ebff 232px,#00eeff 236px,#00f0ff 240px,#44ffbb 244px,#a8ff57 245.5px,#ffe500 246.5px,#ffe500 428px,#7eff81 429px,#00c4ff 432px,#00abff 436px,#009fff 440px,#0094ff 444px,#0078ff 448px,#0059ff 452px,#003aff 456px,#0011ff 460px,#0000e3 464px,#0000c3 468px,#0000a5 472px,#00008b 476px,#000080 480px,#000080 492px,#00008c 496px,#000094 500px,#000080 504px,#000080 512px,#0000a5 516px,#0000ef 520px,#0046ff 524px,#0093ff 528px,#00c4ff 532px,#00f0ff 536px,#13ffec 540px,#37ffc8 544px,#7bff84 548px,#aeff51 550px,#ffe500 551.3px,#ffe500 609px,#b0ff4f 610px,#4bffb4 612px,#00e6ff 616px,#00d5ff 620px,#00c2ff 624px,#00a5ff 628px,#0084ff 632px,#005bff 636px,#0031ff 640px,#0005ff 644px,#0000dc 648px,#0000b3 652px,#000098 656px,#000083 660px,#000080 664px,#000080 732px)"></div><div style="top:113px;height:1px;background:linear-gradient(90deg,#000080 0px,#000080 48px,#000086 52px,#000094 56px,#0000a3 60px,#0000b3 64px,#0000c3 68px,#0000d6 72px,#0000ec 76px,#0007ff 80px,#002dff 84px,#0055ff 88px,#0080ff 92px,#00a3ff 96px,#00b8ff 100px,#00c8ff 104px,#00d1ff 108px,#00e5ff 112px,#2fffd0 116px,#7cff83 120px,#f8ff07 124px,#ffe500 125px,#ffe500 183px,#d7ff28 184px,#25ffda 188px,#00e0ff 192px,#00bcff 196px,#0099ff 200px,#0079ff 204px,#0068ff 208px,#0051ff 212px,#0064ff 216px,#009fff 220px,#00bcff 224px,#00d7ff 228px,#00e9ff 232px,#00f8ff 236px,#0afff5 240px,#5bffa4 244px,#b4ff4b 245.5px,#ffe500 246.5px,#ffe500 428px,#9dff62 429px,#05fffa 432px,#00e2ff 436px,#00d3ff 440px,#00c9ff 444px,#00b6ff 448px,#00a1ff 452px,#0075ff 456px,#0035ff 460px,#0000f4 464px,#0000c0 468px,#000091 472px,#000080 476px,#000080 500px,#00008a 504px,#00009b 508px,#0000b0 512px,#0000d7 516px,#0000fe 520px,#0031ff 524px,#005aff 528px,#0076ff 532px,#008eff 536px,#009aff 540px,#00b0ff 544px,#2dffd2 548px,#83ff7c 550px,#ffe500 551.3px,#ffe500 609px,#c7ff38 610px,#77ff88 612px,#1affe5 616px,#00fbff 620px,#00dcff 624px,#00bcff 628px,#009bff 632px,#0079ff 636px,#005cff 640px,#0041ff 644px,#0028ff 648px,#000eff 652px,#0000dd 656px,#0000ae 660px,#000089 664px,#000080 668px,#000080 732px)"></div><div style="top:114px;height:2px;background:linear-gradient(90deg,#000080 0px,#000080 28px,#000081 32px,#00008f 36px,#00009c 40px,#0000ac 44px,#0000bc 48px,#0000cc 52px,#0000dc 56px,#0000e8 60px,#0000f4 64px,#0000ff 68px,#000fff 72px,#0020ff 76px,#0032ff 80px,#005bff 84px,#0089ff 88px,#00baff 92px,#00edff 96px,#1dffe2 100px,#47ffb8 104px,#61ff9e 108px,#84ff7b 112px,#a6ff59 116px,#c5ff3a 120px,#fff900 124px,#ffe500 125px,#ffe500 183px,#dcff23 184px,#45ffba 188px,#16ffe9 192px,#05fffa 196px,#00f3ff 200px,#00d3ff 204px,#00b2ff 208px,#008cff 212px,#008fff 216px,#00bbff 220px,#00e0ff 224px,#04fffb 228px,#1fffe0 232px,#36ffc9 236px,#59ffa6 240px,#a0ff5f 244px,#dbff24 245.5px,#ffe500 246.5px,#ffe500 428px,#ccff33 429px,#6aff95 432px,#45ffba 436px,#2dffd2 440px,#06fff9 444px,#00d3ff 448px,#009fff 452px,#006bff 456px,#0036ff 460px,#0002ff 464px,#0000e6 468px,#0000d0 472px,#0000c0 476px,#0000be 480px,#0000bc 484px,#0000ba 488px,#0000c4 492px,#0000d4 496px,#0000e3 500px,#0000f3 504px,#0004ff 508px,#0026ff 512px,#0048ff 516px,#0066ff 520px,#0090ff 524px,#00b8ff 528px,#00dcff 532px,#00fbff 536px,#0ffff0 540px,#2affd5 544px,#69ff96 548px,#9fff60 550px,#ffe500 551.3px,#ffe500 609px,#ceff31 610px,#86ff79 612px,#33ffcc 616px,#1affe5 620px,#00feff 624px,#00e3ff 628px,#00c7ff 632px,#00a0ff 636px,#0077ff 640px,#0050ff 644px,#002bff 648px,#0007ff 652px,#0000e5 656px,#0000b9 660px,#000094 664px,#000080 668px,#000080 732px)"></div><div style="top:116px;height:1px;background:linear-gradient(90deg,#0000f3 0px,#000bff 4px,#0000fc 8px,#000aff 12px,#000eff 16px,#000cff 20px,#0000fd 24px,#0000f9 28px,#000cff 32px,#0012ff 36px,#0000fc 40px,#0000fb 44px,#0003ff 48px,#0000fe 52px,#000fff 56px,#0010ff 60px,#000dff 64px,#0000fe 68px,#0000fb 72px,#0001ff 76px,#0010ff 80px,#0040ff 84px,#0065ff 88px,#008eff 92px,#00b8ff 96px,#00ddff 100px,#00fcff 104px,#14ffeb 108px,#34ffcb 112px,#5dffa2 116px,#90ff6f 120px,#fcff03 124px,#ffe500 125px,#ffe500 183px,#ecff13 184px,#74ff8b 188px,#42ffbd 192px,#34ffcb 196px,#25ffda 200px,#0afff5 204px,#00edff 208px,#00bfff 212px,#00b5ff 216px,#00d4ff 220px,#00eaff 224px,#00ffff 228px,#0afff5 232px,#11ffee 236px,#23ffdc 240px,#71ff8e 244px,#c1ff3e 245.5px,#ffe500 246.5px,#ffe500 428px,#c4ff3b 429px,#56ffa9 432px,#2fffd0 436px,#15ffea 440px,#00f9ff 444px,#00beff 448px,#0081ff 452px,#0045ff 456px,#0011ff 460px,#000eff 464px,#0003ff 468px,#0008ff 472px,#0002ff 476px,#001aff 480px,#0001ff 484px,#0007ff 488px,#000fff 492px,#0005ff 496px,#0010ff 500px,#0009ff 504px,#0007ff 508px,#0021ff 512px,#0049ff 516px,#005aff 520px,#0077ff 524px,#0093ff 528px,#00a9ff 532px,#00c6ff 536px,#00dbff 540px,#00f8ff 544px,#43ffbc 548px,#86ff79 550px,#ffe500 551.3px,#ffe500 609px,#e4ff1b 610px,#b0ff4f 612px,#67ff98 616px,#47ffb8 620px,#24ffdb 624px,#00fbff 628px,#00d2ff 632px,#00a1ff 636px,#0070ff 640px,#0040ff 644px,#0016ff 648px,#0000f6 652px,#0000f6 656px,#0000ff 660px,#0002ff 664px,#000bff 668px,#0000fd 672px,#0000fb 676px,#000eff 680px,#0000fa 684px,#0021ff 688px,#0000f6 692px,#0006ff 696px,#0011ff 700px,#0006ff 704px,#0000f4 708px,#0005ff 712px,#0011ff 716px,#0000fd 720px,#0000f4 724px,#0005ff 728px,#0000ef 732px)"></div><div style="top:117px;height:2px;background:linear-gradient(90deg,#0005ff 0px,#0000f3 4px,#0008ff 8px,#0003ff 12px,#0005ff 16px,#0000f8 20px,#0006ff 24px,#0004ff 28px,#0000fe 32px,#0000fc 36px,#0003ff 40px,#0000f1 44px,#0008ff 48px,#0000ff 52px,#0010ff 56px,#0010ff 60px,#0023ff 64px,#0032ff 68px,#0044ff 72px,#0058ff 76px,#006dff 80px,#0089ff 84px,#009eff 88px,#00b6ff 92px,#00cfff 96px,#00e4ff 100px,#06fff9 104px,#28ffd7 108px,#52ffad 112px,#80ff7f 116px,#abff54 120px,#feff01 124px,#ffe500 125px,#ffe500 183px,#e0ff1f 184px,#48ffb7 188px,#10ffef 192px,#03fffc 196px,#00f5ff 200px,#00dcff 204px,#00c1ff 208px,#00a0ff 212px,#00a8ff 216px,#00d8ff 220px,#01fffe 224px,#24ffdb 228px,#33ffcc 232px,#3fffc0 236px,#56ffa9 240px,#97ff68 244px,#d5ff2a 245.5px,#ffe500 246.5px,#ffe500 428px,#acff53 429px,#28ffd7 432px,#0bfff4 436px,#00f9ff 440px,#00eaff 444px,#00cdff 448px,#00adff 452px,#008dff 456px,#006dff 460px,#0033ff 464px,#0014ff 468px,#0009ff 472px,#0004ff 476px,#0008ff 480px,#001eff 484px,#001bff 488px,#0009ff 492px,#000aff 496px,#000aff 500px,#0000f5 504px,#0000ff 508px,#0007ff 512px,#002eff 516px,#0068ff 520px,#00aeff 524px,#00f3ff 528px,#33ffcc 532px,#58ffa7 536px,#69ff96 540px,#81ff7e 544px,#aeff51 548px,#cdff32 550px,#ffe500 551.3px,#ffe500 609px,#cbff34 610px,#7aff85 612px,#17ffe8 616px,#00f0ff 620px,#00ccff 624px,#00b2ff 628px,#0098ff 632px,#0075ff 636px,#0052ff 640px,#0037ff 644px,#0021ff 648px,#0020ff 652px,#000eff 656px,#0013ff 660px,#0000fb 664px,#0004ff 668px,#0000ff 672px,#0000ec 676px,#0007ff 680px,#0001ff 684px,#0002ff 688px,#0009ff 692px,#000fff 696px,#000bff 700px,#0016ff 704px,#0000fd 708px,#000dff 712px,#0000fc 716px,#0002ff 720px,#0010ff 724px,#000aff 728px,#0007ff 732px)"></div><div style="top:119px;height:1px;background:linear-gradient(90deg,#0009ff 0px,#0006ff 4px,#0012ff 8px,#0003ff 12px,#0001ff 16px,#0013ff 20px,#000fff 24px,#0011ff 28px,#0000f7 32px,#0004ff 36px,#0007ff 40px,#0007ff 44px,#0000ec 48px,#0005ff 52px,#0005ff 56px,#0010ff 60px,#0003ff 64px,#0005ff 68px,#0003ff 72px,#0000fe 76px,#0021ff 80px,#004eff 84px,#007eff 88px,#009cff 92px,#00bdff 96px,#00d9ff 100px,#00f0ff 104px,#07fff8 108px,#2cffd3 112px,#59ffa6 116px,#8eff71 120px,#f9ff06 124px,#ffe500 125px,#ffe500 183px,#e1ff1e 184px,#4fffb0 188px,#16ffe9 192px,#00f9ff 196px,#00d8ff 200px,#00acff 204px,#007dff 208px,#004bff 212px,#0046ff 216px,#0070ff 220px,#0092ff 224px,#00b2ff 228px,#00c8ff 232px,#00eaff 236px,#18ffe7 240px,#7cff83 244px,#caff35 245.5px,#ffe500 246.5px,#ffe500 428px,#8aff75 429px,#00d0ff 432px,#00aeff 436px,#009aff 440px,#0089ff 444px,#0071ff 448px,#005cff 452px,#0047ff 456px,#0031ff 460px,#001cff 464px,#000aff 468px,#0000f6 472px,#000eff 476px,#0000f5 480px,#0015ff 484px,#001bff 488px,#0003ff 492px,#0000f5 496px,#0001ff 500px,#0007ff 504px,#0000ef 508px,#0000fd 512px,#0006ff 516px,#0009ff 520px,#0000f4 524px,#002fff 528px,#0064ff 532px,#0096ff 536px,#00c0ff 540px,#00f8ff 544px,#59ffa6 548px,#9cff63 550px,#ffe500 551.3px,#ffe500 609px,#c7ff38 610px,#77ff88 612px,#1dffe2 616px,#03fffc 620px,#00e7ff 624px,#00cbff 628px,#00adff 632px,#0087ff 636px,#0060ff 640px,#003bff 644px,#0014ff 648px,#0000fd 652px,#0000fa 656px,#0000fb 660px,#0000ff 664px,#0003ff 668px,#0014ff 672px,#0008ff 676px,#0016ff 680px,#0000f2 684px,#0003ff 688px,#0000f0 692px,#0000ed 696px,#0007ff 700px,#0000f1 704px,#0005ff 708px,#0000fa 712px,#0011ff 716px,#0011ff 720px,#0000f3 724px,#000cff 728px,#0004ff 732px)"></div><div style="top:120px;height:2px;background:linear-gradient(90deg,#005fff 0px,#0063ff 2px,#0071ff 4px,#0070ff 6px,#006eff 8px,#005bff 10px,#0058ff 12px,#006dff 14px,#0070ff 16px,#0075ff 18px,#0063ff 20px,#0068ff 22px,#0057ff 24px,#006aff 26px,#0073ff 28px,#006dff 30px,#007cff 32px,#0074ff 34px,#0081ff 36px,#006aff 38px,#0063ff 40px,#005dff 42px,#005bff 44px,#006fff 46px,#006eff 48px,#006eff 50px,#0077ff 52px,#007fff 54px,#0069ff 56px,#0072ff 58px,#008aff 60px,#0050ff 62px,#006cff 64px,#0072ff 66px,#0064ff 68px,#0077ff 70px,#006fff 72px,#0066ff 74px,#0057ff 76px,#004bff 78px,#0083ff 80px,#0064ff 82px,#006eff 84px,#00beff 86px,#00bbff 88px,#00bfff 90px,#03fffc 92px,#07fff8 94px,#00f9ff 96px,#51ffae 98px,#8fff70 100px,#31ffce 102px,#69ff96 104px,#9cff63 106px,#97ff68 108px,#beff41 110px,#a0ff5f 112px,#efff10 114px,#ceff31 116px,#ddff22 118px,#fff700 120px,#ffe100 122px,#ebff14 124px,#fff800 125px,#f7ff08 183px,#ffd300 184px,#9fff60 186px,#c5ff3a 188px,#9fff60 190px,#35ffca 192px,#6aff95 194px,#76ff89 196px,#48ffb7 198px,#75ff8a 200px,#45ffba 202px,#4cffb3 204px,#20ffdf 206px,#34ffcb 208px,#21ffde 210px,#47ffb8 212px,#20ffdf 214px,#15ffea 216px,#29ffd6 218px,#41ffbe 220px,#5cffa3 222px,#20ffdf 224px,#77ff88 226px,#a0ff5f 228px,#9bff64 230px,#7aff85 232px,#79ff86 234px,#79ff86 236px,#fff500 238px,#ffff00 240px,#ffd200 242px,#fff300 244px,#ffd500 245.5px,#bcff43 246px,#ffd700 246.5px,#ddff22 428px,#ffec00 429px,#ffcc00 430px,#faff05 432px,#94ff6b 434px,#9dff62 436px,#66ff99 438px,#59ffa6 440px,#0bfff4 442px,#2affd5 444px,#11ffee 446px,#00fbff 448px,#00e0ff 450px,#00c0ff 452px,#00b0ff 454px,#007aff 456px,#0079ff 458px,#0059ff 460px,#0063ff 462px,#005fff 464px,#0061ff 466px,#0066ff 468px,#005eff 470px,#007dff 472px,#0062ff 474px,#0075ff 476px,#007dff 478px,#0087ff 480px,#0071ff 482px,#0063ff 484px,#0066ff 486px,#0073ff 488px,#0065ff 490px,#005dff 492px,#006eff 494px,#0065ff 496px,#005cff 498px,#0064ff 500px,#0064ff 502px,#0067ff 504px,#006fff 506px,#006fff 508px,#0078ff 510px,#0063ff 512px,#0084ff 514px,#0084ff 516px,#0080ff 518px,#009fff 520px,#0098ff 522px,#00d8ff 524px,#00ceff 526px,#00b8ff 528px,#19ffe6 530px,#1affe5 532px,#16ffe9 534px,#3fffc0 536px,#61ff9e 538px,#59ffa6 540px,#73ff8c 542px,#acff53 544px,#91ff6e 546px,#d0ff2f 548px,#ffa800 550px,#fff000 551.3px,#feff01 609px,#ffc300 610px,#ffe600 612px,#88ff77 614px,#90ff6f 616px,#73ff8c 618px,#bbff44 620px,#9aff65 622px,#6cff93 624px,#78ff87 626px,#1affe5 628px,#20ffdf 630px,#32ffcd 632px,#3cffc3 634px,#00e0ff 636px,#00fbff 638px,#00d9ff 640px,#00c5ff 642px,#00baff 644px,#0093ff 646px,#00abff 648px,#007aff 650px,#0075ff 652px,#0060ff 654px,#006cff 656px,#005fff 658px,#0088ff 660px,#0078ff 662px,#0069ff 664px,#0075ff 666px,#0083ff 668px,#0062ff 670px,#0079ff 672px,#006eff 674px,#0081ff 676px,#006dff 678px,#007fff 680px,#0074ff 682px,#0066ff 684px,#006dff 686px,#006aff 688px,#006eff 690px,#007aff 692px,#0069ff 694px,#0077ff 696px,#0074ff 698px,#0079ff 700px,#0067ff 702px,#005aff 704px,#007eff 706px,#0077ff 708px,#006bff 710px,#0074ff 712px,#006dff 714px,#0062ff 716px,#0067ff 718px,#0058ff 720px,#0080ff 722px,#0075ff 724px,#0075ff 726px,#0069ff 728px,#0068ff 730px,#0076ff 732px,#006bff 734px)"></div><div style="top:122px;height:1px;background:linear-gradient(90deg,#00c0ff 0px,#00b9ff 2px,#00bcff 4px,#00cbff 6px,#00baff 8px,#00d3ff 10px,#00dbff 12px,#00d0ff 14px,#00c1ff 16px,#00bcff 18px,#00b9ff 20px,#00c7ff 22px,#00c5ff 24px,#00caff 26px,#00c5ff 28px,#00b3ff 30px,#00d7ff 32px,#00acff 34px,#00bdff 36px,#00d6ff 38px,#00c9ff 40px,#00d8ff 42px,#00b4ff 44px,#00c4ff 46px,#00a9ff 48px,#00caff 50px,#00c8ff 52px,#00c1ff 54px,#00cfff 56px,#00cbff 58px,#00d5ff 60px,#00c3ff 62px,#00c4ff 64px,#00d6ff 66px,#00cbff 68px,#00d2ff 70px,#00d0ff 72px,#00ceff 74px,#00b1ff 76px,#00b4ff 78px,#009fff 80px,#0093ff 82px,#00c1ff 84px,#00c0ff 86px,#00d8ff 88px,#00d3ff 90px,#00dcff 92px,#1bffe4 94px,#34ffcb 96px,#49ffb6 98px,#57ffa8 100px,#48ffb7 102px,#7aff85 104px,#89ff76 106px,#a6ff59 108px,#8bff74 110px,#7cff83 112px,#e2ff1d 114px,#f5ff0a 116px,#deff21 118px,#a3ff5c 120px,#fff300 122px,#ffdb00 124px,#fbff04 125px,#fffd00 183px,#ff8d00 184px,#dbff24 186px,#b9ff46 188px,#7fff80 190px,#96ff69 192px,#87ff78 194px,#8fff70 196px,#2dffd2 198px,#8eff71 200px,#93ff6c 202px,#55ffaa 204px,#2affd5 206px,#48ffb7 208px,#35ffca 210px,#00ebff 212px,#00e9ff 214px,#06fff9 216px,#00fcff 218px,#28ffd7 220px,#5bffa4 222px,#90ff6f 224px,#22ffdd 226px,#84ff7b 228px,#47ffb8 230px,#6fff90 232px,#a7ff58 234px,#72ff8d 236px,#b0ff4f 238px,#a6ff59 240px,#e9ff16 242px,#c8ff37 244px,#ff6e00 245.5px,#d2ff2d 246px,#feff01 246.5px,#e7ff18 428px,#ffac00 429px,#f2ff0d 430px,#9dff62 432px,#bbff44 434px,#41ffbe 436px,#3affc5 438px,#54ffab 440px,#22ffdd 442px,#24ffdb 444px,#17ffe8 446px,#01fffe 448px,#00fbff 450px,#00c5ff 452px,#00e5ff 454px,#00c9ff 456px,#00c2ff 458px,#00c3ff 460px,#00d1ff 462px,#00cdff 464px,#00cfff 466px,#00deff 468px,#00d8ff 470px,#00bbff 472px,#00c5ff 474px,#00c6ff 476px,#00c7ff 478px,#00c8ff 480px,#00bfff 482px,#00b9ff 484px,#00c3ff 486px,#00c3ff 488px,#00ccff 490px,#00c5ff 492px,#00adff 494px,#00e0ff 496px,#00b3ff 498px,#00d0ff 500px,#00dfff 502px,#00d6ff 504px,#00dfff 506px,#00ceff 508px,#00bfff 510px,#00d5ff 512px,#00c1ff 514px,#00c7ff 516px,#00b0ff 518px,#00d8ff 520px,#00d4ff 522px,#00cbff 524px,#12ffed 526px,#1dffe2 528px,#44ffbb 530px,#08fff7 532px,#31ffce 534px,#52ffad 536px,#2bffd4 538px,#72ff8d 540px,#7eff81 542px,#8aff75 544px,#afff50 546px,#a1ff5e 548px,#ffd100 550px,#ffac00 551.3px,#e3ff1c 609px,#fff600 610px,#f1ff0e 612px,#79ff86 614px,#74ff8b 616px,#77ff88 618px,#43ffbc 620px,#29ffd6 622px,#72ff8d 624px,#1dffe2 626px,#48ffb7 628px,#03fffc 630px,#1cffe3 632px,#00e7ff 634px,#00baff 636px,#00daff 638px,#00c7ff 640px,#00b8ff 642px,#00f2ff 644px,#00dbff 646px,#00c9ff 648px,#00caff 650px,#00caff 652px,#00c7ff 654px,#00ccff 656px,#00cdff 658px,#00c8ff 660px,#00bdff 662px,#00caff 664px,#00c2ff 666px,#00b8ff 668px,#00baff 670px,#00bfff 672px,#00dfff 674px,#00c9ff 676px,#00baff 678px,#00c7ff 680px,#00c3ff 682px,#00d4ff 684px,#00caff 686px,#00beff 688px,#00bbff 690px,#00d0ff 692px,#00d6ff 694px,#00b6ff 696px,#00c6ff 698px,#00b6ff 700px,#00c9ff 702px,#00cdff 704px,#00d2ff 706px,#00caff 708px,#00c0ff 710px,#00c3ff 712px,#00cfff 714px,#00c2ff 716px,#00ceff 718px,#00ccff 720px,#00cfff 722px,#00cbff 724px,#00bdff 726px,#00d2ff 728px,#00c9ff 730px,#00b8ff 732px,#00cdff 734px)"></div><div style="top:123px;height:2px;background:linear-gradient(90deg,#00d5ff 0px,#00c8ff 2px,#00ceff 4px,#00d6ff 6px,#00beff 8px,#00cdff 10px,#00c1ff 12px,#00c5ff 14px,#00c0ff 16px,#00dcff 18px,#00d0ff 20px,#00b6ff 22px,#00c7ff 24px,#00d4ff 26px,#00cdff 28px,#00d0ff 30px,#00c5ff 32px,#00c5ff 34px,#00d4ff 36px,#00aeff 38px,#00c7ff 40px,#00c5ff 42px,#00c8ff 44px,#00c4ff 46px,#00bcff 48px,#00b7ff 50px,#00c1ff 52px,#00b0ff 54px,#00c7ff 56px,#00c8ff 58px,#00bbff 60px,#00c7ff 62px,#00d4ff 64px,#00cbff 66px,#00d5ff 68px,#00bbff 70px,#00cfff 72px,#00c6ff 74px,#00cbff 76px,#00c7ff 78px,#00d3ff 80px,#00a5ff 82px,#00b4ff 84px,#00ecff 86px,#00c2ff 88px,#00e1ff 90px,#10ffef 92px,#31ffce 94px,#62ff9d 96px,#40ffbf 98px,#69ff96 100px,#58ffa7 102px,#9fff60 104px,#9eff61 106px,#adff52 108px,#8eff71 110px,#e1ff1e 112px,#a7ff58 114px,#b6ff49 116px,#e6ff19 118px,#ebff14 120px,#ffae00 122px,#fffb00 124px,#f9ff06 125px,#ffbe00 183px,#ff9f00 184px,#c5ff3a 186px,#8bff74 188px,#5cffa3 190px,#79ff86 192px,#5effa1 194px,#5bffa4 196px,#55ffaa 198px,#4bffb4 200px,#1dffe2 202px,#32ffcd 204px,#19ffe6 206px,#00cbff 208px,#00ecff 210px,#08fff7 212px,#00e4ff 214px,#00e8ff 216px,#00feff 218px,#31ffce 220px,#2bffd4 222px,#13ffec 224px,#25ffda 226px,#aeff51 228px,#5effa1 230px,#71ff8e 232px,#7dff82 234px,#8aff75 236px,#9fff60 238px,#9aff65 240px,#9aff65 242px,#dcff23 244px,#ffd200 245.5px,#ffcc00 246px,#ffa200 246.5px,#ffc900 428px,#ff9f00 429px,#c7ff38 430px,#71ff8e 432px,#21ffde 434px,#79ff86 436px,#59ffa6 438px,#16ffe9 440px,#44ffbb 442px,#1fffe0 444px,#21ffde 446px,#25ffda 448px,#0afff5 450px,#00e7ff 452px,#00ceff 454px,#00dcff 456px,#00c0ff 458px,#00c8ff 460px,#00cbff 462px,#00cfff 464px,#00a2ff 466px,#00c2ff 468px,#00ceff 470px,#00c9ff 472px,#00d3ff 474px,#00cfff 476px,#00abff 478px,#00c9ff 480px,#00bfff 482px,#00d6ff 484px,#00beff 486px,#00b6ff 488px,#00bfff 490px,#00d7ff 492px,#00beff 494px,#00c6ff 496px,#00c4ff 498px,#00d0ff 500px,#00ceff 502px,#00beff 504px,#00c1ff 506px,#00bfff 508px,#00cbff 510px,#00d6ff 512px,#00cdff 514px,#00c7ff 516px,#00beff 518px,#00c0ff 520px,#00adff 522px,#00d6ff 524px,#00d2ff 526px,#2affd5 528px,#00f0ff 530px,#00eeff 532px,#18ffe7 534px,#2fffd0 536px,#63ff9c 538px,#53ffac 540px,#89ff76 542px,#7aff85 544px,#9cff63 546px,#e3ff1c 548px,#ffe800 550px,#e0ff1f 551.3px,#ffd400 609px,#ffcd00 610px,#ffbb00 612px,#a9ff56 614px,#adff52 616px,#6eff91 618px,#95ff6a 620px,#5fffa0 622px,#67ff98 624px,#6cff93 626px,#17ffe8 628px,#00f1ff 630px,#18ffe7 632px,#0efff1 634px,#05fffa 636px,#01fffe 638px,#00c5ff 640px,#00b8ff 642px,#00b9ff 644px,#00ccff 646px,#00dcff 648px,#00b6ff 650px,#00d2ff 652px,#00c7ff 654px,#00c2ff 656px,#00caff 658px,#00d1ff 660px,#00d5ff 662px,#00c6ff 664px,#00d3ff 666px,#00b6ff 668px,#00cbff 670px,#00bfff 672px,#00beff 674px,#00beff 676px,#00d5ff 678px,#00d6ff 680px,#00c1ff 682px,#00c3ff 684px,#00cbff 686px,#00b5ff 688px,#00c8ff 690px,#00caff 692px,#00e3ff 694px,#00d2ff 696px,#00d0ff 698px,#00c2ff 700px,#00b3ff 702px,#00beff 704px,#00dbff 706px,#00c8ff 708px,#00d2ff 710px,#00c1ff 712px,#00c6ff 714px,#00b7ff 716px,#00c7ff 718px,#00bdff 720px,#00b8ff 722px,#00ccff 724px,#00cbff 726px,#00d7ff 728px,#00c7ff 730px,#00d3ff 732px,#00c6ff 734px)"></div><div style="top:125px;height:1px;background:linear-gradient(90deg,#03fffc 0px,#08fff7 2px,#05fffa 4px,#1cffe3 6px,#1dffe2 8px,#17ffe8 10px,#05fffa 12px,#00fbff 14px,#16ffe9 16px,#2affd5 18px,#0dfff2 20px,#01fffe 22px,#02fffd 24px,#00f6ff 26px,#18ffe7 28px,#00ecff 30px,#15ffea 32px,#10ffef 34px,#09fff6 36px,#1fffe0 38px,#09fff6 40px,#20ffdf 42px,#04fffb 44px,#06fff9 46px,#19ffe6 48px,#16ffe9 50px,#15ffea 52px,#25ffda 54px,#14ffeb 56px,#2cffd3 58px,#08fff7 60px,#11ffee 62px,#0efff1 64px,#1effe1 66px,#11ffee 68px,#23ffdc 70px,#06fff9 72px,#33ffcc 74px,#0cfff3 76px,#0afff5 78px,#00f4ff 80px,#0efff1 82px,#29ffd6 84px,#2effd1 86px,#00e5ff 88px,#50ffaf 90px,#3cffc3 92px,#00f2ff 94px,#2fffd0 96px,#51ffae 98px,#00fbff 100px,#60ff9f 102px,#81ff7e 104px,#89ff76 106px,#68ff97 108px,#a4ff5b 110px,#ccff33 112px,#d6ff29 114px,#abff54 116px,#ffb400 118px,#d4ff2b 120px,#ffe800 122px,#ffee00 124px,#fffa00 125px,#fffd00 183px,#ffca00 184px,#d7ff28 186px,#ffe200 188px,#8cff73 190px,#6fff90 192px,#4effb1 194px,#77ff88 196px,#7aff85 198px,#3dffc2 200px,#3affc5 202px,#45ffba 204px,#1affe5 206px,#06fff9 208px,#23ffdc 210px,#35ffca 212px,#03fffc 214px,#00dbff 216px,#31ffce 218px,#0ffff0 220px,#8cff73 222px,#6eff91 224px,#8eff71 226px,#95ff6a 228px,#bfff40 230px,#c2ff3d 232px,#c1ff3e 234px,#c2ff3d 236px,#87ff78 238px,#f0ff0f 240px,#dbff24 242px,#ffe200 244px,#ff9200 245.5px,#daff25 246px,#f8ff07 246.5px,#ffc500 428px,#feff01 429px,#ccff33 430px,#89ff76 432px,#9dff62 434px,#65ff9a 436px,#66ff99 438px,#7fff80 440px,#56ffa9 442px,#45ffba 444px,#22ffdd 446px,#04fffb 448px,#00dcff 450px,#0efff1 452px,#2dffd2 454px,#36ffc9 456px,#00f7ff 458px,#11ffee 460px,#10ffef 462px,#12ffed 464px,#0bfff4 466px,#00f2ff 468px,#07fff8 470px,#07fff8 472px,#11ffee 474px,#0efff1 476px,#00f3ff 478px,#0afff5 480px,#09fff6 482px,#0bfff4 484px,#0dfff2 486px,#09fff6 488px,#16ffe9 490px,#0efff1 492px,#07fff8 494px,#07fff8 496px,#06fff9 498px,#13ffec 500px,#07fff8 502px,#01fffe 504px,#18ffe7 506px,#00feff 508px,#0afff5 510px,#24ffdb 512px,#22ffdd 514px,#09fff6 516px,#00fdff 518px,#2effd1 520px,#00fcff 522px,#00f0ff 524px,#1dffe2 526px,#06fff9 528px,#1effe1 530px,#01fffe 532px,#14ffeb 534px,#00e4ff 536px,#2fffd0 538px,#50ffaf 540px,#56ffa9 542px,#6eff91 544px,#f3ff0c 546px,#d0ff2f 548px,#edff12 550px,#ffe500 551.3px,#ffb100 609px,#ffda00 610px,#aeff51 612px,#a5ff5a 614px,#76ff89 616px,#91ff6e 618px,#56ffa9 620px,#b9ff46 622px,#76ff89 624px,#7fff80 626px,#5effa1 628px,#67ff98 630px,#3affc5 632px,#25ffda 634px,#08fff7 636px,#00feff 638px,#1bffe4 640px,#27ffd8 642px,#09fff6 644px,#00ecff 646px,#16ffe9 648px,#03fffc 650px,#08fff7 652px,#0dfff2 654px,#19ffe6 656px,#12ffed 658px,#07fff8 660px,#00f2ff 662px,#05fffa 664px,#15ffea 666px,#16ffe9 668px,#0dfff2 670px,#20ffdf 672px,#0cfff3 674px,#0afff5 676px,#15ffea 678px,#2dffd2 680px,#1dffe2 682px,#16ffe9 684px,#14ffeb 686px,#0ffff0 688px,#13ffec 690px,#19ffe6 692px,#10ffef 694px,#15ffea 696px,#00efff 698px,#11ffee 700px,#0efff1 702px,#1bffe4 704px,#00ffff 706px,#19ffe6 708px,#00feff 710px,#04fffb 712px,#1effe1 714px,#12ffed 716px,#08fff7 718px,#17ffe8 720px,#03fffc 722px,#09fff6 724px,#09fff6 726px,#07fff8 728px,#09fff6 730px,#22ffdd 732px,#0ffff0 734px)"></div><div style="top:126px;height:2px;background:linear-gradient(90deg,#07fff8 0px,#05fffa 2px,#18ffe7 4px,#06fff9 6px,#1effe1 8px,#16ffe9 10px,#06fff9 12px,#0efff1 14px,#09fff6 16px,#00fcff 18px,#0afff5 20px,#0ffff0 22px,#02fffd 24px,#07fff8 26px,#06fff9 28px,#0ffff0 30px,#1bffe4 32px,#16ffe9 34px,#0ffff0 36px,#24ffdb 38px,#13ffec 40px,#0dfff2 42px,#1fffe0 44px,#03fffc 46px,#08fff7 48px,#15ffea 50px,#00fcff 52px,#12ffed 54px,#0afff5 56px,#20ffdf 58px,#25ffda 60px,#02fffd 62px,#10ffef 64px,#09fff6 66px,#0bfff4 68px,#00f7ff 70px,#24ffdb 72px,#00ffff 74px,#08fff7 76px,#19ffe6 78px,#00ffff 80px,#00d8ff 82px,#05fffa 84px,#00f9ff 86px,#10ffef 88px,#10ffef 90px,#03fffc 92px,#11ffee 94px,#6fff90 96px,#62ff9d 98px,#68ff97 100px,#4dffb2 102px,#7aff85 104px,#97ff68 106px,#76ff89 108px,#8cff73 110px,#8eff71 112px,#b8ff47 114px,#e1ff1e 116px,#e0ff1f 118px,#efff10 120px,#ffc400 122px,#ffe300 124px,#a1ff5e 125px,#eeff11 183px,#ffb800 184px,#fff500 186px,#89ff76 188px,#bcff43 190px,#ebff14 192px,#b0ff4f 194px,#abff54 196px,#bcff43 198px,#a6ff59 200px,#65ff9a 202px,#72ff8d 204px,#43ffbc 206px,#56ffa9 208px,#47ffb8 210px,#39ffc6 212px,#22ffdd 214px,#00d3ff 216px,#16ffe9 218px,#0bfff4 220px,#43ffbc 222px,#56ffa9 224px,#43ffbc 226px,#2effd1 228px,#52ffad 230px,#6aff95 232px,#81ff7e 234px,#89ff76 236px,#63ff9c 238px,#8aff75 240px,#9cff63 242px,#fff100 244px,#efff10 245.5px,#b0ff4f 246px,#ffb900 246.5px,#ffb900 428px,#ffb700 429px,#f5ff0a 430px,#e7ff18 432px,#a9ff56 434px,#81ff7e 436px,#9eff61 438px,#57ffa8 440px,#7bff84 442px,#5dffa2 444px,#5affa5 446px,#6fff90 448px,#00fdff 450px,#11ffee 452px,#32ffcd 454px,#21ffde 456px,#0bfff4 458px,#00fcff 460px,#1effe1 462px,#0efff1 464px,#25ffda 466px,#16ffe9 468px,#21ffde 470px,#1dffe2 472px,#06fff9 474px,#18ffe7 476px,#18ffe7 478px,#0afff5 480px,#1fffe0 482px,#09fff6 484px,#1effe1 486px,#17ffe8 488px,#16ffe9 490px,#19ffe6 492px,#04fffb 494px,#0bfff4 496px,#00f6ff 498px,#2affd5 500px,#04fffb 502px,#22ffdd 504px,#0dfff2 506px,#13ffec 508px,#00ffff 510px,#25ffda 512px,#00ffff 514px,#00ffff 516px,#0cfff3 518px,#21ffde 520px,#10ffef 522px,#00fcff 524px,#16ffe9 526px,#30ffcf 528px,#01fffe 530px,#52ffad 532px,#26ffd9 534px,#54ffab 536px,#5cffa3 538px,#5cffa3 540px,#9eff61 542px,#5cffa3 544px,#afff50 546px,#acff53 548px,#ffd900 550px,#ceff31 551.3px,#ffcb00 609px,#ffd600 610px,#ffd700 612px,#acff53 614px,#e4ff1b 616px,#88ff77 618px,#6fff90 620px,#52ffad 622px,#42ffbd 624px,#0bfff4 626px,#30ffcf 628px,#00e7ff 630px,#0efff1 632px,#00fcff 634px,#06fff9 636px,#00f7ff 638px,#0afff5 640px,#16ffe9 642px,#14ffeb 644px,#24ffdb 646px,#10ffef 648px,#17ffe8 650px,#0efff1 652px,#1bffe4 654px,#1dffe2 656px,#1effe1 658px,#05fffa 660px,#00feff 662px,#11ffee 664px,#07fff8 666px,#12ffed 668px,#15ffea 670px,#0efff1 672px,#14ffeb 674px,#0efff1 676px,#04fffb 678px,#14ffeb 680px,#06fff9 682px,#0dfff2 684px,#13ffec 686px,#00fdff 688px,#1dffe2 690px,#20ffdf 692px,#08fff7 694px,#0dfff2 696px,#18ffe7 698px,#24ffdb 700px,#1affe5 702px,#08fff7 704px,#13ffec 706px,#12ffed 708px,#1cffe3 710px,#18ffe7 712px,#00f4ff 714px,#17ffe8 716px,#06fff9 718px,#0dfff2 720px,#00fbff 722px,#00feff 724px,#04fffb 726px,#08fff7 728px,#1affe5 730px,#0afff5 732px,#15ffea 734px)"></div><div style="top:128px;height:1px;background:linear-gradient(90deg,#25ffda 0px,#0bfff4 2px,#00fbff 4px,#08fff7 6px,#0ffff0 8px,#0dfff2 10px,#09fff6 12px,#18ffe7 14px,#16ffe9 16px,#06fff9 18px,#18ffe7 20px,#14ffeb 22px,#12ffed 24px,#17ffe8 26px,#03fffc 28px,#19ffe6 30px,#1dffe2 32px,#00fcff 34px,#15ffea 36px,#09fff6 38px,#17ffe8 40px,#15ffea 42px,#11ffee 44px,#18ffe7 46px,#15ffea 48px,#0efff1 50px,#13ffec 52px,#0afff5 54px,#27ffd8 56px,#0dfff2 58px,#03fffc 60px,#15ffea 62px,#11ffee 64px,#08fff7 66px,#0dfff2 68px,#19ffe6 70px,#13ffec 72px,#09fff6 74px,#12ffed 76px,#06fff9 78px,#04fffb 80px,#00ffff 82px,#00fbff 84px,#0ffff0 86px,#00ffff 88px,#33ffcc 90px,#36ffc9 92px,#38ffc7 94px,#1dffe2 96px,#52ffad 98px,#58ffa7 100px,#7fff80 102px,#9fff60 104px,#a1ff5e 106px,#9dff62 108px,#b0ff4f 110px,#e1ff1e 112px,#c5ff3a 114px,#d9ff26 116px,#bfff40 118px,#f2ff0d 120px,#ffc200 122px,#b1ff4e 124px,#ff9600 125px,#ffeb00 183px,#ff8a00 184px,#abff54 186px,#eeff11 188px,#9aff65 190px,#a8ff57 192px,#6eff91 194px,#5dffa2 196px,#35ffca 198px,#8cff73 200px,#37ffc8 202px,#20ffdf 204px,#08fff7 206px,#26ffd9 208px,#48ffb7 210px,#0bfff4 212px,#00fbff 214px,#15ffea 216px,#1effe1 218px,#3affc5 220px,#33ffcc 222px,#80ff7f 224px,#a2ff5d 226px,#53ffac 228px,#42ffbd 230px,#6dff92 232px,#6aff95 234px,#8cff73 236px,#5bffa4 238px,#80ff7f 240px,#a0ff5f 242px,#daff25 244px,#ffc000 245.5px,#fffa00 246px,#ffd400 246.5px,#ceff31 428px,#ffca00 429px,#e8ff17 430px,#47ffb8 432px,#7aff85 434px,#4bffb4 436px,#52ffad 438px,#26ffd9 440px,#5dffa2 442px,#50ffaf 444px,#4dffb2 446px,#2fffd0 448px,#26ffd9 450px,#1bffe4 452px,#2bffd4 454px,#0dfff2 456px,#05fffa 458px,#00f9ff 460px,#1dffe2 462px,#09fff6 464px,#27ffd8 466px,#1fffe0 468px,#00faff 470px,#17ffe8 472px,#06fff9 474px,#18ffe7 476px,#0efff1 478px,#0cfff3 480px,#1cffe3 482px,#05fffa 484px,#0efff1 486px,#05fffa 488px,#1dffe2 490px,#1cffe3 492px,#06fff9 494px,#08fff7 496px,#19ffe6 498px,#1bffe4 500px,#05fffa 502px,#09fff6 504px,#25ffda 506px,#08fff7 508px,#20ffdf 510px,#14ffeb 512px,#16ffe9 514px,#03fffc 516px,#24ffdb 518px,#2cffd3 520px,#14ffeb 522px,#3cffc3 524px,#17ffe8 526px,#00fbff 528px,#3bffc4 530px,#26ffd9 532px,#67ff98 534px,#37ffc8 536px,#1affe5 538px,#63ff9c 540px,#25ffda 542px,#9eff61 544px,#a1ff5e 546px,#6cff93 548px,#fffd00 550px,#f3ff0c 551.3px,#cdff32 609px,#ffe900 610px,#ceff31 612px,#a7ff58 614px,#6eff91 616px,#b6ff49 618px,#caff35 620px,#81ff7e 622px,#41ffbe 624px,#4fffb0 626px,#42ffbd 628px,#19ffe6 630px,#1effe1 632px,#44ffbb 634px,#00f5ff 636px,#1effe1 638px,#0bfff4 640px,#00f4ff 642px,#0efff1 644px,#1dffe2 646px,#0afff5 648px,#02fffd 650px,#0dfff2 652px,#0ffff0 654px,#01fffe 656px,#27ffd8 658px,#1bffe4 660px,#2affd5 662px,#1cffe3 664px,#02fffd 666px,#0cfff3 668px,#00fcff 670px,#12ffed 672px,#0efff1 674px,#24ffdb 676px,#00f3ff 678px,#06fff9 680px,#00f9ff 682px,#13ffec 684px,#01fffe 686px,#08fff7 688px,#23ffdc 690px,#10ffef 692px,#0ffff0 694px,#07fff8 696px,#17ffe8 698px,#12ffed 700px,#0bfff4 702px,#18ffe7 704px,#0dfff2 706px,#10ffef 708px,#04fffb 710px,#0dfff2 712px,#1dffe2 714px,#0cfff3 716px,#12ffed 718px,#08fff7 720px,#06fff9 722px,#07fff8 724px,#11ffee 726px,#07fff8 728px,#00f9ff 730px,#0bfff4 732px,#10ffef 734px)"></div><div style="top:129px;height:2px;background:linear-gradient(90deg,#00e2ff 0px,#00ceff 2px,#00ceff 4px,#00beff 6px,#00c8ff 8px,#00c5ff 10px,#00dcff 12px,#00c6ff 14px,#00ccff 16px,#00cdff 18px,#00e3ff 20px,#00beff 22px,#00c1ff 24px,#00b9ff 26px,#00d2ff 28px,#00deff 30px,#00caff 32px,#00d1ff 34px,#00d3ff 36px,#00cfff 38px,#00d7ff 40px,#00c6ff 42px,#00d7ff 44px,#00beff 46px,#00d4ff 48px,#00e3ff 50px,#00d0ff 52px,#00d0ff 54px,#00eeff 56px,#00ecff 58px,#00d9ff 60px,#00dbff 62px,#00d0ff 64px,#00c2ff 66px,#00dfff 68px,#00dcff 70px,#00edff 72px,#00dcff 74px,#00c5ff 76px,#00bdff 78px,#00f2ff 80px,#00e3ff 82px,#00beff 84px,#00bfff 86px,#00baff 88px,#00b9ff 90px,#0bfff4 92px,#00feff 94px,#2effd1 96px,#33ffcc 98px,#09fff6 100px,#3effc1 102px,#3dffc2 104px,#91ff6e 106px,#8cff73 108px,#78ff87 110px,#d9ff26 112px,#ffe600 114px,#a0ff5f 116px,#93ff6c 118px,#fffb00 120px,#ffbf00 122px,#aeff51 124px,#e4ff1b 125px,#f3ff0c 183px,#ff8f00 184px,#fff600 186px,#a6ff59 188px,#93ff6c 190px,#70ff8f 192px,#8bff74 194px,#c6ff39 196px,#99ff66 198px,#6eff91 200px,#18ffe7 202px,#54ffab 204px,#09fff6 206px,#00f7ff 208px,#1cffe3 210px,#00e4ff 212px,#00edff 214px,#00fdff 216px,#00f3ff 218px,#20ffdf 220px,#3fffc0 222px,#3affc5 224px,#23ffdc 226px,#89ff76 228px,#54ffab 230px,#55ffaa 232px,#67ff98 234px,#a9ff56 236px,#95ff6a 238px,#e9ff16 240px,#74ff8b 242px,#d9ff26 244px,#ffc700 245.5px,#e7ff18 246px,#dcff23 246.5px,#eeff11 428px,#fff400 429px,#d2ff2d 430px,#99ff66 432px,#7dff82 434px,#47ffb8 436px,#1effe1 438px,#75ff8a 440px,#69ff96 442px,#27ffd8 444px,#33ffcc 446px,#17ffe8 448px,#00feff 450px,#00c0ff 452px,#00d5ff 454px,#00c7ff 456px,#00b1ff 458px,#00b2ff 460px,#00dbff 462px,#00d0ff 464px,#00cfff 466px,#00ebff 468px,#00d8ff 470px,#00d0ff 472px,#00ceff 474px,#00c3ff 476px,#00efff 478px,#00e0ff 480px,#00e2ff 482px,#00d5ff 484px,#00dbff 486px,#00eeff 488px,#00f1ff 490px,#00c4ff 492px,#00dfff 494px,#00d1ff 496px,#00d6ff 498px,#00c9ff 500px,#00ccff 502px,#00c3ff 504px,#00c9ff 506px,#00ceff 508px,#00cdff 510px,#00f3ff 512px,#00d9ff 514px,#00d8ff 516px,#00cfff 518px,#00cbff 520px,#00ccff 522px,#00d7ff 524px,#00d4ff 526px,#16ffe9 528px,#17ffe8 530px,#00fcff 532px,#56ffa9 534px,#24ffdb 536px,#20ffdf 538px,#b3ff4c 540px,#8fff70 542px,#b8ff47 544px,#9eff61 546px,#c7ff38 548px,#e8ff17 550px,#fffb00 551.3px,#fffe00 609px,#ecff13 610px,#ffee00 612px,#5cffa3 614px,#96ff69 616px,#35ffca 618px,#54ffab 620px,#1cffe3 622px,#1affe5 624px,#13ffec 626px,#00f3ff 628px,#00eeff 630px,#00d6ff 632px,#00b7ff 634px,#00ccff 636px,#00d3ff 638px,#00e5ff 640px,#00daff 642px,#00bdff 644px,#00beff 646px,#00d2ff 648px,#00c8ff 650px,#00e9ff 652px,#00e7ff 654px,#00d1ff 656px,#00ceff 658px,#00ddff 660px,#00c9ff 662px,#00c8ff 664px,#00d8ff 666px,#00d0ff 668px,#00c4ff 670px,#00d3ff 672px,#00deff 674px,#00dfff 676px,#00e9ff 678px,#00d8ff 680px,#00d0ff 682px,#00d7ff 684px,#00caff 686px,#00d5ff 688px,#00cbff 690px,#00c2ff 692px,#00d3ff 694px,#00dbff 696px,#00d1ff 698px,#00c8ff 700px,#00dbff 702px,#00d7ff 704px,#00d4ff 706px,#00d0ff 708px,#00beff 710px,#00e1ff 712px,#00c0ff 714px,#00d9ff 716px,#00ccff 718px,#00beff 720px,#00ddff 722px,#00d8ff 724px,#00daff 726px,#00c6ff 728px,#00e3ff 730px,#00c6ff 732px,#00d0ff 734px)"></div><div style="top:131px;height:1px;background:linear-gradient(90deg,#00ddff 0px,#00e5ff 2px,#00deff 4px,#00dbff 6px,#00dcff 8px,#00cfff 10px,#00ccff 12px,#00d3ff 14px,#00dfff 16px,#00caff 18px,#00baff 20px,#00e2ff 22px,#00d1ff 24px,#00ddff 26px,#00beff 28px,#00b2ff 30px,#00ceff 32px,#00cdff 34px,#00dbff 36px,#00d6ff 38px,#00d4ff 40px,#00d3ff 42px,#00cfff 44px,#00caff 46px,#00bfff 48px,#00e1ff 50px,#00dcff 52px,#00c7ff 54px,#00ceff 56px,#00ccff 58px,#00c7ff 60px,#00c1ff 62px,#00b9ff 64px,#00d7ff 66px,#00c7ff 68px,#00e5ff 70px,#00c7ff 72px,#00e1ff 74px,#00e4ff 76px,#00d5ff 78px,#00ccff 80px,#00c2ff 82px,#00e4ff 84px,#00ceff 86px,#00b7ff 88px,#00d8ff 90px,#0bfff4 92px,#00faff 94px,#00e6ff 96px,#07fff8 98px,#5effa1 100px,#42ffbd 102px,#34ffcb 104px,#68ff97 106px,#7bff84 108px,#91ff6e 110px,#79ff86 112px,#a2ff5d 114px,#bfff40 116px,#d7ff28 118px,#f5ff0a 120px,#ffd700 122px,#faff05 124px,#e2ff1d 125px,#f2ff0d 183px,#ff7d00 184px,#ecff13 186px,#bbff44 188px,#d9ff26 190px,#fdff02 192px,#ecff13 194px,#85ff7a 196px,#83ff7c 198px,#4cffb3 200px,#76ff89 202px,#69ff96 204px,#26ffd9 206px,#00f6ff 208px,#00f4ff 210px,#00fdff 212px,#00bdff 214px,#10ffef 216px,#0afff5 218px,#0efff1 220px,#31ffce 222px,#25ffda 224px,#69ff96 226px,#57ffa8 228px,#80ff7f 230px,#acff53 232px,#70ff8f 234px,#84ff7b 236px,#2bffd4 238px,#b3ff4c 240px,#bcff43 242px,#f7ff08 244px,#ffe600 245.5px,#daff25 246px,#b3ff4c 246.5px,#ffe300 428px,#fff800 429px,#f0ff0f 430px,#abff54 432px,#94ff6b 434px,#4bffb4 436px,#78ff87 438px,#5cffa3 440px,#2cffd3 442px,#04fffb 444px,#0afff5 446px,#00d8ff 448px,#00f0ff 450px,#00ccff 452px,#04fffb 454px,#00d8ff 456px,#00c5ff 458px,#00d0ff 460px,#00d2ff 462px,#00d4ff 464px,#00e0ff 466px,#00cfff 468px,#00b9ff 470px,#00d2ff 472px,#00bbff 474px,#00d0ff 476px,#00d5ff 478px,#00d3ff 480px,#00bfff 482px,#00c7ff 484px,#00e0ff 486px,#00ceff 488px,#00c0ff 490px,#00caff 492px,#00cdff 494px,#00c9ff 496px,#00dbff 498px,#00d4ff 500px,#00aeff 502px,#00cdff 504px,#00e0ff 506px,#00e2ff 508px,#00c7ff 510px,#00cfff 512px,#00c3ff 514px,#00e8ff 516px,#00ddff 518px,#00aaff 520px,#00caff 522px,#00f0ff 524px,#00f3ff 526px,#00ffff 528px,#00efff 530px,#04fffb 532px,#98ff67 534px,#50ffaf 536px,#42ffbd 538px,#69ff96 540px,#dbff24 542px,#d7ff28 544px,#d5ff2a 546px,#ccff33 548px,#ffc600 550px,#ffab00 551.3px,#ffe900 609px,#ffdd00 610px,#f0ff0f 612px,#b6ff49 614px,#80ff7f 616px,#37ffc8 618px,#bcff43 620px,#88ff77 622px,#46ffb9 624px,#5bffa4 626px,#5effa1 628px,#54ffab 630px,#1bffe4 632px,#06fff9 634px,#00f8ff 636px,#00f6ff 638px,#00a4ff 640px,#00f4ff 642px,#00c9ff 644px,#00d8ff 646px,#00c8ff 648px,#00cdff 650px,#00d7ff 652px,#00caff 654px,#00d3ff 656px,#00ceff 658px,#00daff 660px,#00d8ff 662px,#00c4ff 664px,#00cbff 666px,#00d7ff 668px,#00deff 670px,#00d2ff 672px,#00cdff 674px,#00cbff 676px,#00c8ff 678px,#00d4ff 680px,#00dbff 682px,#00c9ff 684px,#00d4ff 686px,#00bdff 688px,#00cbff 690px,#00cbff 692px,#00d9ff 694px,#00bbff 696px,#00ceff 698px,#00c8ff 700px,#00ceff 702px,#00bdff 704px,#00dfff 706px,#00d3ff 708px,#00c8ff 710px,#00d3ff 712px,#00b1ff 714px,#00d4ff 716px,#00c9ff 718px,#00c4ff 720px,#00d8ff 722px,#00c8ff 724px,#00e8ff 726px,#00d0ff 728px,#00c7ff 730px,#00ccff 732px,#00e2ff 734px)"></div><div style="top:132px;height:2px;background:linear-gradient(90deg,#10ffef 0px,#0dfff2 2px,#00f5ff 4px,#00e4ff 6px,#00fdff 8px,#01fffe 10px,#03fffc 12px,#00fbff 14px,#00fdff 16px,#14ffeb 18px,#06fff9 20px,#0bfff4 22px,#00faff 24px,#00f9ff 26px,#0cfff3 28px,#00edff 30px,#02fffd 32px,#17ffe8 34px,#02fffd 36px,#06fff9 38px,#05fffa 40px,#00ffff 42px,#04fffb 44px,#1bffe4 46px,#00f6ff 48px,#0ffff0 50px,#00f8ff 52px,#05fffa 54px,#06fff9 56px,#13ffec 58px,#12ffed 60px,#00e9ff 62px,#05fffa 64px,#16ffe9 66px,#0cfff3 68px,#02fffd 70px,#00edff 72px,#00ffff 74px,#2bffd4 76px,#14ffeb 78px,#19ffe6 80px,#00cbff 82px,#00ffff 84px,#01fffe 86px,#12ffed 88px,#1dffe2 90px,#24ffdb 92px,#18ffe7 94px,#00e9ff 96px,#00e2ff 98px,#1effe1 100px,#00fcff 102px,#42ffbd 104px,#89ff76 106px,#3cffc3 108px,#90ff6f 110px,#9cff63 112px,#89ff76 114px,#b9ff46 116px,#adff52 118px,#f4ff0b 120px,#ffb700 122px,#deff21 124px,#ffe800 125px,#fff300 183px,#ff8900 184px,#ffd200 186px,#c0ff3f 188px,#96ff69 190px,#c0ff3f 192px,#9fff60 194px,#a6ff59 196px,#b6ff49 198px,#8fff70 200px,#8fff70 202px,#3bffc4 204px,#4fffb0 206px,#3dffc2 208px,#36ffc9 210px,#1cffe3 212px,#04fffb 214px,#00eeff 216px,#32ffcd 218px,#4effb1 220px,#42ffbd 222px,#5fffa0 224px,#57ffa8 226px,#56ffa9 228px,#6cff93 230px,#59ffa6 232px,#7bff84 234px,#4effb1 236px,#a7ff58 238px,#e6ff19 240px,#e0ff1f 242px,#f5ff0a 244px,#ffd700 245.5px,#b6ff49 246px,#fff000 246.5px,#ffb400 428px,#ffc800 429px,#a1ff5e 430px,#60ff9f 432px,#91ff6e 434px,#3cffc3 436px,#24ffdb 438px,#6eff91 440px,#04fffb 442px,#28ffd7 444px,#28ffd7 446px,#22ffdd 448px,#00e1ff 450px,#0bfff4 452px,#24ffdb 454px,#00dfff 456px,#00deff 458px,#00ffff 460px,#00fcff 462px,#11ffee 464px,#1affe5 466px,#00fbff 468px,#0afff5 470px,#00ecff 472px,#0efff1 474px,#03fffc 476px,#09fff6 478px,#16ffe9 480px,#0dfff2 482px,#0cfff3 484px,#04fffb 486px,#01fffe 488px,#03fffc 490px,#1bffe4 492px,#09fff6 494px,#0cfff3 496px,#16ffe9 498px,#20ffdf 500px,#00f5ff 502px,#0dfff2 504px,#00f9ff 506px,#09fff6 508px,#02fffd 510px,#0ffff0 512px,#04fffb 514px,#00fcff 516px,#02fffd 518px,#26ffd9 520px,#00f0ff 522px,#02fffd 524px,#00f7ff 526px,#4dffb2 528px,#1dffe2 530px,#00deff 532px,#26ffd9 534px,#26ffd9 536px,#67ff98 538px,#7bff84 540px,#73ff8c 542px,#78ff87 544px,#90ff6f 546px,#ffd700 548px,#fffa00 550px,#fff900 551.3px,#ffdf00 609px,#ffd400 610px,#ffe300 612px,#9aff65 614px,#77ff88 616px,#afff50 618px,#8cff73 620px,#74ff8b 622px,#46ffb9 624px,#43ffbc 626px,#59ffa6 628px,#3effc1 630px,#4bffb4 632px,#11ffee 634px,#00deff 636px,#04fffb 638px,#0dfff2 640px,#0bfff4 642px,#02fffd 644px,#00e8ff 646px,#0bfff4 648px,#00daff 650px,#0bfff4 652px,#00f9ff 654px,#12ffed 656px,#00f0ff 658px,#0efff1 660px,#00f5ff 662px,#0efff1 664px,#02fffd 666px,#03fffc 668px,#08fff7 670px,#02fffd 672px,#00feff 674px,#00eeff 676px,#0efff1 678px,#02fffd 680px,#17ffe8 682px,#13ffec 684px,#0afff5 686px,#20ffdf 688px,#0cfff3 690px,#0efff1 692px,#0dfff2 694px,#00efff 696px,#00fcff 698px,#0dfff2 700px,#00f7ff 702px,#12ffed 704px,#01fffe 706px,#0efff1 708px,#02fffd 710px,#08fff7 712px,#04fffb 714px,#0dfff2 716px,#00ebff 718px,#02fffd 720px,#00fdff 722px,#00faff 724px,#07fff8 726px,#00f8ff 728px,#01fffe 730px,#06fff9 732px,#0ffff0 734px)"></div><div style="top:134px;height:1px;background:linear-gradient(90deg,#000080 0px,#000080 732px)"></div></div>
<svg width="800" height="500" viewBox="0 0 800 500"><defs><clipPath id="cu"><rect x="48" y="51" width="732" height="157"/></clipPath><linearGradient id="cb" x1="0" x2="1" y1="0" y2="0"><stop offset="0.00" stop-color="#000080"/><stop offset="0.02" stop-color="#000094"/><stop offset="0.04" stop-color="#0000a8"/><stop offset="0.06" stop-color="#0000bd"/><stop offset="0.08" stop-color="#0000d1"/><stop offset="0.10" stop-color="#0000e6"/><stop offset="0.12" stop-color="#0000fa"/><stop offset="0.14" stop-color="#000fff"/><stop offset="0.16" stop-color="#0024ff"/><stop offset="0.18" stop-color="#0038ff"/><stop offset="0.20" stop-color="#004dff"/><stop offset="0.22" stop-color="#0061ff"/><stop offset="0.24" stop-color="#0075ff"/><stop offset="0.26" stop-color="#008aff"/><stop offset="0.28" stop-color="#009eff"/><stop offset="0.30" stop-color="#00b2ff"/><stop offset="0.32" stop-color="#00c7ff"/><stop offset="0.34" stop-color="#00dbff"/><stop offset="0.36" stop-color="#00f0ff"/><stop offset="0.38" stop-color="#05fffa"/><stop offset="0.40" stop-color="#1affe5"/><stop offset="0.42" stop-color="#2effd1"/><stop offset="0.44" stop-color="#42ffbd"/><stop offset="0.46" stop-color="#57ffa8"/><stop offset="0.48" stop-color="#6bff94"/><stop offset="0.50" stop-color="#80ff80"/><stop offset="0.52" stop-color="#94ff6b"/><stop offset="0.54" stop-color="#a8ff57"/><stop offset="0.56" stop-color="#bdff42"/><stop offset="0.58" stop-color="#d1ff2e"/><stop offset="0.60" stop-color="#e5ff1a"/><stop offset="0.62" stop-color="#faff05"/><stop offset="0.64" stop-color="#fff000"/><stop offset="0.66" stop-color="#ffdb00"/><stop offset="0.68" stop-color="#ffc700"/><stop offset="0.70" stop-color="#ffb300"/><stop offset="0.72" stop-color="#ff9e00"/><stop offset="0.74" stop-color="#ff8a00"/><stop offset="0.76" stop-color="#ff7500"/><stop offset="0.78" stop-color="#ff6100"/><stop offset="0.80" stop-color="#ff4c00"/><stop offset="0.82" stop-color="#ff3800"/><stop offset="0.84" stop-color="#ff2400"/><stop offset="0.86" stop-color="#ff0f00"/><stop offset="0.88" stop-color="#fa0000"/><stop offset="0.90" stop-color="#e50000"/><stop offset="0.92" stop-color="#d10000"/><stop offset="0.94" stop-color="#bd0000"/><stop offset="0.96" stop-color="#a80000"/><stop offset="0.98" stop-color="#940000"/><stop offset="1.00" stop-color="#800000"/></linearGradient><pattern id="sp" width="67" height="22" patternUnits="userSpaceOnUse" x="0" y="298"><rect width="67" height="22" fill="#ff5600"/><path d="M0 0.00h1v1.467h-1zM4 0.00h1v1.467h-1zM7 0.00h1v1.467h-1zM9 0.00h1v1.467h-1zM20 0.00h1v1.467h-1zM28 0.00h1v1.467h-1zM31 0.00h1v1.467h-1zM34 0.00h1v1.467h-1zM39 0.00h1v1.467h-1zM47 0.00h1v1.467h-1zM51 0.00h1v1.467h-1zM59 0.00h1v1.467h-1zM60 0.00h1v1.467h-1zM65 0.00h1v1.467h-1zM0 1.47h1v1.467h-1zM7 1.47h1v1.467h-1zM9 1.47h1v1.467h-1zM10 1.47h1v1.467h-1zM11 1.47h1v1.467h-1zM13 1.47h1v1.467h-1zM19 1.47h1v1.467h-1zM22 1.47h1v1.467h-1zM30 1.47h1v1.467h-1zM32 1.47h1v1.467h-1zM37 1.47h1v1.467h-1zM39 1.47h1v1.467h-1zM48 1.47h1v1.467h-1zM66 1.47h1v1.467h-1zM3 2.93h1v1.467h-1zM4 2.93h1v1.467h-1zM9 2.93h1v1.467h-1zM12 2.93h1v1.467h-1zM18 2.93h1v1.467h-1zM23 2.93h1v1.467h-1zM26 2.93h1v1.467h-1zM28 2.93h1v1.467h-1zM32 2.93h1v1.467h-1zM33 2.93h1v1.467h-1zM47 2.93h1v1.467h-1zM52 2.93h1v1.467h-1zM1 4.40h1v1.467h-1zM9 4.40h1v1.467h-1zM13 4.40h1v1.467h-1zM14 4.40h1v1.467h-1zM20 4.40h1v1.467h-1zM24 4.40h1v1.467h-1zM31 4.40h1v1.467h-1zM33 4.40h1v1.467h-1zM37 4.40h1v1.467h-1zM40 4.40h1v1.467h-1zM55 4.40h1v1.467h-1zM56 4.40h1v1.467h-1zM57 4.40h1v1.467h-1zM62 4.40h1v1.467h-1zM66 4.40h1v1.467h-1zM8 5.87h1v1.467h-1zM12 5.87h1v1.467h-1zM15 5.87h1v1.467h-1zM16 5.87h1v1.467h-1zM24 5.87h1v1.467h-1zM25 5.87h1v1.467h-1zM34 5.87h1v1.467h-1zM36 5.87h1v1.467h-1zM40 5.87h1v1.467h-1zM46 5.87h1v1.467h-1zM48 5.87h1v1.467h-1zM52 5.87h1v1.467h-1zM57 5.87h1v1.467h-1zM60 5.87h1v1.467h-1zM66 5.87h1v1.467h-1zM9 7.33h1v1.467h-1zM17 7.33h1v1.467h-1zM18 7.33h1v1.467h-1zM24 7.33h1v1.467h-1zM31 7.33h1v1.467h-1zM36 7.33h1v1.467h-1zM38 7.33h1v1.467h-1zM39 7.33h1v1.467h-1zM42 7.33h1v1.467h-1zM43 7.33h1v1.467h-1zM45 7.33h1v1.467h-1zM46 7.33h1v1.467h-1zM50 7.33h1v1.467h-1zM58 7.33h1v1.467h-1zM59 7.33h1v1.467h-1zM3 8.80h1v1.467h-1zM4 8.80h1v1.467h-1zM10 8.80h1v1.467h-1zM11 8.80h1v1.467h-1zM20 8.80h1v1.467h-1zM21 8.80h1v1.467h-1zM22 8.80h1v1.467h-1zM23 8.80h1v1.467h-1zM28 8.80h1v1.467h-1zM29 8.80h1v1.467h-1zM30 8.80h1v1.467h-1zM45 8.80h1v1.467h-1zM47 8.80h1v1.467h-1zM52 8.80h1v1.467h-1zM57 8.80h1v1.467h-1zM58 8.80h1v1.467h-1zM60 8.80h1v1.467h-1zM61 8.80h1v1.467h-1zM65 8.80h1v1.467h-1zM2 10.27h1v1.467h-1zM3 10.27h1v1.467h-1zM6 10.27h1v1.467h-1zM12 10.27h1v1.467h-1zM23 10.27h1v1.467h-1zM24 10.27h1v1.467h-1zM26 10.27h1v1.467h-1zM28 10.27h1v1.467h-1zM37 10.27h1v1.467h-1zM39 10.27h1v1.467h-1zM44 10.27h1v1.467h-1zM51 10.27h1v1.467h-1zM53 10.27h1v1.467h-1zM54 10.27h1v1.467h-1zM59 10.27h1v1.467h-1zM62 10.27h1v1.467h-1zM64 10.27h1v1.467h-1zM65 10.27h1v1.467h-1zM0 11.73h1v1.467h-1zM2 11.73h1v1.467h-1zM3 11.73h1v1.467h-1zM9 11.73h1v1.467h-1zM11 11.73h1v1.467h-1zM12 11.73h1v1.467h-1zM27 11.73h1v1.467h-1zM31 11.73h1v1.467h-1zM32 11.73h1v1.467h-1zM38 11.73h1v1.467h-1zM42 11.73h1v1.467h-1zM44 11.73h1v1.467h-1zM51 11.73h1v1.467h-1zM54 11.73h1v1.467h-1zM56 11.73h1v1.467h-1zM57 11.73h1v1.467h-1zM62 11.73h1v1.467h-1zM63 11.73h1v1.467h-1zM6 13.20h1v1.467h-1zM8 13.20h1v1.467h-1zM10 13.20h1v1.467h-1zM12 13.20h1v1.467h-1zM13 13.20h1v1.467h-1zM17 13.20h1v1.467h-1zM20 13.20h1v1.467h-1zM26 13.20h1v1.467h-1zM27 13.20h1v1.467h-1zM32 13.20h1v1.467h-1zM34 13.20h1v1.467h-1zM39 13.20h1v1.467h-1zM40 13.20h1v1.467h-1zM45 13.20h1v1.467h-1zM47 13.20h1v1.467h-1zM50 13.20h1v1.467h-1zM51 13.20h1v1.467h-1zM54 13.20h1v1.467h-1zM58 13.20h1v1.467h-1zM59 13.20h1v1.467h-1zM61 13.20h1v1.467h-1zM62 13.20h1v1.467h-1zM65 13.20h1v1.467h-1zM4 14.67h1v1.467h-1zM10 14.67h1v1.467h-1zM18 14.67h1v1.467h-1zM25 14.67h1v1.467h-1zM28 14.67h1v1.467h-1zM29 14.67h1v1.467h-1zM30 14.67h1v1.467h-1zM39 14.67h1v1.467h-1zM40 14.67h1v1.467h-1zM42 14.67h1v1.467h-1zM48 14.67h1v1.467h-1zM51 14.67h1v1.467h-1zM53 14.67h1v1.467h-1zM64 14.67h1v1.467h-1zM2 16.13h1v1.467h-1zM6 16.13h1v1.467h-1zM12 16.13h1v1.467h-1zM20 16.13h1v1.467h-1zM21 16.13h1v1.467h-1zM27 16.13h1v1.467h-1zM32 16.13h1v1.467h-1zM37 16.13h1v1.467h-1zM39 16.13h1v1.467h-1zM40 16.13h1v1.467h-1zM44 16.13h1v1.467h-1zM58 16.13h1v1.467h-1zM60 16.13h1v1.467h-1zM63 16.13h1v1.467h-1zM1 17.60h1v1.467h-1zM2 17.60h1v1.467h-1zM17 17.60h1v1.467h-1zM19 17.60h1v1.467h-1zM25 17.60h1v1.467h-1zM34 17.60h1v1.467h-1zM35 17.60h1v1.467h-1zM36 17.60h1v1.467h-1zM37 17.60h1v1.467h-1zM38 17.60h1v1.467h-1zM40 17.60h1v1.467h-1zM50 17.60h1v1.467h-1zM54 17.60h1v1.467h-1zM0 19.07h1v1.467h-1zM3 19.07h1v1.467h-1zM7 19.07h1v1.467h-1zM11 19.07h1v1.467h-1zM16 19.07h1v1.467h-1zM18 19.07h1v1.467h-1zM20 19.07h1v1.467h-1zM26 19.07h1v1.467h-1zM31 19.07h1v1.467h-1zM33 19.07h1v1.467h-1zM36 19.07h1v1.467h-1zM44 19.07h1v1.467h-1zM51 19.07h1v1.467h-1zM52 19.07h1v1.467h-1zM54 19.07h1v1.467h-1zM61 19.07h1v1.467h-1zM66 19.07h1v1.467h-1zM3 20.53h1v1.467h-1zM7 20.53h1v1.467h-1zM9 20.53h1v1.467h-1zM11 20.53h1v1.467h-1zM41 20.53h1v1.467h-1zM42 20.53h1v1.467h-1zM49 20.53h1v1.467h-1zM52 20.53h1v1.467h-1zM55 20.53h1v1.467h-1zM58 20.53h1v1.467h-1zM62 20.53h1v1.467h-1z" fill="#ff4400"/><path d="M3 0.00h1v1.467h-1zM8 0.00h1v1.467h-1zM13 0.00h1v1.467h-1zM14 0.00h1v1.467h-1zM17 0.00h1v1.467h-1zM18 0.00h1v1.467h-1zM25 0.00h1v1.467h-1zM27 0.00h1v1.467h-1zM29 0.00h1v1.467h-1zM32 0.00h1v1.467h-1zM35 0.00h1v1.467h-1zM37 0.00h1v1.467h-1zM38 0.00h1v1.467h-1zM41 0.00h1v1.467h-1zM42 0.00h1v1.467h-1zM45 0.00h1v1.467h-1zM52 0.00h1v1.467h-1zM58 0.00h1v1.467h-1zM61 0.00h1v1.467h-1zM62 0.00h1v1.467h-1zM2 1.47h1v1.467h-1zM3 1.47h1v1.467h-1zM5 1.47h1v1.467h-1zM6 1.47h1v1.467h-1zM18 1.47h1v1.467h-1zM21 1.47h1v1.467h-1zM23 1.47h1v1.467h-1zM25 1.47h1v1.467h-1zM26 1.47h1v1.467h-1zM27 1.47h1v1.467h-1zM35 1.47h1v1.467h-1zM40 1.47h1v1.467h-1zM52 1.47h1v1.467h-1zM55 1.47h1v1.467h-1zM64 1.47h1v1.467h-1zM65 1.47h1v1.467h-1zM2 2.93h1v1.467h-1zM7 2.93h1v1.467h-1zM20 2.93h1v1.467h-1zM27 2.93h1v1.467h-1zM29 2.93h1v1.467h-1zM37 2.93h1v1.467h-1zM40 2.93h1v1.467h-1zM43 2.93h1v1.467h-1zM45 2.93h1v1.467h-1zM54 2.93h1v1.467h-1zM55 2.93h1v1.467h-1zM57 2.93h1v1.467h-1zM59 2.93h1v1.467h-1zM62 2.93h1v1.467h-1zM64 2.93h1v1.467h-1zM65 2.93h1v1.467h-1zM66 2.93h1v1.467h-1zM4 4.40h1v1.467h-1zM5 4.40h1v1.467h-1zM8 4.40h1v1.467h-1zM19 4.40h1v1.467h-1zM22 4.40h1v1.467h-1zM23 4.40h1v1.467h-1zM34 4.40h1v1.467h-1zM38 4.40h1v1.467h-1zM42 4.40h1v1.467h-1zM43 4.40h1v1.467h-1zM45 4.40h1v1.467h-1zM46 4.40h1v1.467h-1zM48 4.40h1v1.467h-1zM50 4.40h1v1.467h-1zM63 4.40h1v1.467h-1zM6 5.87h1v1.467h-1zM13 5.87h1v1.467h-1zM17 5.87h1v1.467h-1zM23 5.87h1v1.467h-1zM28 5.87h1v1.467h-1zM29 5.87h1v1.467h-1zM30 5.87h1v1.467h-1zM31 5.87h1v1.467h-1zM37 5.87h1v1.467h-1zM51 5.87h1v1.467h-1zM54 5.87h1v1.467h-1zM55 5.87h1v1.467h-1zM59 5.87h1v1.467h-1zM65 5.87h1v1.467h-1zM3 7.33h1v1.467h-1zM4 7.33h1v1.467h-1zM6 7.33h1v1.467h-1zM11 7.33h1v1.467h-1zM12 7.33h1v1.467h-1zM19 7.33h1v1.467h-1zM22 7.33h1v1.467h-1zM23 7.33h1v1.467h-1zM30 7.33h1v1.467h-1zM40 7.33h1v1.467h-1zM44 7.33h1v1.467h-1zM48 7.33h1v1.467h-1zM52 7.33h1v1.467h-1zM53 7.33h1v1.467h-1zM60 7.33h1v1.467h-1zM61 7.33h1v1.467h-1zM62 7.33h1v1.467h-1zM63 7.33h1v1.467h-1zM5 8.80h1v1.467h-1zM15 8.80h1v1.467h-1zM16 8.80h1v1.467h-1zM19 8.80h1v1.467h-1zM24 8.80h1v1.467h-1zM35 8.80h1v1.467h-1zM36 8.80h1v1.467h-1zM41 8.80h1v1.467h-1zM50 8.80h1v1.467h-1zM54 8.80h1v1.467h-1zM56 8.80h1v1.467h-1zM59 8.80h1v1.467h-1zM63 8.80h1v1.467h-1zM64 8.80h1v1.467h-1zM0 10.27h1v1.467h-1zM9 10.27h1v1.467h-1zM11 10.27h1v1.467h-1zM17 10.27h1v1.467h-1zM19 10.27h1v1.467h-1zM25 10.27h1v1.467h-1zM27 10.27h1v1.467h-1zM29 10.27h1v1.467h-1zM30 10.27h1v1.467h-1zM35 10.27h1v1.467h-1zM36 10.27h1v1.467h-1zM41 10.27h1v1.467h-1zM49 10.27h1v1.467h-1zM60 10.27h1v1.467h-1zM1 11.73h1v1.467h-1zM8 11.73h1v1.467h-1zM10 11.73h1v1.467h-1zM15 11.73h1v1.467h-1zM17 11.73h1v1.467h-1zM18 11.73h1v1.467h-1zM23 11.73h1v1.467h-1zM26 11.73h1v1.467h-1zM29 11.73h1v1.467h-1zM36 11.73h1v1.467h-1zM37 11.73h1v1.467h-1zM41 11.73h1v1.467h-1zM43 11.73h1v1.467h-1zM46 11.73h1v1.467h-1zM48 11.73h1v1.467h-1zM60 11.73h1v1.467h-1zM65 11.73h1v1.467h-1zM7 13.20h1v1.467h-1zM22 13.20h1v1.467h-1zM24 13.20h1v1.467h-1zM25 13.20h1v1.467h-1zM29 13.20h1v1.467h-1zM35 13.20h1v1.467h-1zM36 13.20h1v1.467h-1zM42 13.20h1v1.467h-1zM46 13.20h1v1.467h-1zM1 14.67h1v1.467h-1zM21 14.67h1v1.467h-1zM32 14.67h1v1.467h-1zM35 14.67h1v1.467h-1zM36 14.67h1v1.467h-1zM37 14.67h1v1.467h-1zM41 14.67h1v1.467h-1zM44 14.67h1v1.467h-1zM45 14.67h1v1.467h-1zM49 14.67h1v1.467h-1zM50 14.67h1v1.467h-1zM54 14.67h1v1.467h-1zM58 14.67h1v1.467h-1zM59 14.67h1v1.467h-1zM61 14.67h1v1.467h-1zM63 14.67h1v1.467h-1zM66 14.67h1v1.467h-1zM1 16.13h1v1.467h-1zM3 16.13h1v1.467h-1zM8 16.13h1v1.467h-1zM15 16.13h1v1.467h-1zM17 16.13h1v1.467h-1zM18 16.13h1v1.467h-1zM19 16.13h1v1.467h-1zM24 16.13h1v1.467h-1zM25 16.13h1v1.467h-1zM31 16.13h1v1.467h-1zM35 16.13h1v1.467h-1zM36 16.13h1v1.467h-1zM43 16.13h1v1.467h-1zM45 16.13h1v1.467h-1zM46 16.13h1v1.467h-1zM51 16.13h1v1.467h-1zM53 16.13h1v1.467h-1zM56 16.13h1v1.467h-1zM57 16.13h1v1.467h-1zM65 16.13h1v1.467h-1zM3 17.60h1v1.467h-1zM5 17.60h1v1.467h-1zM9 17.60h1v1.467h-1zM16 17.60h1v1.467h-1zM18 17.60h1v1.467h-1zM24 17.60h1v1.467h-1zM27 17.60h1v1.467h-1zM32 17.60h1v1.467h-1zM60 17.60h1v1.467h-1zM65 17.60h1v1.467h-1zM6 19.07h1v1.467h-1zM9 19.07h1v1.467h-1zM12 19.07h1v1.467h-1zM34 19.07h1v1.467h-1zM48 19.07h1v1.467h-1zM49 19.07h1v1.467h-1zM50 19.07h1v1.467h-1zM56 19.07h1v1.467h-1zM63 19.07h1v1.467h-1zM0 20.53h1v1.467h-1zM2 20.53h1v1.467h-1zM4 20.53h1v1.467h-1zM5 20.53h1v1.467h-1zM8 20.53h1v1.467h-1zM14 20.53h1v1.467h-1zM15 20.53h1v1.467h-1zM16 20.53h1v1.467h-1zM18 20.53h1v1.467h-1zM19 20.53h1v1.467h-1zM21 20.53h1v1.467h-1zM25 20.53h1v1.467h-1zM28 20.53h1v1.467h-1zM32 20.53h1v1.467h-1zM35 20.53h1v1.467h-1zM36 20.53h1v1.467h-1zM37 20.53h1v1.467h-1zM38 20.53h1v1.467h-1zM53 20.53h1v1.467h-1zM57 20.53h1v1.467h-1zM59 20.53h1v1.467h-1zM65 20.53h1v1.467h-1zM66 20.53h1v1.467h-1z" fill="#ff6800"/><path d="M2 0.00h1v1.467h-1zM24 0.00h1v1.467h-1zM40 0.00h1v1.467h-1zM43 0.00h1v1.467h-1zM46 0.00h1v1.467h-1zM48 0.00h1v1.467h-1zM54 0.00h1v1.467h-1zM66 0.00h1v1.467h-1zM12 1.47h1v1.467h-1zM16 1.47h1v1.467h-1zM43 1.47h1v1.467h-1zM54 1.47h1v1.467h-1zM56 1.47h1v1.467h-1zM57 1.47h1v1.467h-1zM21 2.93h1v1.467h-1zM25 2.93h1v1.467h-1zM35 2.93h1v1.467h-1zM49 2.93h1v1.467h-1zM58 2.93h1v1.467h-1zM3 4.40h1v1.467h-1zM10 4.40h1v1.467h-1zM11 4.40h1v1.467h-1zM15 4.40h1v1.467h-1zM25 4.40h1v1.467h-1zM30 4.40h1v1.467h-1zM35 4.40h1v1.467h-1zM36 4.40h1v1.467h-1zM39 4.40h1v1.467h-1zM58 4.40h1v1.467h-1zM65 4.40h1v1.467h-1zM0 5.87h1v1.467h-1zM2 5.87h1v1.467h-1zM3 5.87h1v1.467h-1zM11 5.87h1v1.467h-1zM22 5.87h1v1.467h-1zM26 5.87h1v1.467h-1zM38 5.87h1v1.467h-1zM56 5.87h1v1.467h-1zM61 5.87h1v1.467h-1zM5 7.33h1v1.467h-1zM15 7.33h1v1.467h-1zM33 7.33h1v1.467h-1zM35 7.33h1v1.467h-1zM37 7.33h1v1.467h-1zM51 7.33h1v1.467h-1zM2 8.80h1v1.467h-1zM9 8.80h1v1.467h-1zM17 8.80h1v1.467h-1zM31 8.80h1v1.467h-1zM43 8.80h1v1.467h-1zM49 8.80h1v1.467h-1zM53 8.80h1v1.467h-1zM8 10.27h1v1.467h-1zM15 10.27h1v1.467h-1zM16 10.27h1v1.467h-1zM46 10.27h1v1.467h-1zM50 10.27h1v1.467h-1zM57 10.27h1v1.467h-1zM7 11.73h1v1.467h-1zM13 11.73h1v1.467h-1zM21 11.73h1v1.467h-1zM22 11.73h1v1.467h-1zM33 11.73h1v1.467h-1zM34 11.73h1v1.467h-1zM35 11.73h1v1.467h-1zM39 11.73h1v1.467h-1zM66 11.73h1v1.467h-1zM1 13.20h1v1.467h-1zM2 13.20h1v1.467h-1zM3 13.20h1v1.467h-1zM38 13.20h1v1.467h-1zM48 13.20h1v1.467h-1zM52 13.20h1v1.467h-1zM53 13.20h1v1.467h-1zM56 13.20h1v1.467h-1zM64 13.20h1v1.467h-1zM12 14.67h1v1.467h-1zM13 14.67h1v1.467h-1zM19 14.67h1v1.467h-1zM34 14.67h1v1.467h-1zM56 14.67h1v1.467h-1zM14 16.13h1v1.467h-1zM26 16.13h1v1.467h-1zM29 16.13h1v1.467h-1zM33 16.13h1v1.467h-1zM38 16.13h1v1.467h-1zM0 17.60h1v1.467h-1zM8 17.60h1v1.467h-1zM29 17.60h1v1.467h-1zM42 17.60h1v1.467h-1zM51 17.60h1v1.467h-1zM55 17.60h1v1.467h-1zM1 19.07h1v1.467h-1zM2 19.07h1v1.467h-1zM5 19.07h1v1.467h-1zM25 19.07h1v1.467h-1zM32 19.07h1v1.467h-1zM35 19.07h1v1.467h-1zM39 19.07h1v1.467h-1zM40 19.07h1v1.467h-1zM43 19.07h1v1.467h-1zM46 19.07h1v1.467h-1zM58 19.07h1v1.467h-1zM33 20.53h1v1.467h-1zM34 20.53h1v1.467h-1zM40 20.53h1v1.467h-1zM47 20.53h1v1.467h-1zM50 20.53h1v1.467h-1zM51 20.53h1v1.467h-1zM63 20.53h1v1.467h-1z" fill="#ff7e00"/><path d="M15 0.00h1v1.467h-1zM33 0.00h1v1.467h-1zM64 0.00h1v1.467h-1zM1 1.47h1v1.467h-1zM17 1.47h1v1.467h-1zM50 1.47h1v1.467h-1zM53 1.47h1v1.467h-1zM10 2.93h1v1.467h-1zM17 2.93h1v1.467h-1zM30 2.93h1v1.467h-1zM51 2.93h1v1.467h-1zM12 4.40h1v1.467h-1zM54 4.40h1v1.467h-1zM4 5.87h1v1.467h-1zM10 5.87h1v1.467h-1zM18 5.87h1v1.467h-1zM45 5.87h1v1.467h-1zM47 5.87h1v1.467h-1zM49 5.87h1v1.467h-1zM16 7.33h1v1.467h-1zM25 7.33h1v1.467h-1zM26 7.33h1v1.467h-1zM47 7.33h1v1.467h-1zM44 8.80h1v1.467h-1zM5 10.27h1v1.467h-1zM31 10.27h1v1.467h-1zM42 10.27h1v1.467h-1zM4 11.73h1v1.467h-1zM6 11.73h1v1.467h-1zM45 11.73h1v1.467h-1zM43 13.20h1v1.467h-1zM66 13.20h1v1.467h-1zM3 14.67h1v1.467h-1zM16 14.67h1v1.467h-1zM20 14.67h1v1.467h-1zM22 14.67h1v1.467h-1zM27 14.67h1v1.467h-1zM60 14.67h1v1.467h-1zM62 14.67h1v1.467h-1zM5 16.13h1v1.467h-1zM22 16.13h1v1.467h-1zM28 16.13h1v1.467h-1zM47 16.13h1v1.467h-1zM52 16.13h1v1.467h-1zM6 17.60h1v1.467h-1zM52 17.60h1v1.467h-1zM59 17.60h1v1.467h-1zM66 17.60h1v1.467h-1zM45 19.07h1v1.467h-1zM62 19.07h1v1.467h-1zM65 19.07h1v1.467h-1zM24 20.53h1v1.467h-1zM30 20.53h1v1.467h-1z" fill="#ff9800"/><path d="M21 0.00h1v1.467h-1zM4 1.47h1v1.467h-1zM22 2.93h1v1.467h-1zM59 4.40h1v1.467h-1zM35 5.87h1v1.467h-1zM56 7.33h1v1.467h-1zM8 8.80h1v1.467h-1zM20 10.27h1v1.467h-1zM43 10.27h1v1.467h-1zM63 10.27h1v1.467h-1zM19 11.73h1v1.467h-1zM59 11.73h1v1.467h-1zM55 13.20h1v1.467h-1zM15 14.67h1v1.467h-1zM12 17.60h1v1.467h-1zM33 17.60h1v1.467h-1zM39 17.60h1v1.467h-1zM4 19.07h1v1.467h-1zM19 19.07h1v1.467h-1zM27 19.07h1v1.467h-1zM29 19.07h1v1.467h-1zM64 19.07h1v1.467h-1zM22 20.53h1v1.467h-1zM45 20.53h1v1.467h-1z" fill="#ffb400"/></pattern></defs><rect x="0" y="0" width="800" height="28" fill="#003f74"/><rect x="317" y="0" width="422" height="28" fill="#1372c0"/><text x="36.2" y="19" font-size="11" textLength="33.3" lengthAdjust="spacingAndGlyphs" fill="#ffffff" stroke="#ffffff" stroke-width="0.15">SCOPE</text><text x="126.9" y="19" font-size="11" textLength="61.6" lengthAdjust="spacingAndGlyphs" fill="#ffffff" stroke="#ffffff" stroke-width="0.15">ESTIMATION</text><text x="221.9" y="19" font-size="11" textLength="83.6" lengthAdjust="spacingAndGlyphs" fill="#ffffff" stroke="#ffffff" stroke-width="0.15">MEASUREMENTS</text><text x="341.9" y="19" font-size="11" textLength="54.4" lengthAdjust="spacingAndGlyphs" fill="#ffffff" stroke="#ffffff" stroke-width="0.15">SPECTRUM</text><text x="436.1" y="19" font-size="11" textLength="76.8" lengthAdjust="spacingAndGlyphs" fill="#ffffff" stroke="#ffffff" stroke-width="0.15">SPECTROGRAM</text><text x="539.2" y="19" font-size="11" textLength="81.7" lengthAdjust="spacingAndGlyphs" fill="#ffffff" stroke="#ffffff" stroke-width="0.15">SPECTRAL MASK</text><text x="640.4" y="19" font-size="11" textLength="81.1" lengthAdjust="spacingAndGlyphs" fill="#ffffff" stroke="#ffffff" stroke-width="0.15">CHANNEL MEAS</text><rect x="721.6" y="15.2" width="1.6" height="1.7" fill="#ffffff"/><rect x="724.4000000000001" y="15.2" width="1.6" height="1.7" fill="#ffffff"/><rect x="727.3000000000001" y="15.2" width="1.6" height="1.7" fill="#ffffff"/><polygon points="751,14 757.8,3 790,3 790,25 757.8,25" fill="#6a8fb0"/><circle cx="771.2" cy="13.6" r="1.5" fill="#ffffff"/><circle cx="775.8" cy="13.6" r="1.5" fill="#ffffff"/><circle cx="780.4" cy="13.6" r="1.5" fill="#ffffff"/><text x="222" y="45.5" font-size="13" fill="#dedede" textLength="383" lengthAdjust="spacingAndGlyphs">160 MHz UHR MU Transmission with Punctured 20 MHz Channels</text><rect x="48" y="51" width="732" height="157" fill="#141414"/><path d="M170.5 51.5V207.5M292.5 51.5V207.5M414.5 51.5V207.5M535.5 51.5V207.5M657.5 51.5V207.5M48.5 65.5H779.5M48.5 108.5H779.5M48.5 150.5H779.5M48.5 193.5H779.5" stroke="#4a4a4a" stroke-width="1" fill="none"/><g clip-path="url(#cu)" fill="none" stroke="#ffe05c" stroke-linejoin="round"><polyline points="40.0,200.0 40.4,200.0 40.8,199.9 41.2,198.9 41.6,196.9 42.0,195.3 42.4,194.0 42.8,193.0 43.2,192.0 43.6,191.2 44.0,190.5 44.4,189.9 44.8,189.3 45.2,188.8 45.6,188.3 46.0,187.8 46.4,187.4 46.8,187.0 47.2,186.7 47.6,186.4 48.0,186.1 48.4,185.8 48.8,185.6 49.2,185.3 49.6,185.1 50.0,185.0 50.4,184.8 50.8,184.6 51.2,184.5 51.6,184.4 52.0,184.3 52.4,184.2 52.8,184.1 53.2,184.1 53.6,184.0 54.0,184.0 54.4,184.0 54.8,184.0 55.2,184.0 55.6,184.1 56.0,184.1 56.4,184.2 56.8,184.3 57.2,184.4 57.6,184.5 58.0,184.7 58.4,184.9 58.8,185.1 59.2,185.3 59.6,185.5 60.0,185.8 60.4,186.1 60.8,186.5 61.2,186.9 61.6,187.3 62.0,187.8 62.4,188.4 62.8,189.0 63.2,189.7 63.6,190.5 64.0,191.5 64.4,192.7 64.8,194.1 65.2,196.1 65.6,197.0 66.0,196.9 66.4,196.9 66.4,196.9 66.8,196.8 67.2,196.6 67.6,196.5 68.0,194.3 68.4,192.3 68.8,190.6 69.2,189.2 69.6,188.0 70.0,186.9 70.4,185.9 70.8,185.0 71.2,184.1 71.6,183.4 72.0,182.7 72.4,182.0 72.8,181.4 73.2,180.8 73.6,180.3 74.0,179.8 74.4,179.3 74.8,178.8 75.2,178.4 75.6,178.0 76.0,177.6 76.4,177.2 76.8,176.9 77.2,176.5 77.6,176.2 78.0,175.9 78.4,175.6 78.8,175.4 79.2,175.1 79.6,174.9 80.0,174.6 80.4,174.4 80.8,174.2 81.2,174.1 81.6,173.9 82.0,173.7 82.4,173.6 82.8,173.5 83.2,173.3 83.6,173.2 84.0,173.1 84.4,173.1 84.8,173.0 85.2,173.0 85.6,172.9 86.0,172.9 86.4,172.9 86.8,172.9 87.2,172.9 87.6,173.0 88.0,173.0 88.4,173.1 88.8,173.2 89.2,173.3 89.6,173.5 90.0,173.6 90.4,173.8 90.8,174.0 91.2,174.3 91.6,174.5 92.0,174.9 92.4,175.2 92.8,175.6 93.2,176.0 93.6,176.5 94.0,177.1 94.4,177.7 94.8,178.4 95.2,179.2 95.6,180.2 96.0,181.4 96.4,182.8 96.8,184.5 97.2,186.4 97.6,186.3 98.0,186.1 98.4,186.0 98.4,186.0 98.8,185.8 99.2,185.7 99.6,185.5 100.0,182.8 100.4,180.4 100.8,178.4 101.2,176.7 101.6,175.3 102.0,174.0 102.4,172.8 102.8,171.7 103.2,170.8 103.6,169.9 104.0,169.0 104.4,168.3 104.8,167.5 105.2,166.9 105.6,166.2 106.0,165.6 106.4,165.1 106.8,164.5 107.2,164.0 107.6,163.5 108.0,163.1 108.4,162.7 108.8,162.3 109.2,161.9 109.6,161.5 110.0,161.2 110.4,160.9 110.8,160.6 111.2,160.3 111.6,160.0 112.0,159.8 112.4,159.5 112.8,159.3 113.2,159.1 113.6,158.9 114.0,158.8 114.4,158.6 114.8,158.5 115.2,158.4 115.6,158.3 116.0,158.2 116.4,158.1 116.8,158.0 117.2,158.0 117.6,158.0 118.0,158.0 118.4,158.0 118.8,158.1 119.2,158.1 119.6,158.2 120.0,158.3 120.4,158.4 120.8,158.6 121.2,158.8 121.6,159.0 122.0,159.2 122.4,159.5 122.8,159.8 123.2,160.1 123.6,160.5 124.0,160.9 124.4,161.4 124.8,162.0 125.2,162.6 125.6,163.3 126.0,164.1 126.4,165.0 126.8,166.0 127.2,167.2 127.6,168.6 128.0,170.4 128.4,172.6 128.8,174.4 129.2,174.3 129.6,174.1 129.9,174.0 130.4,171.7 130.9,169.3 131.4,166.8 131.9,164.4 132.4,161.9 132.9,159.7 133.4,157.5 133.9,155.6 134.4,154.0 134.9,152.6 135.4,151.3 135.9,150.0 136.4,148.9 136.9,147.8 137.4,146.7 137.9,145.7 138.4,144.8 138.9,143.9 139.4,143.0 139.9,142.1 140.4,141.2 140.9,140.3 141.4,139.4 141.9,138.6 142.4,137.7 142.9,136.9 143.4,136.1 143.9,135.3 144.4,134.5 144.9,133.7 145.4,132.9 145.9,132.2 146.4,131.5 146.9,130.7 147.4,130.0 147.9,129.3 148.4,128.7 148.9,128.0 149.4,127.3 149.9,126.7 150.4,126.1 150.9,125.5 151.4,124.9 151.9,124.3 152.4,123.8 152.9,123.3 153.4,122.8 153.9,122.3 154.4,121.8 154.9,121.3 155.4,120.8 155.9,120.4 156.4,119.9 156.9,119.4 157.4,119.0 157.9,118.5 158.4,118.1 158.9,117.6 159.4,117.1 159.9,116.6 160.4,116.1 160.9,115.6 161.4,115.0 161.9,114.5 162.4,113.9 162.9,113.4 163.4,112.9 163.9,112.3 164.4,111.8 164.9,111.3 165.4,110.7 165.9,110.1 166.4,109.5 166.9,108.8 167.4,108.1 167.9,107.3 168.4,106.5 168.9,105.6 169.4,104.8 169.9,103.8 170.4,102.7 170.9,101.2 171.4,99.1 171.9,94.7 172.4,86.0 172.9,71.1 173.2,68.6 173.5,69.9 173.7,67.4 174.0,64.9 174.2,66.7 174.5,64.4 174.8,68.9 175.0,74.2 175.3,66.5 175.5,66.0 175.8,70.7 176.1,70.1 176.3,69.0 176.6,64.7 176.8,68.5 177.1,71.5 177.4,63.0 177.6,66.7 177.9,60.6 178.1,63.2 178.4,60.9 178.7,67.6 178.9,63.3 179.2,69.7 179.4,69.3 179.7,67.8 180.0,60.0 180.2,66.3 180.5,68.4 180.7,69.1 181.0,62.2 181.3,66.6 181.5,64.5 181.8,65.2 182.0,73.1 182.3,65.2 182.6,68.5 182.8,72.3 183.1,66.1 183.3,68.1 183.6,69.1 183.9,68.9 184.1,63.5 184.4,68.9 184.6,74.3 184.9,62.1 185.2,72.2 185.4,69.1 185.7,65.9 185.9,77.0 186.2,71.8 186.5,63.6 186.7,68.9 187.0,71.0 187.2,67.8 187.5,71.5 187.8,68.3 188.0,71.4 188.3,74.6 188.5,65.8 188.8,69.5 189.1,66.7 189.3,69.1 189.6,63.6 189.8,66.2 190.1,67.8 190.4,72.4 190.6,73.4 190.9,63.0 191.1,65.3 191.4,71.3 191.7,60.2 191.9,66.7 192.2,68.2 192.4,73.9 192.7,71.5 193.0,67.2 193.2,67.1 193.5,67.5 193.7,75.0 194.0,66.8 194.3,67.3 194.5,70.1 194.8,68.1 195.0,67.8 195.3,63.9 195.6,68.6 195.8,66.7 196.1,73.5 196.3,71.3 196.6,68.5 196.9,71.4 197.1,67.2 197.4,73.0 197.6,68.6 197.9,71.1 198.2,63.2 198.4,70.1 198.7,61.5 198.9,60.1 199.2,67.3 199.5,64.8 199.7,69.3 200.0,78.0 200.2,65.1 200.5,66.0 200.8,69.5 201.0,70.7 201.3,67.9 201.5,67.7 201.8,71.6 202.1,70.8 202.3,64.3 202.6,68.3 202.8,68.7 203.1,64.2 203.4,69.7 203.6,65.0 203.9,72.7 204.1,69.4 204.4,69.0 204.7,66.1 204.9,68.1 205.2,60.2 205.4,63.8 205.7,70.1 206.0,60.0 206.2,72.2 206.5,61.3 206.7,71.8 207.0,65.0 207.3,71.9 207.5,69.1 207.8,62.1 208.0,73.8 208.3,74.7 208.6,68.3 208.8,67.4 209.1,67.9 209.3,64.5 209.6,73.2 209.9,66.3 210.1,68.4 210.4,65.3 210.6,66.0 210.9,63.2 211.2,73.9 211.4,68.0 211.7,72.7 211.9,68.7 212.2,65.7 212.5,67.2 212.7,66.2 213.0,68.6 213.2,67.0 213.5,67.3 213.8,62.8 214.0,65.2 214.3,75.5 214.5,65.8 214.8,64.2 215.1,70.0 215.3,74.5 215.6,62.5 215.8,67.7 216.1,65.9 216.4,61.2 216.6,71.7 216.9,68.5 217.1,68.9 217.4,65.4 217.7,70.5 217.9,66.3 218.2,68.0 218.4,63.9 218.7,63.5 219.0,74.2 219.2,66.5 219.5,69.8 219.7,68.5 220.0,66.7 220.3,66.5 220.5,71.2 220.8,67.3 221.0,68.0 221.3,68.7 221.6,73.5 221.8,71.5 222.1,70.2 222.3,66.2 222.6,62.8 222.9,72.6 223.1,72.7 223.4,68.0 223.6,70.9 223.9,71.9 224.2,72.1 224.4,72.5 224.7,66.7 224.9,75.0 225.2,63.4 225.5,72.2 225.7,70.7 226.0,72.3 226.2,76.5 226.5,74.8 226.8,63.8 227.0,61.5 227.3,72.0 227.5,64.3 227.8,68.5 228.1,72.1 228.3,61.7 228.6,60.0 228.8,69.7 229.1,68.8 229.4,67.6 229.6,68.8 229.9,65.0 230.2,68.0 230.7,82.9 231.2,92.2 231.7,96.2 232.2,98.8 232.7,100.7 233.2,102.3 233.7,103.6 234.2,104.8 234.7,105.8 235.2,106.7 235.7,107.5 236.2,108.3 236.7,109.1 237.2,109.8 237.7,110.5 238.2,111.1 238.7,111.7 239.2,112.3 239.7,112.8 240.2,113.4 240.7,114.0 241.2,114.5 241.7,115.1 242.2,115.8 242.7,116.4 243.2,117.0 243.7,117.7 244.2,118.3 244.7,119.0 245.2,119.7 245.7,120.3 246.2,121.0 246.7,121.7 247.2,122.4 247.7,123.0 248.2,123.7 248.7,124.4 249.2,125.0 249.7,125.7 250.2,126.3 250.7,127.0 251.2,127.6 251.7,128.2 252.2,128.8 252.7,129.4 253.2,130.0 253.7,130.6 254.2,131.1 254.7,131.7 255.2,132.2 255.7,132.8 256.2,133.4 256.7,134.0 257.2,134.6 257.7,135.2 258.2,135.8 258.7,136.3 259.2,136.7 259.7,137.1 260.2,137.3 260.7,137.5 261.2,137.5 261.7,137.4 262.2,137.1 262.7,136.8 263.2,136.3 263.7,135.8 264.2,135.3 264.7,134.7 265.2,134.1 265.7,133.5 266.2,132.9 266.7,132.3 267.2,131.8 267.7,131.3 268.2,130.8 268.7,130.2 269.2,129.7 269.7,129.1 270.2,128.6 270.7,128.0 271.2,127.4 271.7,126.9 272.2,126.3 272.7,125.7 273.2,125.1 273.7,124.5 274.2,123.9 274.7,123.3 275.2,122.7 275.7,122.1 276.2,121.5 276.7,120.9 277.2,120.3 277.7,119.7 278.2,119.1 278.7,118.5 279.2,117.9 279.7,117.3 280.2,116.8 280.7,116.2 281.2,115.7 281.7,115.2 282.2,114.6 282.7,114.1 283.2,113.6 283.7,113.1 284.2,112.5 284.7,112.0 285.2,111.4 285.7,110.8 286.2,110.1 286.7,109.4 287.2,108.7 287.7,107.9 288.2,107.1 288.7,106.1 289.2,105.2 289.7,104.1 290.2,103.0 290.7,101.8 291.2,100.5 291.7,99.2 292.2,97.7 292.7,95.6 293.2,92.4 293.7,85.6 294.2,74.5 294.6,62.2 294.9,67.9 295.1,64.5 295.4,61.7 295.6,70.7 295.9,68.3 296.2,70.3 296.4,64.4 296.7,65.8 296.9,64.4 297.2,64.9 297.5,69.4 297.7,65.3 298.0,70.1 298.2,70.0 298.5,77.1 298.8,62.8 299.0,72.3 299.3,68.2 299.5,68.5 299.8,62.5 300.1,66.7 300.3,71.7 300.6,68.3 300.8,68.9 301.1,67.4 301.4,73.4 301.6,68.5 301.9,60.0 302.1,65.7 302.4,60.3 302.7,60.0 302.9,66.4 303.2,74.2 303.4,68.8 303.7,63.7 304.0,64.6 304.2,73.3 304.5,69.3 304.7,68.8 305.0,68.4 305.3,68.8 305.5,72.0 305.8,70.9 306.0,69.5 306.3,64.2 306.6,70.7 306.8,65.7 307.1,73.2 307.3,63.3 307.6,68.0 307.9,68.6 308.1,63.0 308.4,75.8 308.6,74.7 308.9,66.7 309.2,71.8 309.4,70.2 309.7,60.0 309.9,69.7 310.2,68.3 310.5,68.9 310.7,64.1 311.0,67.5 311.2,67.9 311.5,73.6 311.8,70.0 312.0,68.6 312.3,75.0 312.5,66.3 312.8,67.0 313.1,61.0 313.3,75.2 313.6,72.7 313.8,72.5 314.1,71.4 314.4,69.1 314.6,69.5 314.9,67.5 315.1,67.7 315.4,68.8 315.7,74.9 315.9,70.9 316.2,68.4 316.4,66.2 316.7,65.9 317.0,75.3 317.2,70.7 317.5,68.9 317.7,67.1 318.0,63.9 318.3,68.3 318.5,72.3 318.8,67.0 319.0,67.6 319.3,67.7 319.6,69.1 319.8,61.9 320.1,67.6 320.3,65.0 320.6,72.3 320.9,65.4 321.1,71.0 321.4,75.0 321.6,67.3 321.9,66.1 322.2,69.4 322.4,68.6 322.7,64.4 322.9,70.5 323.2,77.1 323.5,67.5 323.7,67.7 324.0,64.2 324.2,69.9 324.5,63.4 324.8,64.0 325.0,74.0 325.3,64.8 325.5,73.1 325.8,75.0 326.1,69.7 326.3,70.9 326.6,76.8 326.8,67.8 327.1,66.1 327.4,62.9 327.6,68.8 327.9,74.8 328.1,72.6 328.4,64.6 328.7,65.0 328.9,66.5 329.2,69.8 329.4,67.7 329.7,69.5 330.0,69.8 330.2,67.3 330.5,68.4 330.7,69.5 331.0,68.2 331.3,70.7 331.5,76.5 331.8,71.1 332.0,68.8 332.3,61.5 332.6,70.2 332.8,60.4 333.1,62.7 333.3,72.2 333.6,71.6 333.9,68.0 334.1,61.4 334.4,67.0 334.6,65.7 334.9,71.3 335.2,78.1 335.4,69.5 335.7,65.3 335.9,63.7 336.2,68.4 336.5,67.9 336.7,63.8 337.0,69.1 337.2,63.8 337.5,73.3 337.8,73.1 338.0,73.2 338.3,66.6 338.5,70.8 338.8,68.0 339.1,67.0 339.3,67.2 339.6,63.1 339.8,62.5 340.1,71.9 340.4,67.8 340.6,69.5 340.9,72.8 341.1,61.3 341.4,65.3 341.7,69.3 341.9,70.2 342.2,67.0 342.4,72.9 342.7,69.5 343.0,63.5 343.2,64.7 343.5,72.0 343.7,70.5 344.0,60.6 344.3,74.3 344.5,71.1 344.8,74.2 345.0,67.0 345.3,67.4 345.6,63.9 345.8,79.3 346.1,67.9 346.3,75.3 346.6,65.9 346.9,69.3 347.1,61.6 347.4,67.0 347.6,72.7 347.9,63.3 348.2,73.1 348.4,70.0 348.7,64.2 348.9,66.5 349.2,66.7 349.5,68.4 349.7,66.3 350.0,65.1 350.2,67.3 350.5,64.3 350.8,63.2 351.0,68.4 351.3,72.3 351.5,62.2 351.8,68.6 352.1,65.9 352.3,75.0 352.6,107.5 352.8,76.0 353.1,74.9 353.4,65.3 353.6,70.2 353.9,67.6 354.1,65.4 354.4,71.1 354.7,67.9 354.9,71.1 355.2,68.4 355.4,64.0 355.7,68.2 356.0,68.8 356.2,72.6 356.5,64.8 356.7,68.4 357.0,61.4 357.3,71.3 357.5,64.1 357.8,61.0 358.0,68.4 358.3,73.2 358.6,62.2 358.8,64.0 359.1,65.5 359.3,63.9 359.6,70.2 359.9,65.2 360.1,65.6 360.4,71.0 360.6,65.4 360.9,70.4 361.2,64.5 361.4,63.5 361.7,60.9 361.9,76.4 362.2,67.3 362.5,69.6 362.7,68.5 363.0,69.3 363.2,68.8 363.5,76.6 363.8,64.2 364.0,62.1 364.3,64.3 364.5,63.0 364.8,71.7 365.1,72.0 365.3,64.6 365.6,62.8 365.8,67.1 366.1,74.4 366.4,60.0 366.6,70.8 366.9,64.1 367.1,73.0 367.4,64.1 367.7,67.4 367.9,62.3 368.2,64.5 368.4,74.4 368.7,72.0 369.0,66.9 369.2,64.9 369.5,60.6 369.7,66.9 370.0,68.5 370.3,68.2 370.5,68.2 370.8,63.9 371.0,68.3 371.3,68.4 371.6,74.0 371.8,76.4 372.1,68.0 372.3,65.4 372.6,68.3 372.9,66.0 373.1,65.5 373.4,68.4 373.6,64.2 373.9,71.1 374.2,68.2 374.4,69.7 374.7,67.8 374.9,65.5 375.2,64.6 375.5,67.6 375.7,66.3 376.0,69.6 376.2,68.6 376.5,62.9 376.8,68.9 377.0,63.0 377.3,66.0 377.5,67.4 377.8,60.0 378.1,69.0 378.3,69.2 378.6,67.9 378.8,66.8 379.1,67.0 379.4,64.5 379.6,67.5 379.9,66.3 380.1,69.0 380.4,63.5 380.7,69.6 380.9,69.2 381.2,68.0 381.4,66.8 381.7,70.9 382.0,61.6 382.2,70.5 382.5,69.6 382.7,69.8 383.0,70.2 383.3,65.9 383.5,67.5 383.8,71.3 384.0,70.4 384.3,69.5 384.6,62.2 384.8,70.9 385.1,73.5 385.3,72.8 385.6,69.6 385.9,62.1 386.1,72.6 386.4,68.0 386.6,60.0 386.9,70.2 387.2,62.3 387.4,63.2 387.7,65.9 387.9,73.9 388.2,67.0 388.5,69.7 388.7,75.9 389.0,75.3 389.2,68.2 389.5,67.6 389.8,63.3 390.0,65.7 390.3,70.4 390.5,70.3 390.8,69.1 391.1,72.8 391.3,65.4 391.6,68.4 391.8,71.7 392.1,71.1 392.4,73.1 392.6,70.3 392.9,67.3 393.1,70.1 393.4,64.4 393.7,61.7 393.9,71.0 394.2,68.4 394.4,69.9 394.7,61.5 395.0,67.1 395.2,66.1 395.5,65.0 395.7,60.0 396.0,67.2 396.3,72.4 396.5,70.2 396.8,66.1 397.0,68.5 397.3,71.8 397.6,60.0 397.8,68.1 398.1,70.9 398.3,71.5 398.6,75.7 398.9,73.4 399.1,69.9 399.4,69.9 399.6,71.9 399.9,66.3 400.2,68.4 400.4,72.4 400.7,76.8 400.9,67.9 401.2,68.4 401.5,69.4 401.7,74.2 402.0,68.5 402.2,74.8 402.5,64.5 402.8,67.8 403.0,67.8 403.3,71.9 403.5,73.0 403.8,62.3 404.1,64.8 404.3,70.0 404.6,65.8 404.8,62.2 405.1,73.0 405.4,70.7 405.6,70.7 405.9,66.6 406.1,72.9 406.4,67.6 406.7,73.2 406.9,64.8 407.2,65.0 407.4,69.5 407.7,65.7 408.0,71.4 408.2,69.7 408.5,64.7 408.7,68.9 409.0,67.1 409.3,72.4 409.5,75.3 409.8,78.5 410.0,81.4 410.3,83.8 410.6,85.9 410.8,87.6 411.1,89.0 411.3,90.2 411.6,91.1 411.9,91.8 412.1,92.3 412.4,92.6 412.6,92.8 412.9,92.9 413.2,93.0 413.4,93.0 413.7,93.0 413.9,93.0 414.2,92.9 414.5,92.8 414.7,92.5 415.0,92.1 415.2,91.5 415.5,90.8 415.8,89.8 416.0,88.5 416.3,87.0 416.5,85.1 416.8,82.9 417.1,80.3 417.3,77.3 417.6,61.9 417.8,64.2 418.1,67.0 418.4,79.2 418.6,72.6 418.9,68.1 419.1,71.6 419.4,77.2 419.7,67.6 419.9,67.1 420.2,73.7 420.4,70.7 420.7,71.4 421.0,66.5 421.2,76.7 421.5,75.8 421.7,71.0 422.0,71.5 422.3,60.1 422.5,71.3 422.8,67.8 423.0,70.4 423.3,71.5 423.6,67.2 423.8,61.5 424.1,70.1 424.3,65.5 424.6,67.2 424.9,66.1 425.1,67.2 425.4,60.0 425.6,73.7 425.9,69.7 426.2,73.3 426.4,76.9 426.7,68.7 426.9,61.0 427.2,64.8 427.5,63.5 427.7,66.5 428.0,68.9 428.2,60.2 428.5,70.0 428.8,62.3 429.0,69.8 429.3,68.1 429.5,67.3 429.8,68.3 430.1,66.3 430.3,66.0 430.6,61.5 430.8,68.5 431.1,76.4 431.4,76.9 431.6,74.2 431.9,71.6 432.1,65.8 432.4,74.7 432.7,68.4 432.9,68.3 433.2,67.4 433.4,69.0 433.7,66.8 434.0,68.2 434.2,64.0 434.5,67.0 434.7,78.2 435.0,68.3 435.3,67.6 435.5,70.8 435.8,71.6 436.0,63.9 436.3,67.7 436.6,72.5 436.8,69.7 437.1,69.1 437.3,75.1 437.6,65.8 437.9,68.9 438.1,66.4 438.4,74.9 438.6,60.4 438.9,65.8 439.2,66.4 439.4,71.4 439.7,71.1 439.9,74.5 440.2,62.0 440.5,71.8 440.7,67.4 441.0,65.8 441.2,70.9 441.5,64.7 441.8,60.0 442.0,67.0 442.3,62.3 442.5,65.9 442.8,70.2 443.1,69.9 443.3,75.3 443.6,67.8 443.8,62.2 444.1,65.4 444.4,64.7 444.6,63.5 444.9,70.4 445.1,65.9 445.4,60.3 445.7,71.5 445.9,68.1 446.2,70.1 446.4,69.0 446.7,71.3 447.0,68.8 447.2,73.8 447.5,70.4 447.7,70.2 448.0,70.3 448.3,62.5 448.5,67.9 448.8,67.5 449.0,69.5 449.3,62.9 449.6,75.5 449.8,69.0 450.1,63.5 450.3,61.4 450.6,67.4 450.9,68.2 451.1,65.6 451.4,69.0 451.6,65.9 451.9,70.9 452.2,65.6 452.4,68.4 452.7,72.7 452.9,79.4 453.2,64.4 453.5,66.6 453.7,65.1 454.0,71.9 454.2,63.8 454.5,66.6 454.8,68.5 455.0,64.5 455.3,64.6 455.5,66.6 455.8,60.0 456.1,62.5 456.3,66.9 456.6,69.2 456.8,67.8 457.1,61.1 457.4,66.7 457.6,72.0 457.9,70.9 458.1,68.3 458.4,64.9 458.7,71.3 458.9,66.2 459.2,63.7 459.4,65.2 459.7,74.7 460.0,69.5 460.2,73.5 460.5,66.6 460.7,72.5 461.0,66.1 461.3,67.9 461.5,79.0 461.8,71.8 462.0,66.5 462.3,68.2 462.6,70.0 462.8,73.7 463.1,66.5 463.3,61.3 463.6,67.4 463.9,68.7 464.1,69.1 464.4,74.1 464.6,69.9 464.9,72.0 465.2,64.0 465.4,72.2 465.7,77.4 465.9,71.8 466.2,69.7 466.5,69.2 466.7,76.1 467.0,64.7 467.2,68.1 467.5,70.5 467.8,71.7 468.0,66.8 468.3,69.9 468.5,67.4 468.8,69.1 469.1,68.0 469.3,63.8 469.6,68.5 469.8,72.3 470.1,64.5 470.4,67.6 470.6,71.4 470.9,64.1 471.1,69.4 471.4,64.1 471.7,73.4 471.9,78.3 472.2,77.1 472.4,67.7 472.7,71.7 473.0,69.1 473.2,68.0 473.7,86.8 474.2,91.5 474.7,94.7 475.2,97.0 475.7,98.7 476.2,100.0 476.7,101.3 477.2,102.5 477.7,103.6 478.2,104.6 478.7,105.5 479.2,106.3 479.7,107.1 480.2,107.8 480.7,108.5 481.2,109.2 481.7,109.8 482.2,110.5 482.7,111.2 483.2,112.0 483.7,112.8 484.2,113.6 484.7,114.3 485.2,115.1 485.7,115.9 486.2,116.6 486.7,117.4 487.2,118.1 487.7,118.8 488.2,119.6 488.7,120.3 489.2,121.1 489.7,121.8 490.2,122.5 490.7,123.3 491.2,124.0 491.7,124.8 492.2,125.5 492.7,126.2 493.2,127.0 493.7,127.7 494.2,128.4 494.7,129.1 495.2,129.8 495.7,130.5 496.2,131.3 496.7,132.0 497.2,132.7 497.7,133.5 498.2,134.2 498.7,135.0 499.2,135.8 499.7,136.6 500.2,137.4 500.7,138.2 501.2,139.1 501.7,140.0 502.2,140.8 502.7,141.7 503.2,142.7 503.7,143.6 504.2,144.6 504.7,145.6 505.2,146.6 505.7,147.7 506.2,148.8 506.7,149.9 507.2,151.1 507.7,152.4 508.2,153.7 508.7,155.2 509.2,156.8 509.7,158.4 510.2,160.1 510.7,161.8 511.2,163.5 511.7,165.2 512.2,166.9 512.7,168.6 512.9,169.2 513.3,169.5 513.7,169.8 514.1,168.3 514.5,166.5 514.9,165.3 515.3,164.3 515.7,163.5 516.1,162.9 516.5,162.4 516.9,162.0 517.3,161.7 517.7,161.4 518.1,161.2 518.5,161.0 518.9,160.9 519.3,160.8 519.7,160.8 520.1,160.8 520.5,160.8 520.9,160.9 521.3,161.0 521.7,161.1 522.1,161.2 522.5,161.3 522.9,161.5 523.3,161.7 523.7,161.9 524.1,162.1 524.5,162.4 524.9,162.7 525.3,163.0 525.7,163.3 526.1,163.6 526.5,164.0 526.9,164.3 527.3,164.7 527.7,165.1 528.1,165.6 528.5,166.0 528.9,166.5 529.3,167.0 529.7,167.6 530.1,168.2 530.5,168.8 530.9,169.4 531.3,170.1 531.7,170.9 532.1,171.6 532.5,172.5 532.9,173.4 533.3,174.4 533.7,175.5 534.1,176.8 534.5,178.2 534.9,179.9 535.3,181.9 535.7,184.5 536.1,185.3 536.5,185.6 536.7,185.7 537.1,185.4 537.5,184.6 537.9,182.4 538.3,180.8 538.7,179.5 539.1,178.4 539.5,177.5 539.9,176.6 540.3,175.9 540.7,175.2 541.1,174.5 541.5,173.9 541.9,173.4 542.3,172.9 542.7,172.4 543.1,171.9 543.5,171.5 543.9,171.1 544.3,170.7 544.7,170.4 545.1,170.1 545.5,169.8 545.9,169.5 546.3,169.2 546.7,169.0 547.1,168.8 547.5,168.6 547.9,168.5 548.3,168.3 548.7,168.2 549.1,168.1 549.5,168.1 549.9,168.1 550.3,168.1 550.7,168.2 551.1,168.4 551.5,168.6 551.9,168.9 552.3,169.3 552.7,169.8 553.1,170.5 553.5,171.6 553.9,173.2 554.3,173.5 554.7,173.2 554.7,173.2 555.2,171.8 555.7,170.5 556.2,169.1 556.7,167.7 557.2,166.3 557.7,165.0 558.2,163.7 558.7,162.5 559.2,161.3 559.7,160.1 560.2,159.0 560.7,157.8 561.2,156.6 561.7,155.5 562.2,154.4 562.7,153.4 563.2,152.4 563.7,151.4 564.2,150.4 564.7,149.5 565.2,148.7 565.7,147.8 566.2,147.0 566.7,146.2 567.2,145.5 567.7,144.7 568.2,144.0 568.7,143.3 569.2,142.6 569.7,141.9 570.2,141.3 570.7,140.6 571.2,140.0 571.7,139.3 572.2,138.7 572.7,138.1 573.2,137.5 573.7,136.9 574.2,136.2 574.7,135.6 575.2,135.0 575.7,134.4 576.2,133.7 576.7,133.1 577.2,132.5 577.7,131.9 578.2,131.4 578.7,130.8 579.2,130.3 579.7,129.7 580.2,129.2 580.7,128.6 581.2,128.1 581.7,127.5 582.2,127.0 582.7,126.4 583.2,125.9 583.7,125.3 584.2,124.8 584.7,124.2 585.2,123.6 585.7,123.0 586.2,122.4 586.7,121.7 587.2,121.1 587.7,120.4 588.2,119.7 588.7,119.1 589.2,118.4 589.7,117.8 590.2,117.1 590.7,116.4 591.2,115.7 591.7,114.9 592.2,114.0 592.7,113.1 593.2,112.0 593.7,110.8 594.2,109.4 594.7,107.7 595.2,105.5 595.7,102.4 596.2,97.5 596.7,86.7 597.2,76.0 597.8,69.0 598.1,75.1 598.3,63.1 598.6,73.0 598.8,68.4 599.1,74.5 599.4,69.4 599.6,65.8 599.9,69.8 600.1,71.7 600.4,68.8 600.7,70.6 600.9,66.4 601.2,60.0 601.4,72.4 601.7,71.5 602.0,69.2 602.2,68.9 602.5,73.0 602.7,66.7 603.0,65.6 603.3,67.8 603.5,73.6 603.8,62.8 604.0,73.6 604.3,65.9 604.6,64.0 604.8,73.9 605.1,68.2 605.3,63.1 605.6,67.1 605.9,72.5 606.1,73.6 606.4,66.8 606.6,70.3 606.9,71.6 607.2,65.9 607.4,70.1 607.7,68.5 607.9,66.3 608.2,66.5 608.5,68.9 608.7,68.7 609.0,66.2 609.2,66.8 609.5,73.3 609.8,69.5 610.0,72.3 610.3,73.6 610.5,71.1 610.8,78.1 611.1,65.1 611.3,72.0 611.6,67.3 611.8,76.4 612.1,75.7 612.4,60.4 612.6,64.5 612.9,71.4 613.1,71.9 613.4,71.7 613.7,68.3 613.9,70.5 614.2,71.3 614.4,68.3 614.7,72.9 615.0,60.0 615.2,71.3 615.5,64.3 615.7,72.6 616.0,67.6 616.3,64.9 616.5,70.2 616.8,64.8 617.0,64.8 617.3,62.0 617.6,68.5 617.8,70.7 618.1,72.9 618.3,68.0 618.6,73.0 618.9,68.7 619.1,68.2 619.4,71.0 619.6,73.0 619.9,67.2 620.2,67.6 620.4,67.9 620.7,68.9 620.9,64.8 621.2,72.9 621.5,66.9 621.7,70.5 622.0,65.1 622.2,70.1 622.5,70.2 622.8,66.8 623.0,77.1 623.3,70.2 623.5,76.1 623.8,72.6 624.1,65.8 624.3,67.0 624.6,70.4 624.8,68.9 625.1,68.8 625.4,67.4 625.6,61.0 625.9,67.7 626.1,60.0 626.4,70.2 626.7,65.6 626.9,65.6 627.2,67.7 627.4,69.7 627.7,62.6 628.0,61.3 628.2,64.1 628.5,60.0 628.7,64.5 629.0,75.3 629.3,64.2 629.5,71.3 629.8,62.8 630.0,69.9 630.3,67.3 630.6,68.3 630.8,71.0 631.1,76.0 631.3,69.4 631.6,69.1 631.9,64.5 632.1,71.1 632.4,67.6 632.6,72.1 632.9,68.4 633.2,75.9 633.4,60.3 633.7,67.4 633.9,72.3 634.2,67.1 634.5,65.3 634.7,67.5 635.0,62.8 635.2,69.1 635.5,78.8 635.8,73.4 636.0,63.9 636.3,64.9 636.5,66.9 636.8,72.8 637.1,65.1 637.3,65.7 637.6,72.3 637.8,72.2 638.1,67.0 638.4,63.9 638.6,62.1 638.9,65.7 639.1,60.0 639.4,71.7 639.7,66.0 639.9,70.6 640.2,76.4 640.4,73.5 640.7,63.8 641.0,72.3 641.2,73.5 641.5,65.5 641.7,64.6 642.0,68.1 642.3,61.9 642.5,74.8 642.8,60.0 643.0,64.0 643.3,67.5 643.6,67.6 643.8,69.3 644.1,69.7 644.3,67.7 644.6,73.4 644.9,60.0 645.1,68.6 645.4,65.6 645.6,69.2 645.9,69.5 646.2,64.8 646.4,65.9 646.7,71.9 646.9,70.1 647.2,65.7 647.5,77.2 647.7,78.3 648.0,62.5 648.2,69.9 648.5,79.1 648.8,71.9 649.0,69.5 649.3,67.7 649.5,66.3 649.8,67.7 650.1,66.3 650.3,71.7 650.6,66.9 650.8,66.7 651.1,63.6 651.4,68.4 651.6,64.8 651.9,67.8 652.1,73.0 652.4,70.1 652.7,70.7 652.9,70.1 653.2,68.8 653.4,68.1 653.7,67.3 654.0,71.8 654.2,68.0 654.7,85.1 655.2,91.5 655.7,94.6 656.2,97.0 656.7,98.8 657.2,100.3 657.7,101.5 658.2,102.7 658.7,103.9 659.2,105.1 659.7,106.2 660.2,107.2 660.7,108.1 661.2,109.0 661.7,109.8 662.2,110.6 662.7,111.4 663.2,112.2 663.7,112.9 664.2,113.7 664.7,114.5 665.2,115.2 665.7,116.0 666.2,116.7 666.7,117.4 667.2,118.1 667.7,118.8 668.2,119.4 668.7,120.1 669.2,120.8 669.7,121.4 670.2,122.1 670.7,122.7 671.2,123.4 671.7,124.0 672.2,124.7 672.7,125.4 673.2,126.1 673.7,126.8 674.2,127.5 674.7,128.2 675.2,128.9 675.7,129.6 676.2,130.3 676.7,131.0 677.2,131.7 677.7,132.4 678.2,133.1 678.7,133.8 679.2,134.5 679.7,135.3 680.2,136.0 680.7,136.8 681.2,137.6 681.7,138.4 682.2,139.2 682.7,140.0 683.2,140.9 683.7,141.8 684.2,142.7 684.7,143.6 685.2,144.5 685.7,145.4 686.2,146.4 686.7,147.4 687.2,148.5 687.7,149.7 688.2,150.9 688.7,152.2 689.2,153.6 689.7,155.1 690.2,156.9 690.7,159.1 691.2,161.4 691.7,164.0 692.2,166.8 692.7,169.6 693.2,172.4 693.7,175.1 694.2,177.8 694.4,178.8 694.8,179.0 695.2,179.2 695.6,179.5 696.0,176.5 696.4,174.2 696.8,172.4 697.2,171.0 697.6,169.7 698.0,168.7 698.4,167.8 698.8,167.0 699.2,166.3 699.6,165.7 700.0,165.2 700.4,164.7 700.8,164.3 701.2,164.0 701.6,163.7 702.0,163.4 702.4,163.2 702.8,163.0 703.2,162.9 703.6,162.7 704.0,162.6 704.4,162.6 704.8,162.5 705.2,162.5 705.6,162.5 706.0,162.5 706.4,162.6 706.8,162.7 707.2,162.7 707.6,162.9 708.0,163.0 708.4,163.1 708.8,163.3 709.2,163.5 709.6,163.7 710.0,163.9 710.4,164.2 710.8,164.5 711.2,164.7 711.6,165.1 712.0,165.4 712.4,165.7 712.8,166.1 713.2,166.5 713.6,166.9 714.0,167.3 714.4,167.8 714.8,168.3 715.2,168.8 715.6,169.3 716.0,169.9 716.4,170.4 716.8,171.1 717.2,171.7 717.6,172.4 718.0,173.2 718.4,173.9 718.8,174.8 719.2,175.7 719.6,176.6 720.0,177.6 720.4,178.7 720.8,179.9 721.2,181.2 721.6,182.7 722.0,184.3 722.4,186.2 722.8,188.3 723.2,190.9 723.6,194.1 724.0,195.2 724.4,195.4 724.8,195.6 724.9,195.7 725.3,195.8 725.7,196.0 726.1,196.1 726.5,195.2 726.9,193.2 727.3,191.5 727.7,190.2 728.1,189.1 728.5,188.1 728.9,187.3 729.3,186.5 729.7,185.8 730.1,185.3 730.5,184.7 730.9,184.2 731.3,183.8 731.7,183.4 732.1,183.1 732.5,182.7 732.9,182.5 733.3,182.2 733.7,182.0 734.1,181.8 734.5,181.6 734.9,181.4 735.3,181.3 735.7,181.1 736.1,181.0 736.5,180.9 736.9,180.9 737.3,180.8 737.7,180.8 738.1,180.7 738.5,180.7 738.9,180.7 739.3,180.7 739.7,180.7 740.1,180.8 740.5,180.8 740.9,180.9 741.3,180.9 741.7,181.0 742.1,181.1 742.5,181.2 742.9,181.4 743.3,181.5 743.7,181.6 744.1,181.8 744.5,181.9 744.9,182.1 745.3,182.3 745.7,182.5 746.1,182.7 746.5,182.9 746.9,183.2 747.3,183.4 747.7,183.7 748.1,184.0 748.5,184.3 748.9,184.6 749.3,184.9 749.7,185.2 750.1,185.6 750.5,185.9 750.9,186.3 751.3,186.7 751.7,187.1 752.1,187.6 752.5,188.1 752.9,188.6 753.3,189.1 753.7,189.6 754.1,190.2 754.5,190.8 754.9,191.5 755.3,192.1 755.7,192.9 756.1,193.7 756.5,194.5 756.9,195.5 757.3,196.5 757.7,197.6 758.1,198.8 758.5,200.2 758.9,201.8 759.3,203.7 759.7,205.9 760.1,207.1 760.5,207.2 760.9,207.4 761.3,207.5 761.3,207.5 761.7,207.3 762.1,207.1 762.5,207.0 762.9,206.4 763.3,204.5 763.7,203.0 764.1,201.7 764.5,200.5 764.9,199.4 765.3,198.5 765.7,197.6 766.1,196.8 766.5,196.1 766.9,195.3 767.3,194.7 767.7,194.1 768.1,193.5 768.5,192.9 768.9,192.4 769.3,191.8 769.7,191.3 770.1,190.9 770.5,190.4 770.9,190.0 771.3,189.6 771.7,189.1 772.1,188.8 772.5,188.4 772.9,188.0 773.3,187.7 773.7,187.3 774.1,187.0 774.5,186.7 774.9,186.4 775.3,186.1 775.7,185.8 776.1,185.5 776.5,185.2 776.9,184.9 777.3,184.7 777.7,184.4 778.1,184.2 778.5,184.0 778.9,183.8 779.3,183.6 779.7,183.3 780.1,183.2 780.5,183.0 780.9,182.8 781.3,182.6 781.7,182.4 782.1,182.3 782.5,182.1 782.9,182.0 783.3,181.9 783.7,181.8 784.1,181.6 784.5,181.5 784.9,181.4 785.3,181.3 785.7,181.3 786.1,181.2 786.5,181.1 786.9,181.1 787.3,181.0 787.7,181.0 788.1,181.0 788.5,181.0 788.9,181.0 789.3,181.0 789.7,181.1 790.1,181.1 790.5,181.2 790.9,181.3 791.3,181.4 791.7,181.5 792.1,181.6 792.5,181.8 792.9,182.0 793.3,182.2 793.7,182.4 794.1,182.7 794.5,183.0 794.9,183.3 795.3,183.8 795.7,184.2 796.1,184.7 796.5,185.4 796.9,186.1 797.3,186.9 797.7,187.9 798.1,189.2 798.5,190.7 798.9,190.5 799.3,190.3 799.7,190.1" stroke-width="1.4"/><polyline points="40.0,200.0 40.4,200.0 40.8,199.9 41.2,198.9 41.6,196.9 42.0,195.3 42.4,194.0 42.8,193.0 43.2,192.0 43.6,191.2 44.0,190.5 44.4,189.9 44.8,189.3 45.2,188.8 45.6,188.3 46.0,187.8 46.4,187.4 46.8,187.0 47.2,186.7 47.6,186.4 48.0,186.1 48.4,185.8 48.8,185.6 49.2,185.3 49.6,185.1 50.0,185.0 50.4,184.8 50.8,184.6 51.2,184.5 51.6,184.4 52.0,184.3 52.4,184.2 52.8,184.1 53.2,184.1 53.6,184.0 54.0,184.0 54.4,184.0 54.8,184.0 55.2,184.0 55.6,184.1 56.0,184.1 56.4,184.2 56.8,184.3 57.2,184.4 57.6,184.5 58.0,184.7 58.4,184.9 58.8,185.1 59.2,185.3 59.6,185.5 60.0,185.8 60.4,186.1 60.8,186.5 61.2,186.9 61.6,187.3 62.0,187.8 62.4,188.4 62.8,189.0 63.2,189.7 63.6,190.5 64.0,191.5 64.4,192.7 64.8,194.1 65.2,196.1 65.6,197.0 66.0,196.9 66.4,196.9" stroke-width="1.55"/><polyline points="66.4,196.9 66.8,196.8 67.2,196.6 67.6,196.5 68.0,194.3 68.4,192.3 68.8,190.6 69.2,189.2 69.6,188.0 70.0,186.9 70.4,185.9 70.8,185.0 71.2,184.1 71.6,183.4 72.0,182.7 72.4,182.0 72.8,181.4 73.2,180.8 73.6,180.3 74.0,179.8 74.4,179.3 74.8,178.8 75.2,178.4 75.6,178.0 76.0,177.6 76.4,177.2 76.8,176.9 77.2,176.5 77.6,176.2 78.0,175.9 78.4,175.6 78.8,175.4 79.2,175.1 79.6,174.9 80.0,174.6 80.4,174.4 80.8,174.2 81.2,174.1 81.6,173.9 82.0,173.7 82.4,173.6 82.8,173.5 83.2,173.3 83.6,173.2 84.0,173.1 84.4,173.1 84.8,173.0 85.2,173.0 85.6,172.9 86.0,172.9 86.4,172.9 86.8,172.9 87.2,172.9 87.6,173.0 88.0,173.0 88.4,173.1 88.8,173.2 89.2,173.3 89.6,173.5 90.0,173.6 90.4,173.8 90.8,174.0 91.2,174.3 91.6,174.5 92.0,174.9 92.4,175.2 92.8,175.6 93.2,176.0 93.6,176.5 94.0,177.1 94.4,177.7 94.8,178.4 95.2,179.2 95.6,180.2 96.0,181.4 96.4,182.8 96.8,184.5 97.2,186.4 97.6,186.3 98.0,186.1 98.4,186.0" stroke-width="1.55"/><polyline points="98.4,186.0 98.8,185.8 99.2,185.7 99.6,185.5 100.0,182.8 100.4,180.4 100.8,178.4 101.2,176.7 101.6,175.3 102.0,174.0 102.4,172.8 102.8,171.7 103.2,170.8 103.6,169.9 104.0,169.0 104.4,168.3 104.8,167.5 105.2,166.9 105.6,166.2 106.0,165.6 106.4,165.1 106.8,164.5 107.2,164.0 107.6,163.5 108.0,163.1 108.4,162.7 108.8,162.3 109.2,161.9 109.6,161.5 110.0,161.2 110.4,160.9 110.8,160.6 111.2,160.3 111.6,160.0 112.0,159.8 112.4,159.5 112.8,159.3 113.2,159.1 113.6,158.9 114.0,158.8 114.4,158.6 114.8,158.5 115.2,158.4 115.6,158.3 116.0,158.2 116.4,158.1 116.8,158.0 117.2,158.0 117.6,158.0 118.0,158.0 118.4,158.0 118.8,158.1 119.2,158.1 119.6,158.2 120.0,158.3 120.4,158.4 120.8,158.6 121.2,158.8 121.6,159.0 122.0,159.2 122.4,159.5 122.8,159.8 123.2,160.1 123.6,160.5 124.0,160.9 124.4,161.4 124.8,162.0 125.2,162.6 125.6,163.3 126.0,164.1 126.4,165.0 126.8,166.0 127.2,167.2 127.6,168.6 128.0,170.4 128.4,172.6 128.8,174.4 129.2,174.3 129.6,174.1" stroke-width="1.55"/><polyline points="129.9,174.0 130.4,171.7 130.9,169.3 131.4,166.8 131.9,164.4 132.4,161.9 132.9,159.7 133.4,157.5 133.9,155.6 134.4,154.0 134.9,152.6 135.4,151.3 135.9,150.0 136.4,148.9 136.9,147.8 137.4,146.7 137.9,145.7 138.4,144.8 138.9,143.9 139.4,143.0 139.9,142.1 140.4,141.2 140.9,140.3 141.4,139.4 141.9,138.6 142.4,137.7 142.9,136.9 143.4,136.1 143.9,135.3 144.4,134.5 144.9,133.7 145.4,132.9 145.9,132.2 146.4,131.5 146.9,130.7 147.4,130.0 147.9,129.3 148.4,128.7 148.9,128.0 149.4,127.3 149.9,126.7 150.4,126.1 150.9,125.5 151.4,124.9 151.9,124.3 152.4,123.8 152.9,123.3 153.4,122.8 153.9,122.3 154.4,121.8 154.9,121.3 155.4,120.8 155.9,120.4 156.4,119.9 156.9,119.4 157.4,119.0 157.9,118.5 158.4,118.1 158.9,117.6 159.4,117.1 159.9,116.6 160.4,116.1 160.9,115.6 161.4,115.0 161.9,114.5 162.4,113.9 162.9,113.4 163.4,112.9 163.9,112.3 164.4,111.8 164.9,111.3 165.4,110.7 165.9,110.1 166.4,109.5 166.9,108.8 167.4,108.1 167.9,107.3 168.4,106.5 168.9,105.6 169.4,104.8 169.9,103.8 170.4,102.7 170.9,101.2 171.4,99.1 171.9,94.7 172.4,86.0 172.9,71.1" stroke-width="1.55"/><polyline points="230.2,68.0 230.7,82.9 231.2,92.2 231.7,96.2 232.2,98.8 232.7,100.7 233.2,102.3 233.7,103.6 234.2,104.8 234.7,105.8 235.2,106.7 235.7,107.5 236.2,108.3 236.7,109.1 237.2,109.8 237.7,110.5 238.2,111.1 238.7,111.7 239.2,112.3 239.7,112.8 240.2,113.4 240.7,114.0 241.2,114.5 241.7,115.1 242.2,115.8 242.7,116.4 243.2,117.0 243.7,117.7 244.2,118.3 244.7,119.0 245.2,119.7 245.7,120.3 246.2,121.0 246.7,121.7 247.2,122.4 247.7,123.0 248.2,123.7 248.7,124.4 249.2,125.0 249.7,125.7 250.2,126.3 250.7,127.0 251.2,127.6 251.7,128.2 252.2,128.8 252.7,129.4 253.2,130.0 253.7,130.6 254.2,131.1 254.7,131.7 255.2,132.2 255.7,132.8 256.2,133.4 256.7,134.0 257.2,134.6 257.7,135.2 258.2,135.8 258.7,136.3 259.2,136.7 259.7,137.1 260.2,137.3 260.7,137.5 261.2,137.5 261.7,137.4 262.2,137.1 262.7,136.8 263.2,136.3 263.7,135.8 264.2,135.3 264.7,134.7 265.2,134.1 265.7,133.5 266.2,132.9 266.7,132.3 267.2,131.8 267.7,131.3 268.2,130.8 268.7,130.2 269.2,129.7 269.7,129.1 270.2,128.6 270.7,128.0 271.2,127.4 271.7,126.9 272.2,126.3 272.7,125.7 273.2,125.1 273.7,124.5 274.2,123.9 274.7,123.3 275.2,122.7 275.7,122.1 276.2,121.5 276.7,120.9 277.2,120.3 277.7,119.7 278.2,119.1 278.7,118.5 279.2,117.9 279.7,117.3 280.2,116.8 280.7,116.2 281.2,115.7 281.7,115.2 282.2,114.6 282.7,114.1 283.2,113.6 283.7,113.1 284.2,112.5 284.7,112.0 285.2,111.4 285.7,110.8 286.2,110.1 286.7,109.4 287.2,108.7 287.7,107.9 288.2,107.1 288.7,106.1 289.2,105.2 289.7,104.1 290.2,103.0 290.7,101.8 291.2,100.5 291.7,99.2 292.2,97.7 292.7,95.6 293.2,92.4 293.7,85.6 294.2,74.5" stroke-width="1.55"/><polyline points="473.2,68.0 473.7,86.8 474.2,91.5 474.7,94.7 475.2,97.0 475.7,98.7 476.2,100.0 476.7,101.3 477.2,102.5 477.7,103.6 478.2,104.6 478.7,105.5 479.2,106.3 479.7,107.1 480.2,107.8 480.7,108.5 481.2,109.2 481.7,109.8 482.2,110.5 482.7,111.2 483.2,112.0 483.7,112.8 484.2,113.6 484.7,114.3 485.2,115.1 485.7,115.9 486.2,116.6 486.7,117.4 487.2,118.1 487.7,118.8 488.2,119.6 488.7,120.3 489.2,121.1 489.7,121.8 490.2,122.5 490.7,123.3 491.2,124.0 491.7,124.8 492.2,125.5 492.7,126.2 493.2,127.0 493.7,127.7 494.2,128.4 494.7,129.1 495.2,129.8 495.7,130.5 496.2,131.3 496.7,132.0 497.2,132.7 497.7,133.5 498.2,134.2 498.7,135.0 499.2,135.8 499.7,136.6 500.2,137.4 500.7,138.2 501.2,139.1 501.7,140.0 502.2,140.8 502.7,141.7 503.2,142.7 503.7,143.6 504.2,144.6 504.7,145.6 505.2,146.6 505.7,147.7 506.2,148.8 506.7,149.9 507.2,151.1 507.7,152.4 508.2,153.7 508.7,155.2 509.2,156.8 509.7,158.4 510.2,160.1 510.7,161.8 511.2,163.5 511.7,165.2 512.2,166.9 512.7,168.6" stroke-width="1.55"/><polyline points="512.9,169.2 513.3,169.5 513.7,169.8 514.1,168.3 514.5,166.5 514.9,165.3 515.3,164.3 515.7,163.5 516.1,162.9 516.5,162.4 516.9,162.0 517.3,161.7 517.7,161.4 518.1,161.2 518.5,161.0 518.9,160.9 519.3,160.8 519.7,160.8 520.1,160.8 520.5,160.8 520.9,160.9 521.3,161.0 521.7,161.1 522.1,161.2 522.5,161.3 522.9,161.5 523.3,161.7 523.7,161.9 524.1,162.1 524.5,162.4 524.9,162.7 525.3,163.0 525.7,163.3 526.1,163.6 526.5,164.0 526.9,164.3 527.3,164.7 527.7,165.1 528.1,165.6 528.5,166.0 528.9,166.5 529.3,167.0 529.7,167.6 530.1,168.2 530.5,168.8 530.9,169.4 531.3,170.1 531.7,170.9 532.1,171.6 532.5,172.5 532.9,173.4 533.3,174.4 533.7,175.5 534.1,176.8 534.5,178.2 534.9,179.9 535.3,181.9 535.7,184.5 536.1,185.3 536.5,185.6" stroke-width="1.55"/><polyline points="536.7,185.7 537.1,185.4 537.5,184.6 537.9,182.4 538.3,180.8 538.7,179.5 539.1,178.4 539.5,177.5 539.9,176.6 540.3,175.9 540.7,175.2 541.1,174.5 541.5,173.9 541.9,173.4 542.3,172.9 542.7,172.4 543.1,171.9 543.5,171.5 543.9,171.1 544.3,170.7 544.7,170.4 545.1,170.1 545.5,169.8 545.9,169.5 546.3,169.2 546.7,169.0 547.1,168.8 547.5,168.6 547.9,168.5 548.3,168.3 548.7,168.2 549.1,168.1 549.5,168.1 549.9,168.1 550.3,168.1 550.7,168.2 551.1,168.4 551.5,168.6 551.9,168.9 552.3,169.3 552.7,169.8 553.1,170.5 553.5,171.6 553.9,173.2 554.3,173.5 554.7,173.2" stroke-width="1.55"/><polyline points="554.7,173.2 555.2,171.8 555.7,170.5 556.2,169.1 556.7,167.7 557.2,166.3 557.7,165.0 558.2,163.7 558.7,162.5 559.2,161.3 559.7,160.1 560.2,159.0 560.7,157.8 561.2,156.6 561.7,155.5 562.2,154.4 562.7,153.4 563.2,152.4 563.7,151.4 564.2,150.4 564.7,149.5 565.2,148.7 565.7,147.8 566.2,147.0 566.7,146.2 567.2,145.5 567.7,144.7 568.2,144.0 568.7,143.3 569.2,142.6 569.7,141.9 570.2,141.3 570.7,140.6 571.2,140.0 571.7,139.3 572.2,138.7 572.7,138.1 573.2,137.5 573.7,136.9 574.2,136.2 574.7,135.6 575.2,135.0 575.7,134.4 576.2,133.7 576.7,133.1 577.2,132.5 577.7,131.9 578.2,131.4 578.7,130.8 579.2,130.3 579.7,129.7 580.2,129.2 580.7,128.6 581.2,128.1 581.7,127.5 582.2,127.0 582.7,126.4 583.2,125.9 583.7,125.3 584.2,124.8 584.7,124.2 585.2,123.6 585.7,123.0 586.2,122.4 586.7,121.7 587.2,121.1 587.7,120.4 588.2,119.7 588.7,119.1 589.2,118.4 589.7,117.8 590.2,117.1 590.7,116.4 591.2,115.7 591.7,114.9 592.2,114.0 592.7,113.1 593.2,112.0 593.7,110.8 594.2,109.4 594.7,107.7 595.2,105.5 595.7,102.4 596.2,97.5 596.7,86.7 597.2,76.0" stroke-width="1.55"/><polyline points="654.2,68.0 654.7,85.1 655.2,91.5 655.7,94.6 656.2,97.0 656.7,98.8 657.2,100.3 657.7,101.5 658.2,102.7 658.7,103.9 659.2,105.1 659.7,106.2 660.2,107.2 660.7,108.1 661.2,109.0 661.7,109.8 662.2,110.6 662.7,111.4 663.2,112.2 663.7,112.9 664.2,113.7 664.7,114.5 665.2,115.2 665.7,116.0 666.2,116.7 666.7,117.4 667.2,118.1 667.7,118.8 668.2,119.4 668.7,120.1 669.2,120.8 669.7,121.4 670.2,122.1 670.7,122.7 671.2,123.4 671.7,124.0 672.2,124.7 672.7,125.4 673.2,126.1 673.7,126.8 674.2,127.5 674.7,128.2 675.2,128.9 675.7,129.6 676.2,130.3 676.7,131.0 677.2,131.7 677.7,132.4 678.2,133.1 678.7,133.8 679.2,134.5 679.7,135.3 680.2,136.0 680.7,136.8 681.2,137.6 681.7,138.4 682.2,139.2 682.7,140.0 683.2,140.9 683.7,141.8 684.2,142.7 684.7,143.6 685.2,144.5 685.7,145.4 686.2,146.4 686.7,147.4 687.2,148.5 687.7,149.7 688.2,150.9 688.7,152.2 689.2,153.6 689.7,155.1 690.2,156.9 690.7,159.1 691.2,161.4 691.7,164.0 692.2,166.8 692.7,169.6 693.2,172.4 693.7,175.1 694.2,177.8" stroke-width="1.55"/><polyline points="694.4,178.8 694.8,179.0 695.2,179.2 695.6,179.5 696.0,176.5 696.4,174.2 696.8,172.4 697.2,171.0 697.6,169.7 698.0,168.7 698.4,167.8 698.8,167.0 699.2,166.3 699.6,165.7 700.0,165.2 700.4,164.7 700.8,164.3 701.2,164.0 701.6,163.7 702.0,163.4 702.4,163.2 702.8,163.0 703.2,162.9 703.6,162.7 704.0,162.6 704.4,162.6 704.8,162.5 705.2,162.5 705.6,162.5 706.0,162.5 706.4,162.6 706.8,162.7 707.2,162.7 707.6,162.9 708.0,163.0 708.4,163.1 708.8,163.3 709.2,163.5 709.6,163.7 710.0,163.9 710.4,164.2 710.8,164.5 711.2,164.7 711.6,165.1 712.0,165.4 712.4,165.7 712.8,166.1 713.2,166.5 713.6,166.9 714.0,167.3 714.4,167.8 714.8,168.3 715.2,168.8 715.6,169.3 716.0,169.9 716.4,170.4 716.8,171.1 717.2,171.7 717.6,172.4 718.0,173.2 718.4,173.9 718.8,174.8 719.2,175.7 719.6,176.6 720.0,177.6 720.4,178.7 720.8,179.9 721.2,181.2 721.6,182.7 722.0,184.3 722.4,186.2 722.8,188.3 723.2,190.9 723.6,194.1 724.0,195.2 724.4,195.4 724.8,195.6" stroke-width="1.55"/><polyline points="724.9,195.7 725.3,195.8 725.7,196.0 726.1,196.1 726.5,195.2 726.9,193.2 727.3,191.5 727.7,190.2 728.1,189.1 728.5,188.1 728.9,187.3 729.3,186.5 729.7,185.8 730.1,185.3 730.5,184.7 730.9,184.2 731.3,183.8 731.7,183.4 732.1,183.1 732.5,182.7 732.9,182.5 733.3,182.2 733.7,182.0 734.1,181.8 734.5,181.6 734.9,181.4 735.3,181.3 735.7,181.1 736.1,181.0 736.5,180.9 736.9,180.9 737.3,180.8 737.7,180.8 738.1,180.7 738.5,180.7 738.9,180.7 739.3,180.7 739.7,180.7 740.1,180.8 740.5,180.8 740.9,180.9 741.3,180.9 741.7,181.0 742.1,181.1 742.5,181.2 742.9,181.4 743.3,181.5 743.7,181.6 744.1,181.8 744.5,181.9 744.9,182.1 745.3,182.3 745.7,182.5 746.1,182.7 746.5,182.9 746.9,183.2 747.3,183.4 747.7,183.7 748.1,184.0 748.5,184.3 748.9,184.6 749.3,184.9 749.7,185.2 750.1,185.6 750.5,185.9 750.9,186.3 751.3,186.7 751.7,187.1 752.1,187.6 752.5,188.1 752.9,188.6 753.3,189.1 753.7,189.6 754.1,190.2 754.5,190.8 754.9,191.5 755.3,192.1 755.7,192.9 756.1,193.7 756.5,194.5 756.9,195.5 757.3,196.5 757.7,197.6 758.1,198.8 758.5,200.2 758.9,201.8 759.3,203.7 759.7,205.9 760.1,207.1 760.5,207.2 760.9,207.4 761.3,207.5" stroke-width="1.55"/><polyline points="761.3,207.5 761.7,207.3 762.1,207.1 762.5,207.0 762.9,206.4 763.3,204.5 763.7,203.0 764.1,201.7 764.5,200.5 764.9,199.4 765.3,198.5 765.7,197.6 766.1,196.8 766.5,196.1 766.9,195.3 767.3,194.7 767.7,194.1 768.1,193.5 768.5,192.9 768.9,192.4 769.3,191.8 769.7,191.3 770.1,190.9 770.5,190.4 770.9,190.0 771.3,189.6 771.7,189.1 772.1,188.8 772.5,188.4 772.9,188.0 773.3,187.7 773.7,187.3 774.1,187.0 774.5,186.7 774.9,186.4 775.3,186.1 775.7,185.8 776.1,185.5 776.5,185.2 776.9,184.9 777.3,184.7 777.7,184.4 778.1,184.2 778.5,184.0 778.9,183.8 779.3,183.6 779.7,183.3 780.1,183.2 780.5,183.0 780.9,182.8 781.3,182.6 781.7,182.4 782.1,182.3 782.5,182.1 782.9,182.0 783.3,181.9 783.7,181.8 784.1,181.6 784.5,181.5 784.9,181.4 785.3,181.3 785.7,181.3 786.1,181.2 786.5,181.1 786.9,181.1 787.3,181.0 787.7,181.0 788.1,181.0 788.5,181.0 788.9,181.0 789.3,181.0 789.7,181.1 790.1,181.1 790.5,181.2 790.9,181.3 791.3,181.4 791.7,181.5 792.1,181.6 792.5,181.8 792.9,182.0 793.3,182.2 793.7,182.4 794.1,182.7 794.5,183.0 794.9,183.3 795.3,183.8 795.7,184.2 796.1,184.7 796.5,185.4 796.9,186.1 797.3,186.9 797.7,187.9 798.1,189.2 798.5,190.7 798.9,190.5 799.3,190.3 799.7,190.1" stroke-width="1.55"/></g><path d="M78.5 207.5v-3M78.5 51.5v3M109.5 207.5v-3M109.5 51.5v3M139.5 207.5v-3M139.5 51.5v3M170.5 207.5v-6M170.5 51.5v6M200.5 207.5v-3M200.5 51.5v3M231.5 207.5v-3M231.5 51.5v3M261.5 207.5v-3M261.5 51.5v3M292.5 207.5v-6M292.5 51.5v6M322.5 207.5v-3M322.5 51.5v3M353.5 207.5v-3M353.5 51.5v3M383.5 207.5v-3M383.5 51.5v3M414.5 207.5v-6M414.5 51.5v6M444.5 207.5v-3M444.5 51.5v3M474.5 207.5v-3M474.5 51.5v3M505.5 207.5v-3M505.5 51.5v3M535.5 207.5v-6M535.5 51.5v6M566.5 207.5v-3M566.5 51.5v3M596.5 207.5v-3M596.5 51.5v3M627.5 207.5v-3M627.5 51.5v3M657.5 207.5v-6M657.5 51.5v6M688.5 207.5v-3M688.5 51.5v3M718.5 207.5v-3M718.5 51.5v3M749.5 207.5v-3M749.5 51.5v3M48.5 65.5h6M779.5 65.5h-6M48.5 79.5h3M779.5 79.5h-3M48.5 94.5h3M779.5 94.5h-3M48.5 108.5h6M779.5 108.5h-6M48.5 122.5h3M779.5 122.5h-3M48.5 136.5h3M779.5 136.5h-3M48.5 150.5h6M779.5 150.5h-6M48.5 164.5h3M779.5 164.5h-3M48.5 179.5h3M779.5 179.5h-3M48.5 193.5h6M779.5 193.5h-6M48.5 51.5H779.5V207.5H48.5Z" stroke="#d9d9d9" stroke-width="1" fill="none"/><text x="48.5" y="221" font-size="11" fill="#d6d6d6" class="tl" text-anchor="middle">-120</text><text x="170.3" y="221" font-size="11" fill="#d6d6d6" class="tl" text-anchor="middle">-80</text><text x="292.2" y="221" font-size="11" fill="#d6d6d6" class="tl" text-anchor="middle">-40</text><text x="414.0" y="221" font-size="11" fill="#d6d6d6" class="tl" text-anchor="middle">0</text><text x="535.8" y="221" font-size="11" fill="#d6d6d6" class="tl" text-anchor="middle">40</text><text x="657.7" y="221" font-size="11" fill="#d6d6d6" class="tl" text-anchor="middle">80</text><text x="779.5" y="221" font-size="11" fill="#d6d6d6" class="tl" text-anchor="middle">120</text><text x="43" y="69.6" font-size="11" fill="#d6d6d6" class="tl" text-anchor="end">0</text><text x="43" y="112.1" font-size="11" fill="#d6d6d6" class="tl" text-anchor="end">-30</text><text x="43" y="154.7" font-size="11" fill="#d6d6d6" class="tl" text-anchor="end">-60</text><text x="43" y="197.2" font-size="11" fill="#d6d6d6" class="tl" text-anchor="end">-90</text><text x="413.5" y="238.9" font-size="13" fill="#d6d6d6" text-anchor="middle">Frequency (MHz)</text><text transform="translate(18,129.4) rotate(-90)" font-size="13" fill="#d6d6d6" text-anchor="middle">Power (dBm)</text><rect x="0" y="250" width="800" height="1" fill="#141414"/><rect x="0" y="251" width="800" height="1" fill="#c0c0c0"/><rect x="0" y="252" width="800" height="1" fill="#161616"/><rect x="44.3" y="260" width="735.2" height="17" fill="url(#cb)"/><path d="M45.5 263V268" stroke="#ffffff" stroke-width="1"/><text x="46.0" y="272" font-size="11" fill="#ececec">-80</text><path d="M118.5 263V268" stroke="#ffffff" stroke-width="1"/><text x="119.0" y="272" font-size="11" fill="#ececec">-70</text><path d="M192.5 263V268" stroke="#ffffff" stroke-width="1"/><text x="193.0" y="272" font-size="11" fill="#ececec">-60</text><path d="M266.5 263V268" stroke="#ffffff" stroke-width="1"/><text x="267.0" y="272" font-size="11" fill="#ececec">-50</text><path d="M339.5 263V268" stroke="#ffffff" stroke-width="1"/><text x="340.0" y="272" font-size="11" fill="#ececec">-40</text><path d="M412.5 263V268" stroke="#ffffff" stroke-width="1"/><text x="413.0" y="272" font-size="11" fill="#ececec">-30</text><path d="M486.5 263V268" stroke="#ffffff" stroke-width="1"/><text x="487.0" y="272" font-size="11" fill="#ececec">-20</text><path d="M560.5 263V268" stroke="#ffffff" stroke-width="1"/><text x="561.0" y="272" font-size="11" fill="#ececec">-10</text><path d="M633.5 263V268" stroke="#ffffff" stroke-width="1"/><text x="634.0" y="272" font-size="11" fill="#ececec">0</text><path d="M706.5 263V268" stroke="#ffffff" stroke-width="1"/><text x="707.0" y="272" font-size="11" fill="#ececec">10</text><text x="761" y="272" font-size="11" fill="#ececec">dBm</text><text x="44.5" y="296" font-size="11" fill="#d6d6d6">x10</text><text x="62.6" y="289" font-size="9" fill="#d6d6d6">-4</text><rect x="170" y="298" width="58" height="134" fill="url(#sp)"/><rect x="291.5" y="298" width="181.5" height="134" fill="url(#sp)"/><rect x="596.3" y="298" width="57.700000000000045" height="134" fill="url(#sp)"/><rect x="170" y="418" width="58" height="14" fill="#ffd000" opacity="0.12"/><rect x="291.5" y="418" width="181.5" height="14" fill="#ffd000" opacity="0.12"/><rect x="596.3" y="418" width="57.700000000000045" height="14" fill="#ffd000" opacity="0.12"/><rect x="350.5" y="298" width="1.2" height="134" fill="#f4ff9a" opacity="0.9"/><rect x="409" y="298" width="6" height="134" fill="#f0ff10"/><rect x="410" y="298" width="4.2" height="134" fill="#9cff64"/><path d="M167.5 298.5V432.5M290.5 298.5V432.5M412.5 298.5V432.5M534.5 298.5V432.5M657.5 298.5V432.5M45.5 376.5H779.5M45.5 318.5H779.5" stroke="#ffffff" stroke-opacity="0.24" stroke-width="1" fill="none"/><path d="M76.5 433.5v-3M76.5 298.5v3M106.5 433.5v-3M106.5 298.5v3M137.5 433.5v-3M137.5 298.5v3M167.5 433.5v-6M167.5 298.5v6M198.5 433.5v-3M198.5 298.5v3M228.5 433.5v-3M228.5 298.5v3M259.5 433.5v-3M259.5 298.5v3M290.5 433.5v-6M290.5 298.5v6M320.5 433.5v-3M320.5 298.5v3M351.5 433.5v-3M351.5 298.5v3M381.5 433.5v-3M381.5 298.5v3M412.5 433.5v-6M412.5 298.5v6M443.5 433.5v-3M443.5 298.5v3M473.5 433.5v-3M473.5 298.5v3M504.5 433.5v-3M504.5 298.5v3M534.5 433.5v-6M534.5 298.5v6M565.5 433.5v-3M565.5 298.5v3M596.5 433.5v-3M596.5 298.5v3M626.5 433.5v-3M626.5 298.5v3M657.5 433.5v-6M657.5 298.5v6M687.5 433.5v-3M687.5 298.5v3M718.5 433.5v-3M718.5 298.5v3M748.5 433.5v-3M748.5 298.5v3M45.5 433.5h6M779.5 433.5h-6M45.5 404.5h3M779.5 404.5h-3M45.5 376.5h6M779.5 376.5h-6M45.5 347.5h3M779.5 347.5h-3M45.5 318.5h6M779.5 318.5h-6M45.5 298.5H779.5V433.5H45.5Z" stroke="#d9d9d9" stroke-width="1" fill="none"/><text x="45.5" y="447" font-size="11" fill="#d6d6d6" class="tl" text-anchor="middle">-120</text><text x="167.8" y="447" font-size="11" fill="#d6d6d6" class="tl" text-anchor="middle">-80</text><text x="290.2" y="447" font-size="11" fill="#d6d6d6" class="tl" text-anchor="middle">-40</text><text x="412.5" y="447" font-size="11" fill="#d6d6d6" class="tl" text-anchor="middle">0</text><text x="534.8" y="447" font-size="11" fill="#d6d6d6" class="tl" text-anchor="middle">40</text><text x="657.2" y="447" font-size="11" fill="#d6d6d6" class="tl" text-anchor="middle">80</text><text x="779.5" y="447" font-size="11" fill="#d6d6d6" class="tl" text-anchor="middle">120</text><text x="40.5" y="437.4" font-size="11" fill="#d6d6d6" class="tl" text-anchor="end">0</text><text x="40.5" y="379.9" font-size="11" fill="#d6d6d6" class="tl" text-anchor="end">5</text><text x="40.5" y="322.4" font-size="11" fill="#d6d6d6" class="tl" text-anchor="end">10</text><text x="412.5" y="465" font-size="13" fill="#d6d6d6" text-anchor="middle">Frequency (MHz)</text><text transform="translate(18,366) rotate(-90)" font-size="13" fill="#d6d6d6" text-anchor="middle">Time (secs)</text><rect x="0" y="477" width="800" height="23" fill="#e6e6e6"/><text x="7.5" y="492.8" font-size="12" fill="#262626">Processing</text><text x="102" y="492.8" font-size="12" fill="#262626">ΔT=12.8000 us</text><text x="190" y="492.8" font-size="12" fill="#262626">Samples/Update=3072</text><text x="319" y="492.8" font-size="12" fill="#262626">VBW=37.3019 kHz</text><text x="426.5" y="492.8" font-size="12" fill="#262626">RBW=78.1250 kHz</text><text x="534.5" y="492.8" font-size="12" fill="#262626">Sample Rate=240.0000 MHz</text><text x="695" y="492.8" font-size="12" fill="#262626">Updates=91</text><text x="766" y="492.8" font-size="12" fill="#262626">T=0.0011</text></svg>
</body></html>
